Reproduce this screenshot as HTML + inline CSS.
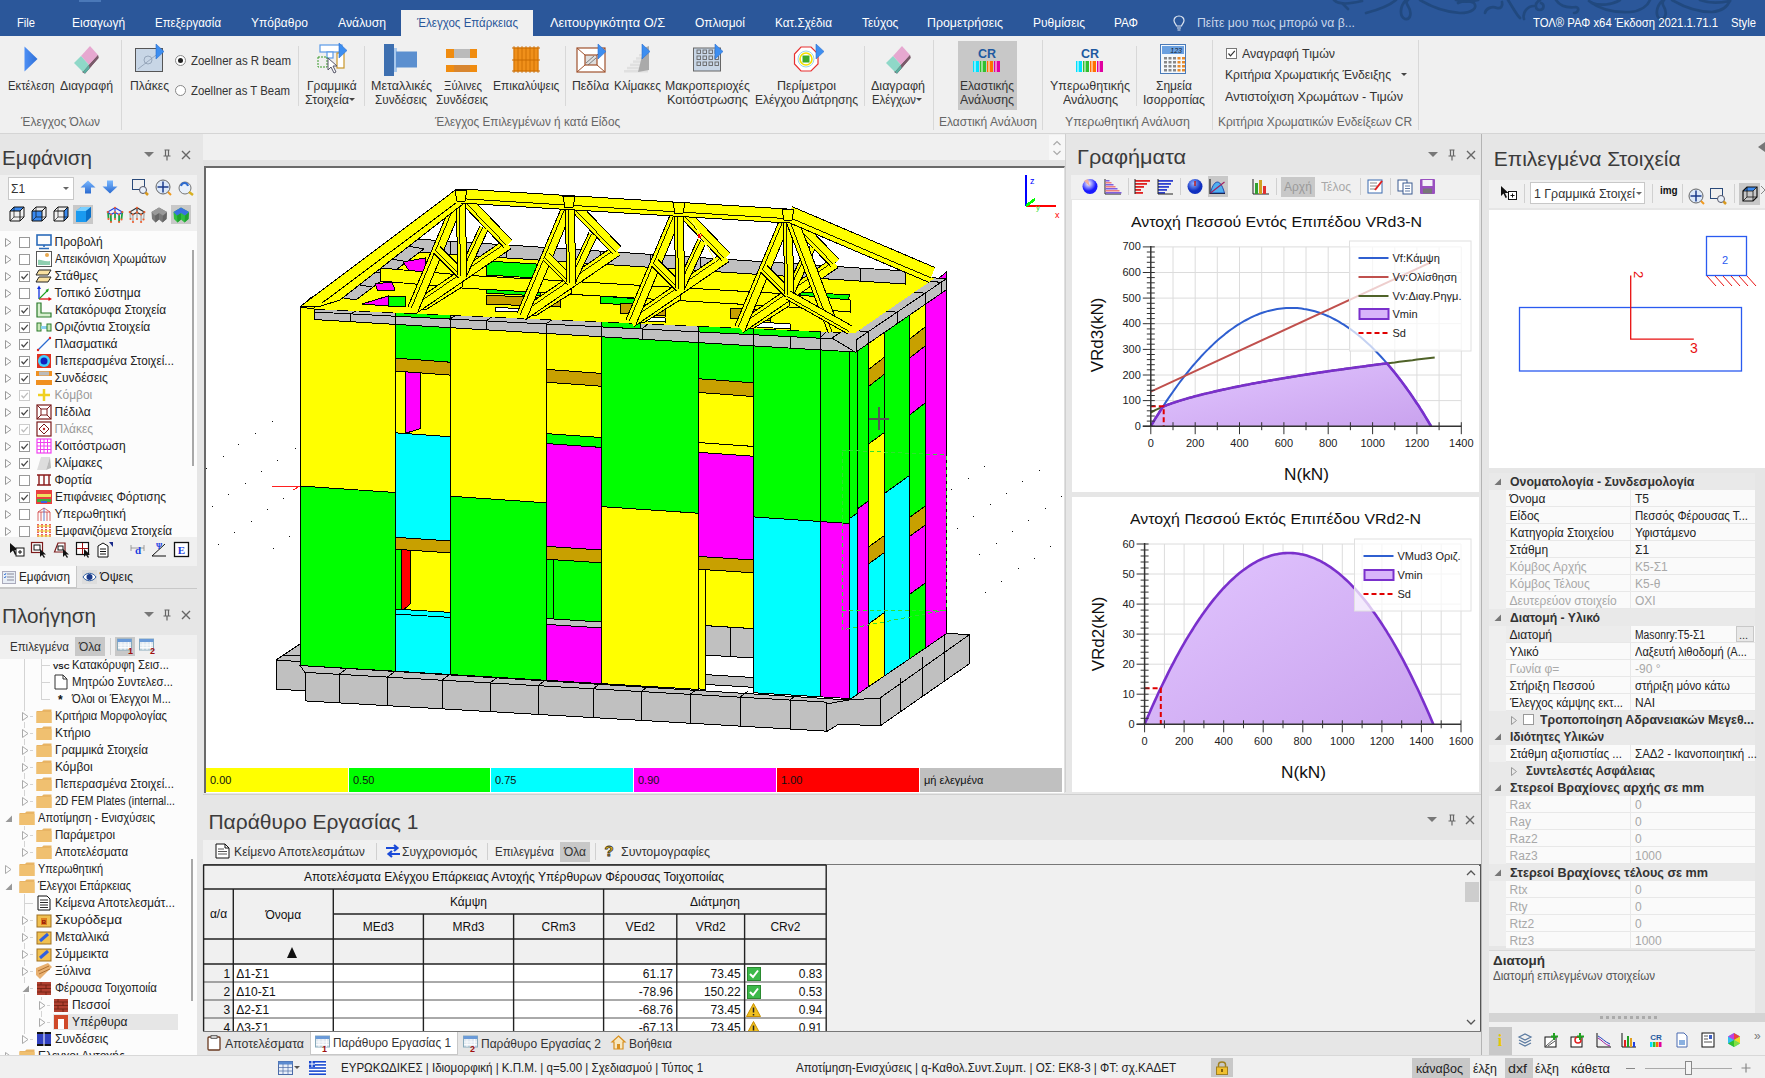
<!DOCTYPE html>
<html><head><meta charset="utf-8"><title>ΤΟΛ ΡΑΦ</title>
<style>
*{margin:0;padding:0;box-sizing:border-box}
html,body{width:1765px;height:1078px;overflow:hidden;background:#f0f0f0;font-family:"Liberation Sans",sans-serif;color:#222;font-size:12px}
.a{position:absolute}
.t{position:absolute;white-space:nowrap;line-height:14px;font-size:12px}
.c{text-align:center}
svg{position:absolute;overflow:visible}

</style></head>
<body>
<div class="a" style="left:0px;top:0px;width:1765px;height:36px;background:#2b579a;"></div>
<div class="a" style="left:79px;top:0px;width:22px;height:2px;background:#4a78b8;"></div>
<svg class="a" style="left:0;top:0" width="1765" height="36" viewBox="0 0 1765 36">
<g fill="none" stroke="#21497f" stroke-width="2.7" stroke-linecap="round">
<path d="M1334 0 C1338 4, 1346 5, 1362 1"/>
<path d="M1343 4 L1348 9"/>
<path d="M1366 13 C1378 10, 1390 5, 1396 0"/>
<path d="M1406 0 C1400 6, 1399 16, 1405 19 C1411 20, 1412 12, 1408 6 C1406 3, 1406 1, 1408 0"/>
<path d="M1420 0 C1430 6, 1445 12, 1460 13 C1472 13, 1478 8, 1474 3 C1470 0, 1462 1, 1458 3"/>
<path d="M1456 0 C1462 2, 1470 2, 1478 0"/>
<path d="M1485 13 C1486 8, 1492 6, 1497 8 C1501 9, 1503 6, 1502 2"/>
<path d="M1508 0 C1512 6, 1516 14, 1520 18"/>
<path d="M1524 19 C1522 12, 1528 6, 1534 6"/>
<path d="M1540 0 C1534 3, 1535 10, 1540 10 C1545 9, 1544 4, 1541 3"/>
<path d="M1556 0 C1560 6, 1568 8, 1576 7 C1580 8, 1578 13, 1574 13"/>
<path d="M1589 1 C1598 8, 1612 13, 1630 12 C1642 11, 1648 5, 1650 0"/>
<path d="M1592 3 C1600 6, 1612 5, 1620 0"/>
<path d="M1663 0 C1656 6, 1655 16, 1660 19 C1666 20, 1667 12, 1664 7 C1662 4, 1662 2, 1664 0"/>
<path d="M1672 0 C1684 7, 1698 12, 1712 12 C1722 11, 1728 6, 1730 0"/>
<path d="M1700 0 C1708 3, 1720 3, 1730 1"/>
</g></svg>
<div class="t" style="left:17.0px;top:16.0px;font-size:12px;line-height:14px;color:#ffffff;transform:scaleX(0.931);transform-origin:0 0;">File</div>
<div class="t" style="left:72.0px;top:16.0px;font-size:12px;line-height:14px;color:#ffffff;">Εισαγωγή</div>
<div class="t" style="left:155.0px;top:16.0px;font-size:12px;line-height:14px;color:#ffffff;transform:scaleX(0.955);transform-origin:0 0;">Επεξεργασία</div>
<div class="t" style="left:251.0px;top:16.0px;font-size:12px;line-height:14px;color:#ffffff;">Υπόβαθρο</div>
<div class="t" style="left:338.0px;top:16.0px;font-size:12px;line-height:14px;color:#ffffff;transform:scaleX(1.020);transform-origin:0 0;">Ανάλυση</div>
<div class="t" style="left:550.0px;top:16.0px;font-size:12px;line-height:14px;color:#ffffff;transform:scaleX(1.065);transform-origin:0 0;">Λειτουργικότητα Ο/Σ</div>
<div class="t" style="left:695.0px;top:16.0px;font-size:12px;line-height:14px;color:#ffffff;">Οπλισμοί</div>
<div class="t" style="left:775.0px;top:16.0px;font-size:12px;line-height:14px;color:#ffffff;transform:scaleX(0.979);transform-origin:0 0;">Κατ.Σχέδια</div>
<div class="t" style="left:862.0px;top:16.0px;font-size:12px;line-height:14px;color:#ffffff;">Τεύχος</div>
<div class="t" style="left:927.0px;top:16.0px;font-size:12px;line-height:14px;color:#ffffff;transform:scaleX(1.029);transform-origin:0 0;">Προμετρήσεις</div>
<div class="t" style="left:1033.0px;top:16.0px;font-size:12px;line-height:14px;color:#ffffff;">Ρυθμίσεις</div>
<div class="t" style="left:1114.0px;top:16.0px;font-size:12px;line-height:14px;color:#ffffff;transform:scaleX(0.986);transform-origin:0 0;">ΡΑΦ</div>
<div class="a" style="left:401px;top:10px;width:132px;height:26px;background:#f0f0f0;"></div>
<div class="t" style="left:417.0px;top:16.0px;font-size:12px;line-height:14px;color:#2b579a;transform:scaleX(0.961);transform-origin:0 0;">Έλεγχος Επάρκειας</div>
<svg style="left:1173px;top:15px" width="12" height="16" viewBox="0 0 12 16"><path d="M6 1 C2.5 1 1 3.5 1 5.5 C1 8 3 9 3.5 11 L8.5 11 C9 9 11 8 11 5.5 C11 3.5 9.5 1 6 1 Z" fill="none" stroke="#dfe6f0" stroke-width="1.2"/><path d="M4 13 H8 M4.5 15 H7.5" stroke="#dfe6f0" stroke-width="1.2"/></svg>
<div class="t" style="left:1197.0px;top:16.0px;font-size:12px;line-height:14px;color:#c9d6ea;transform:scaleX(1.022);transform-origin:0 0;">Πείτε μου πως μπορώ να β...</div>
<div class="t" style="left:1533.0px;top:16.0px;font-size:12px;line-height:14px;color:#ffffff;transform:scaleX(0.943);transform-origin:0 0;">ΤΟΛ® ΡΑΦ x64 Έκδοση 2021.1.71.1</div>
<div class="t" style="left:1731.0px;top:16.0px;font-size:12px;line-height:14px;color:#ffffff;transform:scaleX(0.937);transform-origin:0 0;">Style</div>
<div class="a" style="left:0px;top:36px;width:1765px;height:98px;background:#f0f0f0;"></div>
<div class="a" style="left:0px;top:133px;width:1765px;height:1px;background:#d5d5d5;"></div>
<div class="a" style="left:121px;top:40px;width:1px;height:90px;background:#d8d8d8;"></div>
<div class="a" style="left:298px;top:46px;width:1px;height:60px;background:#d8d8d8;"></div>
<div class="a" style="left:364px;top:46px;width:1px;height:60px;background:#d8d8d8;"></div>
<div class="a" style="left:565px;top:46px;width:1px;height:60px;background:#d8d8d8;"></div>
<div class="a" style="left:864px;top:46px;width:1px;height:60px;background:#d8d8d8;"></div>
<div class="a" style="left:933px;top:40px;width:1px;height:90px;background:#d8d8d8;"></div>
<div class="a" style="left:1042px;top:40px;width:1px;height:90px;background:#d8d8d8;"></div>
<div class="a" style="left:1136px;top:46px;width:1px;height:60px;background:#d8d8d8;"></div>
<div class="a" style="left:1212px;top:40px;width:1px;height:90px;background:#d8d8d8;"></div>
<div class="a" style="left:1418px;top:40px;width:1px;height:90px;background:#d8d8d8;"></div>
<div class="a" style="left:958px;top:41px;width:59px;height:69px;background:#c8c8c8;"></div>
<div class="t" style="left:7.5px;top:79.0px;font-size:12px;line-height:14px;color:#333;transform:scaleX(0.939);transform-origin:0 0;">Εκτέλεση</div>
<div class="t" style="left:60.0px;top:79.0px;font-size:12px;line-height:14px;color:#333;transform:scaleX(1.022);transform-origin:0 0;">Διαγραφή</div>
<div class="t" style="left:130.0px;top:79.0px;font-size:12px;line-height:14px;color:#333;transform:scaleX(1.012);transform-origin:0 0;">Πλάκες</div>
<div class="t" style="left:307.0px;top:79.0px;font-size:12px;line-height:14px;color:#333;">Γραμμικά</div>
<div class="t" style="left:305.0px;top:93.0px;font-size:12px;line-height:14px;color:#333;transform:scaleX(1.047);transform-origin:0 0;">Στοιχεία</div>
<div class="t" style="left:371.0px;top:79.0px;font-size:12px;line-height:14px;color:#333;transform:scaleX(1.040);transform-origin:0 0;">Μεταλλικές</div>
<div class="t" style="left:375.0px;top:93.0px;font-size:12px;line-height:14px;color:#333;transform:scaleX(0.977);transform-origin:0 0;">Συνδέσεις</div>
<div class="t" style="left:444.0px;top:79.0px;font-size:12px;line-height:14px;color:#333;transform:scaleX(0.946);transform-origin:0 0;">Ξύλινες</div>
<div class="t" style="left:436.0px;top:93.0px;font-size:12px;line-height:14px;color:#333;transform:scaleX(0.977);transform-origin:0 0;">Συνδέσεις</div>
<div class="t" style="left:493.0px;top:79.0px;font-size:12px;line-height:14px;color:#333;">Επικαλύψεις</div>
<div class="t" style="left:572.0px;top:79.0px;font-size:12px;line-height:14px;color:#333;transform:scaleX(1.024);transform-origin:0 0;">Πεδίλα</div>
<div class="t" style="left:614.0px;top:79.0px;font-size:12px;line-height:14px;color:#333;transform:scaleX(0.986);transform-origin:0 0;">Κλίμακες</div>
<div class="t" style="left:665.0px;top:79.0px;font-size:12px;line-height:14px;color:#333;transform:scaleX(1.022);transform-origin:0 0;">Μακροπεριοχές</div>
<div class="t" style="left:667.0px;top:93.0px;font-size:12px;line-height:14px;color:#333;transform:scaleX(1.054);transform-origin:0 0;">Κοιτόστρωσης</div>
<div class="t" style="left:777.0px;top:79.0px;font-size:12px;line-height:14px;color:#333;transform:scaleX(1.041);transform-origin:0 0;">Περίμετροι</div>
<div class="t" style="left:755.0px;top:93.0px;font-size:12px;line-height:14px;color:#333;">Ελέγχου Διάτρησης</div>
<div class="t" style="left:871.0px;top:79.0px;font-size:12px;line-height:14px;color:#333;transform:scaleX(1.042);transform-origin:0 0;">Διαγραφή</div>
<div class="t" style="left:872.0px;top:93.0px;font-size:12px;line-height:14px;color:#333;transform:scaleX(0.942);transform-origin:0 0;">Ελέγχων</div>
<div class="t" style="left:960.0px;top:79.0px;font-size:12px;line-height:14px;color:#333;">Ελαστικής</div>
<div class="t" style="left:960.0px;top:93.0px;font-size:12px;line-height:14px;color:#333;transform:scaleX(1.022);transform-origin:0 0;">Ανάλυσης</div>
<div class="t" style="left:1050.0px;top:79.0px;font-size:12px;line-height:14px;color:#333;transform:scaleX(1.038);transform-origin:0 0;">Υπερωθητικής</div>
<div class="t" style="left:1063.0px;top:93.0px;font-size:12px;line-height:14px;color:#333;transform:scaleX(1.040);transform-origin:0 0;">Ανάλυσης</div>
<div class="t" style="left:1156.0px;top:79.0px;font-size:12px;line-height:14px;color:#333;">Σημεία</div>
<div class="t" style="left:1143.0px;top:93.0px;font-size:12px;line-height:14px;color:#333;transform:scaleX(1.012);transform-origin:0 0;">Ισορροπίας</div>
<svg style="left:349px;top:98px" width="6" height="4"><path d="M0 0 H6 L3 3 Z" fill="#444"/></svg>
<svg style="left:916px;top:98px" width="6" height="4"><path d="M0 0 H6 L3 3 Z" fill="#444"/></svg>
<svg style="left:1401px;top:73px" width="6" height="4"><path d="M0 0 H6 L3 3 Z" fill="#444"/></svg>
<div class="t" style="left:21.0px;top:115.0px;font-size:12px;line-height:14px;color:#666;">Έλεγχος Όλων</div>
<div class="t" style="left:435.0px;top:115.0px;font-size:12px;line-height:14px;color:#666;transform:scaleX(0.978);transform-origin:0 0;">Έλεγχος Επιλεγμένων ή κατά Είδος</div>
<div class="t" style="left:939.0px;top:115.0px;font-size:12px;line-height:14px;color:#666;">Ελαστική Ανάλυση</div>
<div class="t" style="left:1065.0px;top:115.0px;font-size:12px;line-height:14px;color:#666;transform:scaleX(1.033);transform-origin:0 0;">Υπερωθητική Ανάλυση</div>
<div class="t" style="left:1218.0px;top:115.0px;font-size:12px;line-height:14px;color:#666;">Κριτήρια Χρωματικών Ενδείξεων CR</div>
<div class="a" style="left:175px;top:55px;width:11px;height:11px;border:1px solid #888;border-radius:50%;background:#fff"></div><div class="a" style="left:178px;top:58px;width:5px;height:5px;border-radius:50%;background:#222"></div>
<div class="a" style="left:175px;top:85px;width:11px;height:11px;border:1px solid #888;border-radius:50%;background:#fff"></div>
<div class="t" style="left:191.0px;top:54.0px;font-size:12px;line-height:14px;color:#333;transform:scaleX(0.955);transform-origin:0 0;">Zoellner as R beam</div>
<div class="t" style="left:191.0px;top:84.0px;font-size:12px;line-height:14px;color:#333;transform:scaleX(0.949);transform-origin:0 0;">Zoellner as T Beam</div>
<div class="a" style="left:1226px;top:48px;width:11px;height:11px;border:1px solid #777;background:#fff"></div><svg style="left:1227px;top:49px" width="9" height="9"><path d="M1.5 4.5 L3.5 6.8 L7.8 1.8" fill="none" stroke="#333" stroke-width="1.2"/></svg>
<div class="t" style="left:1242.0px;top:47.0px;font-size:12px;line-height:14px;color:#333;transform:scaleX(1.035);transform-origin:0 0;">Αναγραφή Τιμών</div>
<div class="t" style="left:1225.0px;top:68.0px;font-size:12px;line-height:14px;color:#333;transform:scaleX(1.013);transform-origin:0 0;">Κριτήρια Χρωματικής Ένδειξης</div>
<div class="t" style="left:1225.0px;top:90.0px;font-size:12px;line-height:14px;color:#333;transform:scaleX(1.052);transform-origin:0 0;">Αντιστοίχιση Χρωμάτων - Τιμών</div>
<svg style="left:24px;top:46px" width="14" height="26" viewBox="0 0 14 26"><defs><linearGradient id="pg" x1="0" x2="1"><stop offset="0" stop-color="#4d8ff5"/><stop offset="1" stop-color="#2f6fd6"/></linearGradient></defs><path d="M0.5 0.5 L13.5 13 L0.5 25.5 Z" fill="url(#pg)"/></svg>
<svg style="left:73px;top:45px" width="26" height="28" viewBox="0 0 26 28"><path d="M25 10 L25.5 13 L12 28.5 L9 27 Z" fill="#6a4a5a"/><path d="M17 1 L25 10 L16 20 L8 11 Z" fill="#e6a8d0"/><path d="M8 11 L16 20 L10 27 L1 18 Z" fill="#8fd8c8"/><path d="M16 20 L25 10 L25.5 13 L12 28.5 L10 27 Z" fill="#7a5a6a"/><path d="M10 27 L12 28.5 L16.5 23.5 L16 20 Z" fill="#5ab0a0"/></svg>
<svg style="left:885px;top:45px" width="26" height="28" viewBox="0 0 26 28"><path d="M25 10 L25.5 13 L12 28.5 L9 27 Z" fill="#6a4a5a"/><path d="M17 1 L25 10 L16 20 L8 11 Z" fill="#e6a8d0"/><path d="M8 11 L16 20 L10 27 L1 18 Z" fill="#8fd8c8"/><path d="M16 20 L25 10 L25.5 13 L12 28.5 L10 27 Z" fill="#7a5a6a"/><path d="M10 27 L12 28.5 L16.5 23.5 L16 20 Z" fill="#5ab0a0"/></svg>
<svg style="left:135px;top:44px" width="30" height="30" viewBox="0 0 30 30"><rect x="0.5" y="4.5" width="27" height="23" fill="#c8d6e6" stroke="#555" stroke-width="1"/><circle cx="13" cy="16" r="4" fill="none" stroke="#8a9ab0" stroke-width="0.8"/><path d="M3 25 L25 8" stroke="#8a9ab0" stroke-width="0.8"/><g transform="translate(21,0)"><path d="M0 0 L8 7.5 L0 15 Z" fill="#3d8ef0" stroke="#2a6fd0" stroke-width="0.6"/></g></svg>
<svg style="left:317px;top:43px" width="31" height="32" viewBox="0 0 31 32"><rect x="3" y="2" width="22" height="7" fill="#fff" stroke="#5a9ae8" stroke-width="1.2"/><rect x="10" y="9" width="6" height="6" fill="#fff" stroke="#5a9ae8" stroke-width="1.2"/><rect x="1" y="14" width="9" height="10" fill="none" stroke="#3a9a2a" stroke-width="1" stroke-dasharray="2 1"/><rect x="20" y="10" width="7" height="15" fill="#fff" stroke="#c8962a" stroke-width="1.2"/><path d="M11 15 L11 27 L14 24 L17 30 L19 29 L16 23 L20 23 Z" fill="#fff" stroke="#556" stroke-width="1"/><g transform="translate(22,0)"><path d="M0 0 L8 7.5 L0 15 Z" fill="#3d8ef0" stroke="#2a6fd0" stroke-width="0.6"/></g></svg>
<svg style="left:384px;top:44px" width="34" height="32" viewBox="0 0 34 32"><rect x="0" y="0" width="10" height="32" fill="#3d6fb0"/><rect x="10" y="4" width="3" height="24" fill="#a8c8ec"/><rect x="12" y="7.5" width="21" height="16" fill="#5b8fcf"/></svg>
<svg style="left:446px;top:48px" width="32" height="24" viewBox="0 0 32 24"><rect x="0" y="1" width="31" height="9" fill="#f08c10"/><rect x="8" y="1" width="16" height="9" fill="#bbb"/><rect x="0" y="17" width="31" height="7" fill="#f08c10"/><rect x="8" y="17" width="16" height="7" fill="#c08050" opacity="0.5"/></svg>
<svg style="left:512px;top:46px" width="28" height="28" viewBox="0 0 28 28"><rect x="1.5" y="1.5" width="25" height="24" fill="#f0901a"/><path d="M2 0 V27" stroke="#c86a00" stroke-width="0.8"/><path d="M6 0 V27" stroke="#c86a00" stroke-width="0.8"/><path d="M10 0 V27" stroke="#c86a00" stroke-width="0.8"/><path d="M14 0 V27" stroke="#c86a00" stroke-width="0.8"/><path d="M18 0 V27" stroke="#c86a00" stroke-width="0.8"/><path d="M22 0 V27" stroke="#c86a00" stroke-width="0.8"/><path d="M26 0 V27" stroke="#c86a00" stroke-width="0.8"/><path d="M0 2 H28 M0 14 H28 M0 25 H28" stroke="#c86a00" stroke-width="1"/></svg>
<svg style="left:576px;top:44px" width="32" height="30" viewBox="0 0 32 30"><rect x="1" y="4" width="28" height="24" fill="#fff" stroke="#a0522d" stroke-width="1.2"/><path d="M1 4 L9 11 M29 4 L21 11 M1 28 L9 21 M29 28 L21 21" stroke="#a0522d" stroke-width="1"/><rect x="9" y="11" width="12" height="10" fill="#ddd" stroke="#a0522d" stroke-width="1.2"/><path d="M10 19 L18 12 M12 21 L20 14" stroke="#666" stroke-width="0.8"/><g transform="translate(22,0)"><path d="M0 0 L8 7.5 L0 15 Z" fill="#3d8ef0" stroke="#2a6fd0" stroke-width="0.6"/></g></svg>
<svg style="left:622px;top:44px" width="30" height="32" viewBox="0 0 30 32"><rect x="2" y="26.0" width="24" height="2.5" fill="#e0e0e0"/><rect x="5" y="22.8" width="21" height="2.5" fill="#e0e0e0"/><rect x="8" y="19.6" width="18" height="2.5" fill="#e0e0e0"/><rect x="11" y="16.4" width="15" height="2.5" fill="#e0e0e0"/><rect x="14" y="13.2" width="12" height="2.5" fill="#e0e0e0"/><rect x="17" y="10.0" width="9" height="2.5" fill="#e0e0e0"/><rect x="20" y="6.8" width="6" height="2.5" fill="#e0e0e0"/><rect x="23" y="3.6" width="3" height="2.5" fill="#e0e0e0"/><path d="M16 28 L27 26 L27 2 L22 4 Z" fill="#aaa"/><g transform="translate(20,0)"><path d="M0 0 L8 7.5 L0 15 Z" fill="#3d8ef0" stroke="#2a6fd0" stroke-width="0.6"/></g></svg>
<svg style="left:693px;top:44px" width="32" height="30" viewBox="0 0 32 30"><rect x="0.5" y="4" width="27" height="23" fill="#c8d6e6" stroke="#666" stroke-width="1"/><rect x="4" y="6" width="3.5" height="3.5" fill="none" stroke="#666" stroke-width="0.9"/><rect x="10" y="6" width="3.5" height="3.5" fill="none" stroke="#666" stroke-width="0.9"/><rect x="16" y="6" width="3.5" height="3.5" fill="none" stroke="#666" stroke-width="0.9"/><rect x="22" y="6" width="3.5" height="3.5" fill="none" stroke="#666" stroke-width="0.9"/><rect x="4" y="12" width="3.5" height="3.5" fill="none" stroke="#666" stroke-width="0.9"/><rect x="10" y="12" width="3.5" height="3.5" fill="none" stroke="#666" stroke-width="0.9"/><rect x="16" y="12" width="3.5" height="3.5" fill="none" stroke="#666" stroke-width="0.9"/><rect x="22" y="12" width="3.5" height="3.5" fill="none" stroke="#666" stroke-width="0.9"/><rect x="4" y="18" width="3.5" height="3.5" fill="none" stroke="#666" stroke-width="0.9"/><rect x="10" y="18" width="3.5" height="3.5" fill="none" stroke="#666" stroke-width="0.9"/><rect x="16" y="18" width="3.5" height="3.5" fill="none" stroke="#666" stroke-width="0.9"/><rect x="22" y="18" width="3.5" height="3.5" fill="none" stroke="#666" stroke-width="0.9"/><g transform="translate(22,0)"><path d="M0 0 L8 7.5 L0 15 Z" fill="#3d8ef0" stroke="#2a6fd0" stroke-width="0.6"/></g></svg>
<svg style="left:794px;top:44px" width="32" height="30" viewBox="0 0 32 30"><path d="M7 3 L17 3 L24 10 L24 20 L17 27 L7 27 L0.5 20 L0.5 10 Z" fill="#fff" stroke="#e83030" stroke-width="1.2"/><circle cx="12" cy="15" r="8" fill="none" stroke="#9ad4ec" stroke-width="1"/><circle cx="12" cy="15" r="6" fill="#fff" stroke="#f4e000" stroke-width="1.6"/><rect x="8.5" y="11.5" width="7" height="7" fill="#3aaa2a"/><g transform="translate(22,0)"><path d="M0 0 L8 7.5 L0 15 Z" fill="#3d8ef0" stroke="#2a6fd0" stroke-width="0.6"/></g></svg>
<svg style="left:973px;top:48px" width="28" height="25" viewBox="0 0 28 25"><text x="14" y="9.5" text-anchor="middle" font-family="Liberation Sans" font-weight="bold" font-size="12.5" fill="#1f5aa0">CR</text><rect x="0" y="13" width="6" height="11" fill="#00e0ff"/><rect x="1" y="13" width="2" height="11" fill="#fff" opacity="0.5"/><rect x="7" y="13" width="6" height="11" fill="#30c030"/><rect x="8" y="13" width="2" height="11" fill="#fff" opacity="0.5"/><rect x="14" y="13" width="6" height="11" fill="#ff7000"/><rect x="15" y="13" width="2" height="11" fill="#fff" opacity="0.5"/><rect x="21" y="13" width="6" height="11" fill="#e000a0"/><rect x="22" y="13" width="2" height="11" fill="#fff" opacity="0.5"/></svg>
<svg style="left:1076px;top:48px" width="28" height="25" viewBox="0 0 28 25"><text x="14" y="9.5" text-anchor="middle" font-family="Liberation Sans" font-weight="bold" font-size="12.5" fill="#1f5aa0">CR</text><rect x="0" y="13" width="6" height="11" fill="#00e0ff"/><rect x="1" y="13" width="2" height="11" fill="#fff" opacity="0.5"/><rect x="7" y="13" width="6" height="11" fill="#30c030"/><rect x="8" y="13" width="2" height="11" fill="#fff" opacity="0.5"/><rect x="14" y="13" width="6" height="11" fill="#ff7000"/><rect x="15" y="13" width="2" height="11" fill="#fff" opacity="0.5"/><rect x="21" y="13" width="6" height="11" fill="#e000a0"/><rect x="22" y="13" width="2" height="11" fill="#fff" opacity="0.5"/></svg>
<svg style="left:1160px;top:44px" width="27" height="31" viewBox="0 0 27 31"><rect x="0.5" y="0.5" width="25" height="29" fill="#f4f8fc" stroke="#4a7ab8" stroke-width="1"/><rect x="2" y="2" width="22" height="8" fill="#6aa0e0"/><text x="22" y="9" text-anchor="end" font-family="Liberation Sans" font-size="7" fill="#123" font-style="italic">123</text><rect x="4.0" y="13" width="3" height="2.5" fill="#888"/><rect x="8.5" y="13" width="3" height="2.5" fill="#888"/><rect x="13.0" y="13" width="3" height="2.5" fill="#888"/><rect x="17.5" y="13" width="3" height="2.5" fill="#e88a2a"/><rect x="22.0" y="13" width="3" height="2.5" fill="#e88a2a"/><rect x="4.0" y="17" width="3" height="2.5" fill="#888"/><rect x="8.5" y="17" width="3" height="2.5" fill="#888"/><rect x="13.0" y="17" width="3" height="2.5" fill="#888"/><rect x="17.5" y="17" width="3" height="2.5" fill="#e88a2a"/><rect x="22.0" y="17" width="3" height="2.5" fill="#e88a2a"/><rect x="4.0" y="21" width="3" height="2.5" fill="#888"/><rect x="8.5" y="21" width="3" height="2.5" fill="#888"/><rect x="13.0" y="21" width="3" height="2.5" fill="#888"/><rect x="17.5" y="21" width="3" height="2.5" fill="#e88a2a"/><rect x="22.0" y="21" width="3" height="2.5" fill="#e88a2a"/><rect x="4.0" y="25" width="3" height="2.5" fill="#888"/><rect x="8.5" y="25" width="3" height="2.5" fill="#888"/><rect x="13.0" y="25" width="3" height="2.5" fill="#888"/><rect x="17.5" y="25" width="3" height="2.5" fill="#e88a2a"/><rect x="22.0" y="25" width="3" height="2.5" fill="#e88a2a"/></svg>
<div class="a" style="left:0px;top:134px;width:203px;height:922px;background:#e6e6e6;"></div>
<div class="t" style="left:2.0px;top:145.0px;font-size:21px;line-height:25px;color:#3b3b3b;transform:scaleX(0.982);transform-origin:0 0;">Εμφάνιση</div>
<svg style="left:144px;top:152px;" width="10" height="6" viewBox="0 0 10 6"><path d="M0 0 H10 L5 5 Z" fill="#777"/></svg>
<svg style="left:163px;top:149px;" width="8" height="12" viewBox="0 0 8 12"><path d="M1.5 1 H6.5 M2.5 1 V7 H5.5 V1 M0.5 7 H7.5 M4 7 V11.5" stroke="#666" stroke-width="1.2" fill="none"/></svg>
<svg style="left:181px;top:150px;" width="10" height="10" viewBox="0 0 10 10"><path d="M1 1 L9 9 M9 1 L1 9" stroke="#666" stroke-width="1.4"/></svg>
<div class="a" style="left:0px;top:175px;width:197px;height:56px;background:#f0f0f0;"></div>
<div class="a" style="left:8px;top:177px;width:66px;height:23px;background:#fff;border:1px solid #c8c8c8"></div>
<div class="t" style="left:11.0px;top:182.0px;font-size:12px;line-height:14px;color:#333;">Σ1</div>
<svg style="left:63px;top:187px;" width="6" height="4" viewBox="0 0 6 4"><path d="M0 0 H6 L3 3 Z" fill="#666"/></svg>
<svg style="left:80px;top:180px;" width="16" height="14" viewBox="0 0 16 14"><defs><linearGradient id="ua" x1="0" y1="0" x2="0" y2="1"><stop offset="0" stop-color="#7ab8ff"/><stop offset="1" stop-color="#2a6ad0"/></linearGradient></defs><path d="M8 0.5 L15.5 7.5 L11 7.5 L11 13.5 L5 13.5 L5 7.5 L0.5 7.5 Z" fill="url(#ua)"/></svg>
<svg style="left:102px;top:180px;" width="16" height="14" viewBox="0 0 16 14"><defs><linearGradient id="da" x1="0" y1="0" x2="0" y2="1"><stop offset="0" stop-color="#7ab8ff"/><stop offset="1" stop-color="#2a6ad0"/></linearGradient></defs><path d="M8 13.5 L15.5 6.5 L11 6.5 L11 0.5 L5 0.5 L5 6.5 L0.5 6.5 Z" fill="url(#da)"/></svg>
<svg style="left:132px;top:179px;" width="17" height="17" viewBox="0 0 17 17"><rect x="0.5" y="0.5" width="12" height="10" fill="none" stroke="#2a4a7a" stroke-width="1"/><circle cx="11" cy="11" r="3.5" fill="#e8f0fa" stroke="#556" stroke-width="1"/><path d="M13.5 13.5 L16 16" stroke="#d89a20" stroke-width="2.5"/></svg>
<svg style="left:155px;top:179px;" width="17" height="17" viewBox="0 0 17 17"><circle cx="8" cy="8" r="7" fill="#dce8f8" stroke="#666" stroke-width="1"/><path d="M8 2.5 V13.5 M2.5 8 H13.5" stroke="#1a3a8a" stroke-width="1.5"/><path d="M16 16 L13 13" stroke="#f09a20" stroke-width="2"/></svg>
<svg style="left:177px;top:179px;" width="17" height="17" viewBox="0 0 17 17"><circle cx="8" cy="9" r="6" fill="#e8f0fa" stroke="#777" stroke-width="1"/><path d="M4 7 C5 3, 10 3, 11 7" stroke="#2a6ad0" stroke-width="2" fill="none"/><path d="M12 13 L16 16" stroke="#d8b020" stroke-width="2.5"/></svg>
<svg style="left:9px;top:206px;" width="16" height="16" viewBox="0 0 16 16"><path d="M1 5 L5 1 L15 1 L11 5 Z" fill="#3a8af0"/><path d="M1 5 L5 1 L15 1 L15 11 L11 15 L1 15 Z" fill="none" stroke="#111" stroke-width="1"/><path d="M1 5 H11 V15 M11 5 L15 1" stroke="#111" stroke-width="1" fill="none"/><path d="M5 1 V11 H15 M5 11 L1 15" stroke="#111" stroke-width="0.7" fill="none"/></svg>
<svg style="left:31px;top:206px;" width="16" height="16" viewBox="0 0 16 16"><rect x="1" y="5" width="10" height="10" fill="#3a8af0"/><path d="M1 5 L5 1 L15 1 L15 11 L11 15 L1 15 Z" fill="none" stroke="#111" stroke-width="1"/><path d="M1 5 H11 V15 M11 5 L15 1" stroke="#111" stroke-width="1" fill="none"/><path d="M5 1 V11 H15 M5 11 L1 15" stroke="#111" stroke-width="0.7" fill="none"/></svg>
<svg style="left:53px;top:206px;" width="16" height="16" viewBox="0 0 16 16"><path d="M11 5 L15 1 L15 11 L11 15 Z" fill="#3a8af0"/><path d="M1 5 L5 1 L15 1 L15 11 L11 15 L1 15 Z" fill="none" stroke="#111" stroke-width="1"/><path d="M1 5 H11 V15 M11 5 L15 1" stroke="#111" stroke-width="1" fill="none"/><path d="M5 1 V11 H15 M5 11 L1 15" stroke="#111" stroke-width="0.7" fill="none"/></svg>
<div class="a" style="left:73px;top:205px;width:20px;height:19px;background:#c8c8c8;"></div>
<svg style="left:75px;top:206px;" width="17" height="17" viewBox="0 0 17 17"><path d="M1 5 L6 1 L16 1 L16 11 L11 16 L1 16 Z" fill="#1a9af0"/><path d="M1 5 L6 1 L16 1 L11 5 Z" fill="#7ad0ff"/><path d="M11 5 L16 1 L16 11 L11 16 Z" fill="#0a70c8"/></svg>
<svg style="left:107px;top:207px;" width="17" height="16" viewBox="0 0 17 16"><path d="M1.5 11.5 L1 5 M4 15 L3.8 7.5 M8 11.5 V5.4 M12.1 15 V7.5 M14.5 12 L15.3 5" stroke="#20a040" stroke-width="1.8"/><path d="M8 0.7 L0.7 5 L3.8 7.5 L8 5.4 L12.1 7.5 L15.3 5 Z M8 0.7 V5.4" stroke="#2040e0" stroke-width="1.2" fill="none"/><circle cx="8" cy="0.8" r="1.1" fill="#f06030"/><circle cx="0.8" cy="5" r="1.1" fill="#f06030"/><circle cx="15.3" cy="5" r="1.1" fill="#f06030"/><circle cx="8" cy="5.4" r="1.1" fill="#f06030"/><circle cx="3.8" cy="7.5" r="1.1" fill="#f06030"/><circle cx="12.1" cy="7.5" r="1.1" fill="#f06030"/><circle cx="1.5" cy="12" r="1.1" fill="#f06030"/><circle cx="4" cy="15" r="1.1" fill="#f06030"/><circle cx="8" cy="12" r="1.1" fill="#f06030"/><circle cx="12.1" cy="15" r="1.1" fill="#f06030"/><circle cx="14.5" cy="12.5" r="1.1" fill="#f06030"/></svg>
<svg style="left:129px;top:207px;" width="17" height="16" viewBox="0 0 17 16"><path d="M1.5 11.5 L1 5 M4 15 L3.8 7.5 M8 11.5 V5.4 M12.1 15 V7.5 M14.5 12 L15.3 5" stroke="#bbb" stroke-width="1.8"/><path d="M8 0.7 L0.7 5 L3.8 7.5 L8 5.4 L12.1 7.5 L15.3 5 Z M8 0.7 V5.4" stroke="#333" stroke-width="1.2" fill="none"/><circle cx="8" cy="0.8" r="1.1" fill="#f06030"/><circle cx="0.8" cy="5" r="1.1" fill="#f06030"/><circle cx="15.3" cy="5" r="1.1" fill="#f06030"/><circle cx="8" cy="5.4" r="1.1" fill="#f06030"/><circle cx="3.8" cy="7.5" r="1.1" fill="#f06030"/><circle cx="12.1" cy="7.5" r="1.1" fill="#f06030"/><circle cx="1.5" cy="12" r="1.1" fill="#f06030"/><circle cx="4" cy="15" r="1.1" fill="#f06030"/><circle cx="8" cy="12" r="1.1" fill="#f06030"/><circle cx="12.1" cy="15" r="1.1" fill="#f06030"/><circle cx="14.5" cy="12.5" r="1.1" fill="#f06030"/></svg>
<svg style="left:151px;top:207px;" width="17" height="16" viewBox="0 0 17 16"><path d="M0.5 5 L8 0.5 L16 5 L15.5 12 L11.5 15.5 L8 12.5 L4.5 15.5 L1 12 Z" fill="#7a7a7a"/><path d="M4 8.5 L8 6 L8 12.5 L4.5 15.5 Z" fill="#666"/><path d="M12 8.5 L15.8 5.5 L15.5 12 L11.5 15.5 Z" fill="#666"/><path d="M0.5 5 L8 0.5 L16 5 L12 8.5 L8 6 L4 8.5 Z" fill="#999"/></svg>
<div class="a" style="left:171px;top:205px;width:20px;height:19px;background:#c8c8c8;"></div>
<svg style="left:173px;top:207px;" width="17" height="16" viewBox="0 0 17 16"><path d="M0.5 5 L8 0.5 L16 5 L15.5 12 L11.5 15.5 L8 12.5 L4.5 15.5 L1 12 Z" fill="#30c040"/><path d="M4 8.5 L8 6 L8 12.5 L4.5 15.5 Z" fill="#20a030"/><path d="M12 8.5 L15.8 5.5 L15.5 12 L11.5 15.5 Z" fill="#20a030"/><path d="M0.5 5 L8 0.5 L16 5 L12 8.5 L8 6 L4 8.5 Z" fill="#3a70e0"/></svg>
<div class="a" style="left:0px;top:231px;width:197px;height:306px;background:#fcfcfc;"></div>
<div class="a" style="left:192px;top:250px;width:2px;height:216px;background:#a8a8a8;"></div>
<svg style="left:5px;top:238px;" width="7" height="9" viewBox="0 0 7 9"><path d="M0.5 0.5 L6 4.5 L0.5 8.5 Z" fill="none" stroke="#999" stroke-width="1"/></svg>
<div class="a" style="left:19px;top:237px;width:11px;height:11px;border:1px solid #999;background:#fff"></div>
<svg style="left:36px;top:234px;" width="16" height="16" viewBox="0 0 16 16"><rect x="1" y="1" width="14" height="10" fill="none" stroke="#2a6ab8" stroke-width="1.6"/><path d="M8 11 V13 M3 14.5 H13" stroke="#2a6ab8" stroke-width="1.6"/></svg>
<div class="t" style="left:54.6px;top:235.0px;font-size:12px;line-height:14px;color:#222;">Προβολή</div>
<svg style="left:5px;top:255px;" width="7" height="9" viewBox="0 0 7 9"><path d="M0.5 0.5 L6 4.5 L0.5 8.5 Z" fill="none" stroke="#999" stroke-width="1"/></svg>
<div class="a" style="left:19px;top:254px;width:11px;height:11px;border:1px solid #999;background:#fff"></div>
<svg style="left:36px;top:251px;" width="16" height="16" viewBox="0 0 16 16"><rect x="0.5" y="0.5" width="15" height="15" fill="#fff" stroke="#555"/><path d="M2 14 V9 C5 8, 8 11, 14 10 V14 Z" fill="#8fcfb0"/><circle cx="11" cy="4" r="2" fill="#e8a850"/></svg>
<div class="t" style="left:54.6px;top:252.0px;font-size:12px;line-height:14px;color:#222;transform:scaleX(0.918);transform-origin:0 0;">Απεικόνιση Χρωμάτων</div>
<svg style="left:5px;top:272px;" width="7" height="9" viewBox="0 0 7 9"><path d="M0.5 0.5 L6 4.5 L0.5 8.5 Z" fill="none" stroke="#999" stroke-width="1"/></svg>
<div class="a" style="left:19px;top:271px;width:11px;height:11px;border:1px solid #999;background:#fff"></div>
<svg style="left:20px;top:272px;" width="9" height="9" viewBox="0 0 9 9"><path d="M1.5 4.5 L3.5 6.8 L7.8 1.8" fill="none" stroke="#444" stroke-width="1.3"/></svg>
<svg style="left:36px;top:268px;" width="16" height="16" viewBox="0 0 16 16"><path d="M3 2 H15 L12 7 H0 Z M3 9 H15 L12 14 H0 Z" fill="#f8e0a0" stroke="#222" stroke-width="1"/></svg>
<div class="t" style="left:54.6px;top:269.0px;font-size:12px;line-height:14px;color:#222;">Στάθμες</div>
<svg style="left:5px;top:289px;" width="7" height="9" viewBox="0 0 7 9"><path d="M0.5 0.5 L6 4.5 L0.5 8.5 Z" fill="none" stroke="#999" stroke-width="1"/></svg>
<div class="a" style="left:19px;top:288px;width:11px;height:11px;border:1px solid #999;background:#fff"></div>
<svg style="left:36px;top:285px;" width="16" height="16" viewBox="0 0 16 16"><path d="M3 14 V2" stroke="#1030e0" stroke-width="1.3"/><path d="M1 4 L3 0.5 L5 4 Z" fill="#1030e0"/><path d="M3 14 H14" stroke="#e01010" stroke-width="1.3"/><path d="M12.5 12 L16 14 L12.5 16 Z" fill="#e01010"/><path d="M3 14 L12 5" stroke="#20a020" stroke-width="1.1"/><path d="M9.5 5 L13 3.5 L11.8 7.2 Z" fill="#20a020"/></svg>
<div class="t" style="left:54.6px;top:286.0px;font-size:12px;line-height:14px;color:#222;">Τοπικό Σύστημα</div>
<svg style="left:5px;top:306px;" width="7" height="9" viewBox="0 0 7 9"><path d="M0.5 0.5 L6 4.5 L0.5 8.5 Z" fill="none" stroke="#999" stroke-width="1"/></svg>
<div class="a" style="left:19px;top:305px;width:11px;height:11px;border:1px solid #999;background:#fff"></div>
<svg style="left:20px;top:306px;" width="9" height="9" viewBox="0 0 9 9"><path d="M1.5 4.5 L3.5 6.8 L7.8 1.8" fill="none" stroke="#444" stroke-width="1.3"/></svg>
<svg style="left:36px;top:302px;" width="16" height="16" viewBox="0 0 16 16"><path d="M1 1 H5 V11 H15 V15 H1 Z" fill="#d8f0d0" stroke="#2a7a2a" stroke-width="1.2"/></svg>
<div class="t" style="left:54.6px;top:303.0px;font-size:12px;line-height:14px;color:#222;transform:scaleX(0.989);transform-origin:0 0;">Κατακόρυφα Στοιχεία</div>
<svg style="left:5px;top:323px;" width="7" height="9" viewBox="0 0 7 9"><path d="M0.5 0.5 L6 4.5 L0.5 8.5 Z" fill="none" stroke="#999" stroke-width="1"/></svg>
<div class="a" style="left:19px;top:322px;width:11px;height:11px;border:1px solid #999;background:#fff"></div>
<svg style="left:20px;top:323px;" width="9" height="9" viewBox="0 0 9 9"><path d="M1.5 4.5 L3.5 6.8 L7.8 1.8" fill="none" stroke="#444" stroke-width="1.3"/></svg>
<svg style="left:36px;top:319px;" width="16" height="16" viewBox="0 0 16 16"><rect x="1" y="4" width="4" height="8" fill="#c8e8b8" stroke="#2a7a2a"/><rect x="5" y="7" width="7" height="3" fill="#8ad0f0"/><rect x="11" y="5" width="4" height="7" fill="#c8e8b8" stroke="#2a7a2a"/></svg>
<div class="t" style="left:54.6px;top:320.0px;font-size:12px;line-height:14px;color:#222;">Οριζόντια Στοιχεία</div>
<svg style="left:5px;top:340px;" width="7" height="9" viewBox="0 0 7 9"><path d="M0.5 0.5 L6 4.5 L0.5 8.5 Z" fill="none" stroke="#999" stroke-width="1"/></svg>
<div class="a" style="left:19px;top:339px;width:11px;height:11px;border:1px solid #999;background:#fff"></div>
<svg style="left:20px;top:340px;" width="9" height="9" viewBox="0 0 9 9"><path d="M1.5 4.5 L3.5 6.8 L7.8 1.8" fill="none" stroke="#444" stroke-width="1.3"/></svg>
<svg style="left:36px;top:336px;" width="16" height="16" viewBox="0 0 16 16"><path d="M2 14 L14 2" stroke="#2a6ad0" stroke-width="1.3"/><circle cx="2" cy="14" r="1.2" fill="#e02020"/><circle cx="14" cy="2" r="1.2" fill="#e02020"/></svg>
<div class="t" style="left:54.6px;top:337.0px;font-size:12px;line-height:14px;color:#222;">Πλασματικά</div>
<svg style="left:5px;top:357px;" width="7" height="9" viewBox="0 0 7 9"><path d="M0.5 0.5 L6 4.5 L0.5 8.5 Z" fill="none" stroke="#999" stroke-width="1"/></svg>
<div class="a" style="left:19px;top:356px;width:11px;height:11px;border:1px solid #999;background:#fff"></div>
<svg style="left:20px;top:357px;" width="9" height="9" viewBox="0 0 9 9"><path d="M1.5 4.5 L3.5 6.8 L7.8 1.8" fill="none" stroke="#444" stroke-width="1.3"/></svg>
<svg style="left:36px;top:353px;" width="16" height="16" viewBox="0 0 16 16"><rect x="1" y="1" width="14" height="14" fill="#e03020"/><circle cx="8" cy="8" r="6" fill="#40d0ff"/><circle cx="8" cy="8" r="3.5" fill="#1020c0"/></svg>
<div class="t" style="left:54.6px;top:354.0px;font-size:12px;line-height:14px;color:#222;transform:scaleX(0.972);transform-origin:0 0;">Πεπερασμένα Στοιχεί...</div>
<svg style="left:5px;top:374px;" width="7" height="9" viewBox="0 0 7 9"><path d="M0.5 0.5 L6 4.5 L0.5 8.5 Z" fill="none" stroke="#999" stroke-width="1"/></svg>
<div class="a" style="left:19px;top:373px;width:11px;height:11px;border:1px solid #999;background:#fff"></div>
<svg style="left:20px;top:374px;" width="9" height="9" viewBox="0 0 9 9"><path d="M1.5 4.5 L3.5 6.8 L7.8 1.8" fill="none" stroke="#444" stroke-width="1.3"/></svg>
<svg style="left:36px;top:370px;" width="16" height="16" viewBox="0 0 16 16"><rect x="0" y="1" width="16" height="5" fill="#f09020"/><rect x="3" y="1.5" width="10" height="4" fill="#bbb"/><rect x="0" y="10" width="16" height="5" fill="#f09020"/></svg>
<div class="t" style="left:54.6px;top:371.0px;font-size:12px;line-height:14px;color:#222;">Συνδέσεις</div>
<svg style="left:5px;top:391px;" width="7" height="9" viewBox="0 0 7 9"><path d="M0.5 0.5 L6 4.5 L0.5 8.5 Z" fill="none" stroke="#999" stroke-width="1"/></svg>
<div class="a" style="left:19px;top:390px;width:11px;height:11px;border:1px solid #ccc;background:#fff"></div>
<svg style="left:20px;top:391px;" width="9" height="9" viewBox="0 0 9 9"><path d="M1.5 4.5 L3.5 6.8 L7.8 1.8" fill="none" stroke="#bbb" stroke-width="1.3"/></svg>
<svg style="left:36px;top:387px;" width="16" height="16" viewBox="0 0 16 16"><path d="M8 2 V14 M2 8 H14" stroke="#f0d020" stroke-width="2.5"/></svg>
<div class="t" style="left:54.6px;top:388.0px;font-size:12px;line-height:14px;color:#999;">Κόμβοι</div>
<svg style="left:5px;top:408px;" width="7" height="9" viewBox="0 0 7 9"><path d="M0.5 0.5 L6 4.5 L0.5 8.5 Z" fill="none" stroke="#999" stroke-width="1"/></svg>
<div class="a" style="left:19px;top:407px;width:11px;height:11px;border:1px solid #999;background:#fff"></div>
<svg style="left:20px;top:408px;" width="9" height="9" viewBox="0 0 9 9"><path d="M1.5 4.5 L3.5 6.8 L7.8 1.8" fill="none" stroke="#444" stroke-width="1.3"/></svg>
<svg style="left:36px;top:404px;" width="16" height="16" viewBox="0 0 16 16"><rect x="1" y="1" width="14" height="14" fill="#fff" stroke="#7a1a1a" stroke-width="1.2"/><rect x="5" y="5" width="6" height="6" fill="none" stroke="#7a1a1a"/><path d="M1 1 L5 5 M15 1 L11 5 M1 15 L5 11 M15 15 L11 11" stroke="#7a1a1a"/></svg>
<div class="t" style="left:54.6px;top:405.0px;font-size:12px;line-height:14px;color:#222;">Πέδιλα</div>
<svg style="left:5px;top:425px;" width="7" height="9" viewBox="0 0 7 9"><path d="M0.5 0.5 L6 4.5 L0.5 8.5 Z" fill="none" stroke="#999" stroke-width="1"/></svg>
<div class="a" style="left:19px;top:424px;width:11px;height:11px;border:1px solid #ccc;background:#fff"></div>
<svg style="left:20px;top:425px;" width="9" height="9" viewBox="0 0 9 9"><path d="M1.5 4.5 L3.5 6.8 L7.8 1.8" fill="none" stroke="#bbb" stroke-width="1.3"/></svg>
<svg style="left:36px;top:421px;" width="16" height="16" viewBox="0 0 16 16"><rect x="1" y="1" width="14" height="14" fill="#fff" stroke="#7a1a1a" stroke-width="1.2"/><path d="M8 3 L13 8 L8 13 L3 8 Z" fill="none" stroke="#7a1a1a"/><circle cx="8" cy="8" r="1.2" fill="#c02020"/></svg>
<div class="t" style="left:54.6px;top:422.0px;font-size:12px;line-height:14px;color:#999;">Πλάκες</div>
<svg style="left:5px;top:442px;" width="7" height="9" viewBox="0 0 7 9"><path d="M0.5 0.5 L6 4.5 L0.5 8.5 Z" fill="none" stroke="#999" stroke-width="1"/></svg>
<div class="a" style="left:19px;top:441px;width:11px;height:11px;border:1px solid #999;background:#fff"></div>
<svg style="left:20px;top:442px;" width="9" height="9" viewBox="0 0 9 9"><path d="M1.5 4.5 L3.5 6.8 L7.8 1.8" fill="none" stroke="#444" stroke-width="1.3"/></svg>
<svg style="left:36px;top:438px;" width="16" height="16" viewBox="0 0 16 16"><rect x="1" y="1" width="14" height="14" fill="#fff" stroke="#f040f0" stroke-width="1.2"/><path d="M4.5 1 V15 M8 1 V15 M11.5 1 V15 M1 4.5 H15 M1 8 H15 M1 11.5 H15" stroke="#f040f0"/></svg>
<div class="t" style="left:54.6px;top:439.0px;font-size:12px;line-height:14px;color:#222;">Κοιτόστρωση</div>
<svg style="left:5px;top:459px;" width="7" height="9" viewBox="0 0 7 9"><path d="M0.5 0.5 L6 4.5 L0.5 8.5 Z" fill="none" stroke="#999" stroke-width="1"/></svg>
<div class="a" style="left:19px;top:458px;width:11px;height:11px;border:1px solid #999;background:#fff"></div>
<svg style="left:20px;top:459px;" width="9" height="9" viewBox="0 0 9 9"><path d="M1.5 4.5 L3.5 6.8 L7.8 1.8" fill="none" stroke="#444" stroke-width="1.3"/></svg>
<svg style="left:36px;top:455px;" width="16" height="16" viewBox="0 0 16 16"><path d="M1 15 L5 2 H14 L10 15 Z" fill="#ddd"/><path d="M10 15 L14 2 L15 13 Z" fill="#bbb"/></svg>
<div class="t" style="left:54.6px;top:456.0px;font-size:12px;line-height:14px;color:#222;">Κλίμακες</div>
<svg style="left:5px;top:476px;" width="7" height="9" viewBox="0 0 7 9"><path d="M0.5 0.5 L6 4.5 L0.5 8.5 Z" fill="none" stroke="#999" stroke-width="1"/></svg>
<div class="a" style="left:19px;top:475px;width:11px;height:11px;border:1px solid #999;background:#fff"></div>
<svg style="left:36px;top:472px;" width="16" height="16" viewBox="0 0 16 16"><path d="M1 3 H15 M3 3 V13 M8 3 V13 M13 3 V13 M1 13 H15" stroke="#8a1a1a" stroke-width="1.4" fill="none"/></svg>
<div class="t" style="left:54.6px;top:473.0px;font-size:12px;line-height:14px;color:#222;">Φορτία</div>
<svg style="left:5px;top:493px;" width="7" height="9" viewBox="0 0 7 9"><path d="M0.5 0.5 L6 4.5 L0.5 8.5 Z" fill="none" stroke="#999" stroke-width="1"/></svg>
<div class="a" style="left:19px;top:492px;width:11px;height:11px;border:1px solid #999;background:#fff"></div>
<svg style="left:20px;top:493px;" width="9" height="9" viewBox="0 0 9 9"><path d="M1.5 4.5 L3.5 6.8 L7.8 1.8" fill="none" stroke="#444" stroke-width="1.3"/></svg>
<svg style="left:36px;top:489px;" width="16" height="16" viewBox="0 0 16 16"><rect x="0" y="1" width="16" height="14" fill="#e84040"/><rect x="1" y="5" width="14" height="3" fill="#f0e060"/><rect x="1" y="10" width="14" height="3" fill="#40b040"/><rect x="5" y="12" width="6" height="2" fill="#4060e0"/></svg>
<div class="t" style="left:54.6px;top:490.0px;font-size:12px;line-height:14px;color:#222;transform:scaleX(0.988);transform-origin:0 0;">Επιφάνειες Φόρτισης</div>
<svg style="left:5px;top:510px;" width="7" height="9" viewBox="0 0 7 9"><path d="M0.5 0.5 L6 4.5 L0.5 8.5 Z" fill="none" stroke="#999" stroke-width="1"/></svg>
<div class="a" style="left:19px;top:509px;width:11px;height:11px;border:1px solid #999;background:#fff"></div>
<svg style="left:36px;top:506px;" width="16" height="16" viewBox="0 0 16 16"><path d="M2 15 V6 L8 2 L14 6 V15 M2 6 H14 M5 6 V15 M11 6 V15" stroke="#d04040" stroke-width="0.8" fill="none"/><path d="M8 2 V15" stroke="#4060c0" stroke-width="0.8"/></svg>
<div class="t" style="left:54.6px;top:507.0px;font-size:12px;line-height:14px;color:#222;">Υπερωθητική</div>
<svg style="left:5px;top:527px;" width="7" height="9" viewBox="0 0 7 9"><path d="M0.5 0.5 L6 4.5 L0.5 8.5 Z" fill="none" stroke="#999" stroke-width="1"/></svg>
<div class="a" style="left:19px;top:526px;width:11px;height:11px;border:1px solid #999;background:#fff"></div>
<svg style="left:36px;top:523px;" width="16" height="16" viewBox="0 0 16 16"><path d="M1 3 H15 M1 8 H15 M1 13 H15" stroke="#f0e000" stroke-width="1.2"/><path d="M2 1 V15 M6 1 V15 M10 1 V15 M14 1 V15" stroke="#e02020" stroke-width="1.4" stroke-dasharray="1.5 1"/></svg>
<div class="t" style="left:54.6px;top:524.0px;font-size:12px;line-height:14px;color:#222;transform:scaleX(0.975);transform-origin:0 0;">Εμφανιζόμενα Στοιχεία</div>
<div class="a" style="left:0px;top:537px;width:197px;height:29px;background:#f0f0f0;"></div>
<svg style="left:9px;top:542px;" width="16" height="16" viewBox="0 0 16 16"><path d="M1 1 L1 11 L4 8.5 L6 13 L7.5 12.3 L5.5 8 L9 8 Z" fill="#111"/><rect x="7" y="6" width="8" height="8" fill="#fff" stroke="#111"/><path d="M9 10 H13 M11 8 V12" stroke="#111"/></svg>
<svg style="left:31px;top:542px;" width="16" height="16" viewBox="0 0 16 16"><rect x="0.5" y="0.5" width="11" height="10" fill="#fff" stroke="#7a1a1a" stroke-width="1.2"/><rect x="3" y="3" width="6" height="5" fill="none" stroke="#111"/><path d="M9 7 L9 15 L11 13 L13 16 L14 15 L12 12.5 L15 12.5 Z" fill="#111"/></svg>
<svg style="left:54px;top:542px;" width="16" height="16" viewBox="0 0 16 16"><path d="M0.5 10 L4 1 H11 V10 Z" fill="#fff" stroke="#7a1a1a" stroke-width="1.2"/><rect x="4" y="4" width="5" height="4" fill="none" stroke="#111"/><path d="M9 7 L9 15 L11 13 L13 16 L14 15 L12 12.5 L15 12.5 Z" fill="#111"/></svg>
<svg style="left:76px;top:542px;" width="16" height="16" viewBox="0 0 16 16"><rect x="0.5" y="0.5" width="12" height="12" fill="#fff" stroke="#111" stroke-width="1.2"/><path d="M6.5 1 V12 M1 6.5 H12" stroke="#a01010"/><path d="M8 7 L8 15 L10 13 L12 16 L13 15 L11 12.5 L14 12.5 Z" fill="#111"/></svg>
<svg style="left:97px;top:542px;" width="16" height="16" viewBox="0 0 16 16"><path d="M1 4 L6 1 L11 4 V15 H1 Z" fill="#fff" stroke="#111"/><path d="M3 7 H9 M3 9.5 H9 M3 12 H9" stroke="#111"/><path d="M12 0 L16 0 L16 5 Z" fill="#1a2a8a"/></svg>
<svg style="left:130px;top:542px;" width="16" height="16" viewBox="0 0 16 16"><path d="M1 6 H14 M1 3 V9 M14 3 V9" stroke="#888" stroke-width="0.8"/><text x="8" y="12" text-anchor="middle" font-family="Liberation Serif" font-weight="bold" font-size="11" fill="#1a40e0">d</text></svg>
<svg style="left:151px;top:542px;" width="16" height="16" viewBox="0 0 16 16"><path d="M1 14 L14 2 M1 14 H15" stroke="#111" stroke-width="1"/><text x="5" y="7" font-family="Liberation Serif" font-weight="bold" font-size="8" fill="#1a40e0">Ψ</text></svg>
<svg style="left:174px;top:542px;" width="16" height="16" viewBox="0 0 16 16"><rect x="0.5" y="0.5" width="14" height="14" fill="#fff" stroke="#111" stroke-width="1.3"/><text x="7.5" y="12" text-anchor="middle" font-family="Liberation Serif" font-weight="bold" font-size="11" fill="#1a40e0">E</text></svg>
<div class="a" style="left:0px;top:566px;width:197px;height:23px;background:#e6e6e6;"></div>
<div class="a" style="left:0px;top:588px;width:197px;height:1px;background:#c8c8c8;"></div>
<div class="a" style="left:0;top:566px;width:77px;height:22px;background:#fafafa;border:1px solid #c8c8c8;border-left:none;border-top:none"></div>
<svg style="left:2px;top:571px;" width="14" height="13" viewBox="0 0 14 13"><rect x="0.5" y="0.5" width="13" height="12" fill="#e8eef6" stroke="#aab"/><path d="M5 3 H12 M5 6 H12 M5 9 H12" stroke="#889"/><path d="M2 3 L3 4 L4 2 M2 6 L3 7 L4 5" stroke="#2a6ad0" stroke-width="0.8" fill="none"/></svg>
<div class="t" style="left:19.3px;top:570.0px;font-size:12px;line-height:14px;color:#222;transform:scaleX(0.974);transform-origin:0 0;">Εμφάνιση</div>
<svg style="left:82px;top:570px;" width="15" height="14" viewBox="0 0 15 14"><rect x="0" y="0" width="15" height="14" fill="#ddd"/><path d="M1 7 C4 2, 11 2, 14 7 C11 12, 4 12, 1 7 Z" fill="#fff" stroke="#2a5aa0" stroke-width="1"/><circle cx="7.5" cy="7" r="3" fill="#1a3a8a"/></svg>
<div class="t" style="left:100.0px;top:570.0px;font-size:12px;line-height:14px;color:#222;transform:scaleX(1.043);transform-origin:0 0;">Όψεις</div>
<div class="t" style="left:2.0px;top:603.0px;font-size:21px;line-height:25px;color:#3b3b3b;transform:scaleX(0.984);transform-origin:0 0;">Πλοήγηση</div>
<svg style="left:144px;top:612px;" width="10" height="6" viewBox="0 0 10 6"><path d="M0 0 H10 L5 5 Z" fill="#777"/></svg>
<svg style="left:163px;top:609px;" width="8" height="12" viewBox="0 0 8 12"><path d="M1.5 1 H6.5 M2.5 1 V7 H5.5 V1 M0.5 7 H7.5 M4 7 V11.5" stroke="#666" stroke-width="1.2" fill="none"/></svg>
<svg style="left:181px;top:610px;" width="10" height="10" viewBox="0 0 10 10"><path d="M1 1 L9 9 M9 1 L1 9" stroke="#666" stroke-width="1.4"/></svg>
<div class="a" style="left:0px;top:635px;width:197px;height:24px;background:#f0f0f0;"></div>
<div class="t" style="left:10.0px;top:639.5px;font-size:12px;line-height:14px;color:#333;transform:scaleX(0.959);transform-origin:0 0;">Επιλεγμένα</div>
<div class="a" style="left:75px;top:637px;width:30px;height:19px;background:#c8c8c8;"></div>
<div class="t" style="left:79.0px;top:639.5px;font-size:12px;line-height:14px;color:#333;">Όλα</div>
<div class="a" style="left:110px;top:638px;width:1px;height:17px;background:#d0d0d0;"></div>
<div class="a" style="left:115px;top:637px;width:20px;height:19px;background:#c8c8c8;"></div>
<svg style="left:117px;top:638px;" width="16" height="16" viewBox="0 0 16 16"><rect x="0.5" y="1" width="14" height="11" fill="#e0e8f0" stroke="#8ab"/><rect x="0.5" y="1" width="14" height="3" fill="#6a9ad8"/><path d="M4 4 V12 M8 4 V12 M11.5 4 V12 M1 7 H14 M1 9.5 H14" stroke="#fff" stroke-width="0.8"/><text x="11" y="16" font-family="Liberation Sans" font-weight="bold" font-size="9" fill="#a01010">1</text></svg>
<svg style="left:139px;top:638px;" width="16" height="16" viewBox="0 0 16 16"><rect x="0.5" y="1" width="14" height="11" fill="#e0e8f0" stroke="#8ab"/><rect x="0.5" y="1" width="14" height="3" fill="#6a9ad8"/><path d="M4 4 V12 M8 4 V12 M11.5 4 V12 M1 7 H14 M1 9.5 H14" stroke="#fff" stroke-width="0.8"/><text x="11" y="16" font-family="Liberation Sans" font-weight="bold" font-size="9" fill="#a01010">2</text></svg>
<div class="a" style="left:0px;top:659px;width:197px;height:396px;background:#fcfcfc;"></div>
<div class="a" style="left:191px;top:859px;width:2px;height:142px;background:#a8a8a8;"></div>
<div class="a" style="left:24px;top:659px;width:1px;height:142px;background:#d4d4d4;"></div>
<div class="a" style="left:24px;top:826px;width:1px;height:26px;background:#d4d4d4;"></div>
<div class="a" style="left:24px;top:894px;width:1px;height:145px;background:#d4d4d4;"></div>
<div class="a" style="left:41px;top:659px;width:1px;height:40px;background:#d4d4d4;"></div>
<div class="a" style="left:41px;top:997px;width:1px;height:25px;background:#d4d4d4;"></div>
<div class="a" style="left:41px;top:665px;width:9px;height:1px;background:#d4d4d4;"></div>
<div class="a" style="left:41px;top:682px;width:9px;height:1px;background:#d4d4d4;"></div>
<div class="a" style="left:41px;top:699px;width:9px;height:1px;background:#d4d4d4;"></div>
<div class="a" style="left:24px;top:716px;width:9px;height:1px;background:#d4d4d4;"></div>
<div class="a" style="left:24px;top:733px;width:9px;height:1px;background:#d4d4d4;"></div>
<div class="a" style="left:24px;top:750px;width:9px;height:1px;background:#d4d4d4;"></div>
<div class="a" style="left:24px;top:767px;width:9px;height:1px;background:#d4d4d4;"></div>
<div class="a" style="left:24px;top:784px;width:9px;height:1px;background:#d4d4d4;"></div>
<div class="a" style="left:24px;top:801px;width:9px;height:1px;background:#d4d4d4;"></div>
<div class="a" style="left:24px;top:835px;width:9px;height:1px;background:#d4d4d4;"></div>
<div class="a" style="left:24px;top:852px;width:9px;height:1px;background:#d4d4d4;"></div>
<div class="a" style="left:24px;top:903px;width:9px;height:1px;background:#d4d4d4;"></div>
<div class="a" style="left:24px;top:920px;width:9px;height:1px;background:#d4d4d4;"></div>
<div class="a" style="left:24px;top:937px;width:9px;height:1px;background:#d4d4d4;"></div>
<div class="a" style="left:24px;top:954px;width:9px;height:1px;background:#d4d4d4;"></div>
<div class="a" style="left:24px;top:971px;width:9px;height:1px;background:#d4d4d4;"></div>
<div class="a" style="left:24px;top:988px;width:9px;height:1px;background:#d4d4d4;"></div>
<div class="a" style="left:41px;top:1005px;width:9px;height:1px;background:#d4d4d4;"></div>
<div class="a" style="left:41px;top:1022px;width:9px;height:1px;background:#d4d4d4;"></div>
<div class="a" style="left:24px;top:1039px;width:9px;height:1px;background:#d4d4d4;"></div>
<svg style="left:53px;top:657px;" width="16" height="16" viewBox="0 0 16 16"><text x="0" y="12" font-family="Liberation Sans" font-weight="bold" font-size="8" fill="#111">VSC</text></svg>
<div class="t" style="left:72.0px;top:658.0px;font-size:12px;line-height:14px;color:#222;transform:scaleX(0.943);transform-origin:0 0;">Κατακόρυφη Σεισ...</div>
<svg style="left:53px;top:674px;" width="16" height="16" viewBox="0 0 16 16"><path d="M2 1 H10 L14 5 V15 H2 Z" fill="#fff" stroke="#333"/><path d="M10 1 V5 H14" fill="none" stroke="#333"/></svg>
<div class="t" style="left:72.0px;top:675.0px;font-size:12px;line-height:14px;color:#222;transform:scaleX(0.949);transform-origin:0 0;">Μητρώο Συντελεσ...</div>
<svg style="left:53px;top:691px;" width="16" height="16" viewBox="0 0 16 16"><text x="5" y="13" font-family="Liberation Sans" font-weight="bold" font-size="12" fill="#111">*</text></svg>
<div class="t" style="left:72.0px;top:692.0px;font-size:12px;line-height:14px;color:#222;transform:scaleX(0.935);transform-origin:0 0;">Όλοι οι Έλεγχοι Μ...</div>
<div class="a" style="left:21px;top:711px;width:9px;height:11px;background:#fcfcfc;"></div>
<svg style="left:22px;top:712px;" width="7" height="9" viewBox="0 0 7 9"><path d="M0.5 0.5 L6 4.5 L0.5 8.5 Z" fill="#fcfcfc" stroke="#aaa" stroke-width="1"/></svg>
<svg style="left:36px;top:708px;" width="16" height="16" viewBox="0 0 16 16"><path d="M0.5 3 H6 L7.5 1.5 H15.5 V15 H0.5 Z" fill="#e8b464"/><rect x="0.5" y="4" width="15" height="11" fill="#f0c070"/></svg>
<div class="t" style="left:55.0px;top:709.0px;font-size:12px;line-height:14px;color:#222;transform:scaleX(0.931);transform-origin:0 0;">Κριτήρια Μορφολογίας</div>
<div class="a" style="left:21px;top:728px;width:9px;height:11px;background:#fcfcfc;"></div>
<svg style="left:22px;top:729px;" width="7" height="9" viewBox="0 0 7 9"><path d="M0.5 0.5 L6 4.5 L0.5 8.5 Z" fill="#fcfcfc" stroke="#aaa" stroke-width="1"/></svg>
<svg style="left:36px;top:725px;" width="16" height="16" viewBox="0 0 16 16"><path d="M0.5 3 H6 L7.5 1.5 H15.5 V15 H0.5 Z" fill="#e8b464"/><rect x="0.5" y="4" width="15" height="11" fill="#f0c070"/></svg>
<div class="t" style="left:55.0px;top:726.0px;font-size:12px;line-height:14px;color:#222;">Κτήριο</div>
<div class="a" style="left:21px;top:745px;width:9px;height:11px;background:#fcfcfc;"></div>
<svg style="left:22px;top:746px;" width="7" height="9" viewBox="0 0 7 9"><path d="M0.5 0.5 L6 4.5 L0.5 8.5 Z" fill="#fcfcfc" stroke="#aaa" stroke-width="1"/></svg>
<svg style="left:36px;top:742px;" width="16" height="16" viewBox="0 0 16 16"><path d="M0.5 3 H6 L7.5 1.5 H15.5 V15 H0.5 Z" fill="#e8b464"/><rect x="0.5" y="4" width="15" height="11" fill="#f0c070"/></svg>
<div class="t" style="left:55.0px;top:743.0px;font-size:12px;line-height:14px;color:#222;transform:scaleX(0.979);transform-origin:0 0;">Γραμμικά Στοιχεία</div>
<div class="a" style="left:21px;top:762px;width:9px;height:11px;background:#fcfcfc;"></div>
<svg style="left:22px;top:763px;" width="7" height="9" viewBox="0 0 7 9"><path d="M0.5 0.5 L6 4.5 L0.5 8.5 Z" fill="#fcfcfc" stroke="#aaa" stroke-width="1"/></svg>
<svg style="left:36px;top:759px;" width="16" height="16" viewBox="0 0 16 16"><path d="M0.5 3 H6 L7.5 1.5 H15.5 V15 H0.5 Z" fill="#e8b464"/><rect x="0.5" y="4" width="15" height="11" fill="#f0c070"/></svg>
<div class="t" style="left:55.0px;top:760.0px;font-size:12px;line-height:14px;color:#222;">Κόμβοι</div>
<div class="a" style="left:21px;top:779px;width:9px;height:11px;background:#fcfcfc;"></div>
<svg style="left:22px;top:780px;" width="7" height="9" viewBox="0 0 7 9"><path d="M0.5 0.5 L6 4.5 L0.5 8.5 Z" fill="#fcfcfc" stroke="#aaa" stroke-width="1"/></svg>
<svg style="left:36px;top:776px;" width="16" height="16" viewBox="0 0 16 16"><path d="M0.5 3 H6 L7.5 1.5 H15.5 V15 H0.5 Z" fill="#e8b464"/><rect x="0.5" y="4" width="15" height="11" fill="#f0c070"/></svg>
<div class="t" style="left:55.0px;top:777.0px;font-size:12px;line-height:14px;color:#222;transform:scaleX(0.972);transform-origin:0 0;">Πεπερασμένα Στοιχεί...</div>
<div class="a" style="left:21px;top:796px;width:9px;height:11px;background:#fcfcfc;"></div>
<svg style="left:22px;top:797px;" width="7" height="9" viewBox="0 0 7 9"><path d="M0.5 0.5 L6 4.5 L0.5 8.5 Z" fill="#fcfcfc" stroke="#aaa" stroke-width="1"/></svg>
<svg style="left:36px;top:793px;" width="16" height="16" viewBox="0 0 16 16"><path d="M0.5 3 H6 L7.5 1.5 H15.5 V15 H0.5 Z" fill="#e8b464"/><rect x="0.5" y="4" width="15" height="11" fill="#f0c070"/></svg>
<div class="t" style="left:55.0px;top:794.0px;font-size:12px;line-height:14px;color:#222;transform:scaleX(0.873);transform-origin:0 0;">2D FEM Plates (internal...</div>
<div class="a" style="left:4px;top:813px;width:9px;height:11px;background:#fcfcfc;"></div>
<svg style="left:5px;top:815px;" width="8" height="8" viewBox="0 0 8 8"><path d="M7 0.5 L7 7 L0.5 7 Z" fill="#999"/></svg>
<svg style="left:19px;top:810px;" width="16" height="16" viewBox="0 0 16 16"><path d="M0.5 3 H6 L7.5 1.5 H15.5 V15 H0.5 Z" fill="#e8b464"/><rect x="0.5" y="4" width="15" height="11" fill="#f0c070"/></svg>
<div class="t" style="left:38.0px;top:811.0px;font-size:12px;line-height:14px;color:#222;transform:scaleX(0.925);transform-origin:0 0;">Αποτίμηση - Ενισχύσεις</div>
<div class="a" style="left:21px;top:830px;width:9px;height:11px;background:#fcfcfc;"></div>
<svg style="left:22px;top:831px;" width="7" height="9" viewBox="0 0 7 9"><path d="M0.5 0.5 L6 4.5 L0.5 8.5 Z" fill="#fcfcfc" stroke="#aaa" stroke-width="1"/></svg>
<svg style="left:36px;top:827px;" width="16" height="16" viewBox="0 0 16 16"><path d="M0.5 3 H6 L7.5 1.5 H15.5 V15 H0.5 Z" fill="#e8b464"/><rect x="0.5" y="4" width="15" height="11" fill="#f0c070"/></svg>
<div class="t" style="left:55.0px;top:828.0px;font-size:12px;line-height:14px;color:#222;transform:scaleX(0.959);transform-origin:0 0;">Παράμετροι</div>
<div class="a" style="left:21px;top:847px;width:9px;height:11px;background:#fcfcfc;"></div>
<svg style="left:22px;top:848px;" width="7" height="9" viewBox="0 0 7 9"><path d="M0.5 0.5 L6 4.5 L0.5 8.5 Z" fill="#fcfcfc" stroke="#aaa" stroke-width="1"/></svg>
<svg style="left:36px;top:844px;" width="16" height="16" viewBox="0 0 16 16"><path d="M0.5 3 H6 L7.5 1.5 H15.5 V15 H0.5 Z" fill="#e8b464"/><rect x="0.5" y="4" width="15" height="11" fill="#f0c070"/></svg>
<div class="t" style="left:55.0px;top:845.0px;font-size:12px;line-height:14px;color:#222;transform:scaleX(0.950);transform-origin:0 0;">Αποτελέσματα</div>
<div class="a" style="left:4px;top:864px;width:9px;height:11px;background:#fcfcfc;"></div>
<svg style="left:5px;top:865px;" width="7" height="9" viewBox="0 0 7 9"><path d="M0.5 0.5 L6 4.5 L0.5 8.5 Z" fill="#fcfcfc" stroke="#aaa" stroke-width="1"/></svg>
<svg style="left:19px;top:861px;" width="16" height="16" viewBox="0 0 16 16"><path d="M0.5 3 H6 L7.5 1.5 H15.5 V15 H0.5 Z" fill="#e8b464"/><rect x="0.5" y="4" width="15" height="11" fill="#f0c070"/></svg>
<div class="t" style="left:38.0px;top:862.0px;font-size:12px;line-height:14px;color:#222;transform:scaleX(0.912);transform-origin:0 0;">Υπερωθητική</div>
<div class="a" style="left:4px;top:881px;width:9px;height:11px;background:#fcfcfc;"></div>
<svg style="left:5px;top:883px;" width="8" height="8" viewBox="0 0 8 8"><path d="M7 0.5 L7 7 L0.5 7 Z" fill="#999"/></svg>
<svg style="left:19px;top:878px;" width="16" height="16" viewBox="0 0 16 16"><path d="M0.5 3 H6 L7.5 1.5 H15.5 V15 H0.5 Z" fill="#e8b464"/><rect x="0.5" y="4" width="15" height="11" fill="#f0c070"/></svg>
<div class="t" style="left:38.0px;top:879.0px;font-size:12px;line-height:14px;color:#222;transform:scaleX(0.912);transform-origin:0 0;">Έλεγχοι Επάρκειας</div>
<svg style="left:36px;top:895px;" width="16" height="16" viewBox="0 0 16 16"><path d="M2 1 H11 L14 4 V15 H2 Z" fill="#fff" stroke="#111"/><path d="M4 5 H12 M4 7.5 H12 M4 10 H12 M4 12.5 H12" stroke="#111" stroke-width="0.9"/></svg>
<div class="t" style="left:55.0px;top:896.0px;font-size:12px;line-height:14px;color:#222;transform:scaleX(0.968);transform-origin:0 0;">Κείμενα Αποτελεσμάτ...</div>
<div class="a" style="left:21px;top:915px;width:9px;height:11px;background:#fcfcfc;"></div>
<svg style="left:22px;top:916px;" width="7" height="9" viewBox="0 0 7 9"><path d="M0.5 0.5 L6 4.5 L0.5 8.5 Z" fill="#fcfcfc" stroke="#aaa" stroke-width="1"/></svg>
<svg style="left:36px;top:912px;" width="16" height="16" viewBox="0 0 16 16"><rect x="1" y="3" width="14" height="12" fill="#f0c050" stroke="#a07020"/><rect x="5" y="6" width="6" height="7" fill="#e08020"/><text x="8" y="12" text-anchor="middle" font-size="6" font-weight="bold" font-family="Liberation Sans" fill="#800">B</text></svg>
<div class="t" style="left:55.0px;top:913.0px;font-size:12px;line-height:14px;color:#222;transform:scaleX(1.129);transform-origin:0 0;">Σκυρόδεμα</div>
<div class="a" style="left:21px;top:932px;width:9px;height:11px;background:#fcfcfc;"></div>
<svg style="left:22px;top:933px;" width="7" height="9" viewBox="0 0 7 9"><path d="M0.5 0.5 L6 4.5 L0.5 8.5 Z" fill="#fcfcfc" stroke="#aaa" stroke-width="1"/></svg>
<svg style="left:36px;top:929px;" width="16" height="16" viewBox="0 0 16 16"><rect x="1" y="3" width="14" height="12" fill="#f0c050" stroke="#a07020"/><path d="M4 12 L12 5" stroke="#3060e0" stroke-width="3"/></svg>
<div class="t" style="left:55.0px;top:930.0px;font-size:12px;line-height:14px;color:#222;">Μεταλλικά</div>
<div class="a" style="left:21px;top:949px;width:9px;height:11px;background:#fcfcfc;"></div>
<svg style="left:22px;top:950px;" width="7" height="9" viewBox="0 0 7 9"><path d="M0.5 0.5 L6 4.5 L0.5 8.5 Z" fill="#fcfcfc" stroke="#aaa" stroke-width="1"/></svg>
<svg style="left:36px;top:946px;" width="16" height="16" viewBox="0 0 16 16"><rect x="1" y="3" width="14" height="12" fill="#f0c050" stroke="#a07020"/><path d="M4 12 L12 5" stroke="#3060e0" stroke-width="3"/></svg>
<div class="t" style="left:55.0px;top:947.0px;font-size:12px;line-height:14px;color:#222;">Σύμμεικτα</div>
<div class="a" style="left:21px;top:966px;width:9px;height:11px;background:#fcfcfc;"></div>
<svg style="left:22px;top:967px;" width="7" height="9" viewBox="0 0 7 9"><path d="M0.5 0.5 L6 4.5 L0.5 8.5 Z" fill="#fcfcfc" stroke="#aaa" stroke-width="1"/></svg>
<svg style="left:36px;top:963px;" width="16" height="16" viewBox="0 0 16 16"><path d="M0 5 L12 0 L16 4 L4 16 L0 12 Z" fill="#e8b070"/><path d="M2 8 L13 3 M3 11 L14 6" stroke="#b07030"/></svg>
<div class="t" style="left:55.0px;top:964.0px;font-size:12px;line-height:14px;color:#222;">Ξύλινα</div>
<div class="a" style="left:21px;top:983px;width:9px;height:11px;background:#fcfcfc;"></div>
<svg style="left:22px;top:985px;" width="8" height="8" viewBox="0 0 8 8"><path d="M7 0.5 L7 7 L0.5 7 Z" fill="#999"/></svg>
<svg style="left:36px;top:980px;" width="16" height="16" viewBox="0 0 16 16"><rect x="1" y="2" width="14" height="13" fill="#b04030"/><path d="M1 5 H15 M1 8.5 H15 M1 12 H15 M5 2 V5 M10 5 V8.5 M5 8.5 V12 M10 12 V15" stroke="#6a2010" stroke-width="0.8"/></svg>
<div class="t" style="left:55.0px;top:981.0px;font-size:12px;line-height:14px;color:#222;transform:scaleX(0.950);transform-origin:0 0;">Φέρουσα Τοιχοποιία</div>
<div class="a" style="left:38px;top:1000px;width:9px;height:11px;background:#fcfcfc;"></div>
<svg style="left:39px;top:1001px;" width="7" height="9" viewBox="0 0 7 9"><path d="M0.5 0.5 L6 4.5 L0.5 8.5 Z" fill="#fcfcfc" stroke="#aaa" stroke-width="1"/></svg>
<svg style="left:53px;top:997px;" width="16" height="16" viewBox="0 0 16 16"><rect x="1" y="2" width="14" height="13" fill="#b04030"/><path d="M1 5 H15 M1 8.5 H15 M1 12 H15 M5 2 V5 M10 5 V8.5 M5 8.5 V12 M10 12 V15" stroke="#6a2010" stroke-width="0.8"/></svg>
<div class="t" style="left:72.0px;top:998.0px;font-size:12px;line-height:14px;color:#222;">Πεσσοί</div>
<div class="a" style="left:38px;top:1017px;width:9px;height:11px;background:#fcfcfc;"></div>
<svg style="left:39px;top:1018px;" width="7" height="9" viewBox="0 0 7 9"><path d="M0.5 0.5 L6 4.5 L0.5 8.5 Z" fill="#fcfcfc" stroke="#aaa" stroke-width="1"/></svg>
<div class="a" style="left:53px;top:1014px;width:125px;height:16px;background:#e6e6e6;"></div>
<svg style="left:53px;top:1014px;" width="16" height="16" viewBox="0 0 16 16"><rect x="1" y="1" width="14" height="14" fill="#d04a2a"/><rect x="5" y="5" width="6" height="10" fill="#fff"/></svg>
<div class="t" style="left:72.0px;top:1015.0px;font-size:12px;line-height:14px;color:#222;">Υπέρθυρα</div>
<div class="a" style="left:21px;top:1034px;width:9px;height:11px;background:#fcfcfc;"></div>
<svg style="left:22px;top:1035px;" width="7" height="9" viewBox="0 0 7 9"><path d="M0.5 0.5 L6 4.5 L0.5 8.5 Z" fill="#fcfcfc" stroke="#aaa" stroke-width="1"/></svg>
<svg style="left:36px;top:1031px;" width="16" height="16" viewBox="0 0 16 16"><rect x="1" y="1" width="14" height="14" fill="#3040c0"/><path d="M1 2 H15 M1 14 H15" stroke="#111" stroke-width="2"/><path d="M8 1 V15" stroke="#fff" stroke-width="1"/></svg>
<div class="t" style="left:55.0px;top:1032.0px;font-size:12px;line-height:14px;color:#222;">Συνδέσεις</div>
<div class="a" style="left:4px;top:1051px;width:9px;height:11px;background:#fcfcfc;"></div>
<svg style="left:5px;top:1052px;" width="7" height="9" viewBox="0 0 7 9"><path d="M0.5 0.5 L6 4.5 L0.5 8.5 Z" fill="#fcfcfc" stroke="#aaa" stroke-width="1"/></svg>
<svg style="left:19px;top:1048px;" width="16" height="16" viewBox="0 0 16 16"><path d="M0.5 3 H6 L7.5 1.5 H15.5 V15 H0.5 Z" fill="#e8b464"/><rect x="0.5" y="4" width="15" height="11" fill="#f0c070"/></svg>
<div class="t" style="left:38.0px;top:1049.0px;font-size:12px;line-height:14px;color:#222;">Ελεγχοι Αντοχής</div>
<div class="a" style="left:197px;top:134px;width:6px;height:922px;background:#e6e6e6;"></div>
<div class="a" style="left:203px;top:134px;width:862px;height:26px;background:#f0f0f0;"></div>
<div class="a" style="left:1049px;top:135px;width:16px;height:25px;background:#f7f7f7;"></div>
<svg style="left:1052px;top:139px" width="10" height="18"><path d="M1.5 6 L5 2.5 L8.5 6 M1.5 12 L5 15.5 L8.5 12" stroke="#aaa" stroke-width="1.2" fill="none"/></svg>
<div class="a" style="left:203px;top:160px;width:862px;height:7px;background:#e3e3e3;"></div>
<div class="a" style="left:203px;top:166px;width:862px;height:629px;background:#e6e6e6;"></div>
<div class="a" style="left:204px;top:166px;width:861px;height:627px;background:#fff;border-left:2px solid #6a6a6a;border-top:2px solid #6a6a6a;border-right:1px solid #e0e0e0"></div>
<svg style="left:0;top:0" width="1765" height="1078" viewBox="0 0 1765 1078" shape-rendering="crispEdges"><rect x="272" y="421" width="1.2" height="1.2" fill="#111"/><rect x="255" y="433" width="1.2" height="1.2" fill="#111"/><rect x="238" y="444" width="1.2" height="1.2" fill="#111"/><rect x="223" y="456" width="1.2" height="1.2" fill="#111"/><rect x="206" y="468" width="1.2" height="1.2" fill="#111"/><rect x="295" y="448" width="1.2" height="1.2" fill="#111"/><rect x="277" y="460" width="1.2" height="1.2" fill="#111"/><rect x="261" y="471" width="1.2" height="1.2" fill="#111"/><rect x="245" y="483" width="1.2" height="1.2" fill="#111"/><rect x="228" y="494" width="1.2" height="1.2" fill="#111"/><rect x="212" y="506" width="1.2" height="1.2" fill="#111"/><rect x="283" y="498" width="1.2" height="1.2" fill="#111"/><rect x="267" y="509" width="1.2" height="1.2" fill="#111"/><rect x="251" y="521" width="1.2" height="1.2" fill="#111"/><rect x="234" y="532" width="1.2" height="1.2" fill="#111"/><rect x="218" y="544" width="1.2" height="1.2" fill="#111"/><rect x="289" y="536" width="1.2" height="1.2" fill="#111"/><rect x="273" y="548" width="1.2" height="1.2" fill="#111"/><rect x="984" y="466" width="1.2" height="1.2" fill="#111"/><rect x="968" y="478" width="1.2" height="1.2" fill="#111"/><rect x="951" y="489" width="1.2" height="1.2" fill="#111"/><rect x="1039" y="470" width="1.2" height="1.2" fill="#111"/><rect x="1022" y="481" width="1.2" height="1.2" fill="#111"/><rect x="1006" y="493" width="1.2" height="1.2" fill="#111"/><rect x="990" y="504" width="1.2" height="1.2" fill="#111"/><rect x="973" y="516" width="1.2" height="1.2" fill="#111"/><rect x="957" y="528" width="1.2" height="1.2" fill="#111"/><rect x="1061" y="496" width="1.2" height="1.2" fill="#111"/><rect x="1045" y="508" width="1.2" height="1.2" fill="#111"/><rect x="1028" y="520" width="1.2" height="1.2" fill="#111"/><rect x="1012" y="531" width="1.2" height="1.2" fill="#111"/><rect x="996" y="543" width="1.2" height="1.2" fill="#111"/><rect x="979" y="554" width="1.2" height="1.2" fill="#111"/><rect x="1050" y="546" width="1.2" height="1.2" fill="#111"/><rect x="1034" y="558" width="1.2" height="1.2" fill="#111"/><rect x="1018" y="568" width="1.2" height="1.2" fill="#111"/><rect x="1001" y="581" width="1.2" height="1.2" fill="#111"/><rect x="985" y="592" width="1.2" height="1.2" fill="#111"/><polygon points="276.0,660.0 300.0,644.0 306.0,645.0 306.0,662.0 276.0,660.0" fill="#c0c0c0" stroke="#000" stroke-width="1" /><polygon points="276.0,660.0 306.0,662.0 306.0,691.0 276.0,689.0" fill="#c0c0c0" stroke="#000" stroke-width="1" /><line x1="284.0" y1="655.0" x2="306.0" y2="656.0" stroke="#000" stroke-width="1" /><polygon points="300.0,665.5 849.0,700.0 826.0,704.0 305.0,672.4" fill="#c0c0c0" stroke="#000" stroke-width="1" /><polygon points="305.0,672.4 826.0,702.1 826.0,731.1 305.0,700.9" fill="#c0c0c0" stroke="#000" stroke-width="1" /><line x1="339.0" y1="674.3" x2="339.0" y2="702.8" stroke="#000" stroke-width="1" /><line x1="339.0" y1="674.3" x2="347.0" y2="668.3" stroke="#000" stroke-width="1" /><line x1="387.5" y1="677.1" x2="387.5" y2="705.6" stroke="#000" stroke-width="1" /><line x1="387.5" y1="677.1" x2="395.5" y2="671.1" stroke="#000" stroke-width="1" /><line x1="442.0" y1="680.2" x2="442.0" y2="708.7" stroke="#000" stroke-width="1" /><line x1="442.0" y1="680.2" x2="450.0" y2="674.2" stroke="#000" stroke-width="1" /><line x1="490.0" y1="682.9" x2="490.0" y2="711.4" stroke="#000" stroke-width="1" /><line x1="490.0" y1="682.9" x2="498.0" y2="676.9" stroke="#000" stroke-width="1" /><line x1="538.0" y1="685.7" x2="538.0" y2="714.2" stroke="#000" stroke-width="1" /><line x1="538.0" y1="685.7" x2="546.0" y2="679.7" stroke="#000" stroke-width="1" /><line x1="593.0" y1="688.8" x2="593.0" y2="717.3" stroke="#000" stroke-width="1" /><line x1="593.0" y1="688.8" x2="601.0" y2="682.8" stroke="#000" stroke-width="1" /><line x1="641.0" y1="691.6" x2="641.0" y2="720.1" stroke="#000" stroke-width="1" /><line x1="641.0" y1="691.6" x2="649.0" y2="685.6" stroke="#000" stroke-width="1" /><line x1="690.0" y1="694.3" x2="690.0" y2="722.8" stroke="#000" stroke-width="1" /><line x1="690.0" y1="694.3" x2="698.0" y2="688.3" stroke="#000" stroke-width="1" /><line x1="740.0" y1="697.2" x2="740.0" y2="725.7" stroke="#000" stroke-width="1" /><line x1="740.0" y1="697.2" x2="748.0" y2="691.2" stroke="#000" stroke-width="1" /><line x1="790.0" y1="700.0" x2="790.0" y2="728.5" stroke="#000" stroke-width="1" /><line x1="790.0" y1="700.0" x2="798.0" y2="694.0" stroke="#000" stroke-width="1" /><polygon points="826.0,704.0 849.0,700.0 969.0,635.0 969.0,664.0 880.0,726.0 839.0,724.0 826.0,732.0" fill="#c0c0c0" stroke="#000" stroke-width="1" /><polygon points="849.0,700.0 946.0,633.0 969.0,635.0 880.0,698.0" fill="#c0c0c0" stroke="#000" stroke-width="1" /><line x1="880.0" y1="698.0" x2="880.0" y2="726.0" stroke="#000" stroke-width="1" /><line x1="900.0" y1="678.4" x2="900.0" y2="712.2" stroke="#000" stroke-width="1" /><line x1="922.0" y1="656.8" x2="922.0" y2="697.0" stroke="#000" stroke-width="1" /><line x1="944.0" y1="635.3" x2="944.0" y2="681.8" stroke="#000" stroke-width="1" /><line x1="880.0" y1="698.0" x2="880.0" y2="726.0" stroke="#000" stroke-width="1" /><line x1="880.0" y1="698.0" x2="969.0" y2="635.0" stroke="#000" stroke-width="1" /><line x1="826.0" y1="704.0" x2="826.0" y2="732.0" stroke="#000" stroke-width="1" /><polygon points="300.0,307.0 395.0,314.3 395.0,492.5 300.0,486.0" fill="#ffff00" stroke="#000" stroke-width="1" /><polygon points="300.0,486.0 395.0,492.5 395.0,671.2 300.0,665.5" fill="#00ff00" stroke="#000" stroke-width="1" /><polygon points="450.0,318.5 546.0,325.8 546.0,502.8 450.0,496.2" fill="#ffff00" stroke="#000" stroke-width="1" /><polygon points="450.0,496.2 546.0,502.8 546.0,680.3 450.0,674.5" fill="#00ff00" stroke="#000" stroke-width="1" /><polygon points="601.0,330.0 698.0,337.4 698.0,513.2 601.0,506.6" fill="#00ff00" stroke="#000" stroke-width="1" /><polygon points="601.0,506.6 698.0,513.2 698.0,689.4 601.0,683.6" fill="#ffff00" stroke="#000" stroke-width="1" /><polygon points="753.0,341.7 820.0,346.8 820.0,521.5 753.0,516.9" fill="#00ff00" stroke="#000" stroke-width="1" /><polygon points="753.0,516.9 820.0,521.5 820.0,696.8 753.0,692.7" fill="#00ffff" stroke="#000" stroke-width="1" /><polygon points="820.0,346.8 849.0,349.0 849.0,523.5 820.0,521.5" fill="#00ff00" stroke="#000" stroke-width="1" /><polygon points="820.0,521.5 849.0,523.5 849.0,698.5 820.0,696.8" fill="#ff00ff" stroke="#000" stroke-width="1" /><polygon points="395.0,314.3 450.0,318.5 450.0,362.2 395.0,358.1" fill="#00ff00" stroke="#000" stroke-width="1" /><polygon points="395.0,358.1 450.0,362.2 450.0,375.1 395.0,371.0" fill="#c8a000" stroke="#000" stroke-width="1" /><polygon points="395.0,371.0 450.0,375.1 450.0,436.7 395.0,432.8" fill="#ffff00" stroke="#000" stroke-width="1" /><polygon points="405.0,371.8 420.0,372.9 420.0,428.6 405.0,433.5" fill="#ff00ff" stroke="#000" stroke-width="1" /><polygon points="395.0,432.8 450.0,436.7 450.0,540.9 395.0,537.3" fill="#00ffff" stroke="#000" stroke-width="1" /><polygon points="395.0,537.3 450.0,540.9 450.0,552.9 395.0,549.2" fill="#c8a000" stroke="#000" stroke-width="1" /><polygon points="395.0,549.2 450.0,552.9 450.0,615.4 395.0,612.0" fill="#ffff00" stroke="#000" stroke-width="1" /><polygon points="401.0,549.6 410.0,550.2 410.0,604.0 401.0,612.3" fill="#ff0000" stroke="#000" stroke-width="1" /><polygon points="395.0,549.2 401.0,549.6 401.0,612.3 395.0,612.0" fill="#00ff00" stroke="#000" stroke-width="1" /><polygon points="395.0,609.0 450.0,612.4 450.0,617.4 395.0,614.0" fill="#00ffff" stroke="#000" stroke-width="1" /><polygon points="395.0,614.0 450.0,617.4 450.0,674.5 395.0,671.2" fill="#00ffff" stroke="#000" stroke-width="1" /><polygon points="546.0,325.8 601.0,330.0 601.0,373.4 546.0,369.3" fill="#ffff00" stroke="#000" stroke-width="1" /><polygon points="546.0,369.3 601.0,373.4 601.0,386.2 546.0,382.2" fill="#c8a000" stroke="#000" stroke-width="1" /><polygon points="546.0,382.2 601.0,386.2 601.0,437.5 546.0,433.6" fill="#ffff00" stroke="#000" stroke-width="1" /><polygon points="546.0,433.6 601.0,437.5 601.0,447.4 546.0,443.5" fill="#00ff00" stroke="#000" stroke-width="1" /><polygon points="546.0,443.5 601.0,447.4 601.0,550.0 546.0,546.3" fill="#ff00ff" stroke="#000" stroke-width="1" /><polygon points="546.0,546.3 601.0,550.0 601.0,562.8 546.0,559.2" fill="#c8a000" stroke="#000" stroke-width="1" /><polygon points="546.0,559.2 601.0,562.8 601.0,622.0 546.0,618.5" fill="#00ff00" stroke="#000" stroke-width="1" /><polygon points="546.0,559.2 553.0,559.6 553.0,618.9 546.0,618.5" fill="#00ff00" stroke="#000" stroke-width="1" /><polygon points="546.0,618.5 601.0,622.0 601.0,627.9 546.0,624.4" fill="#c0c0c0" stroke="#000" stroke-width="1" /><polygon points="546.0,624.4 601.0,627.9 601.0,683.6 546.0,680.3" fill="#ff00ff" stroke="#000" stroke-width="1" /><polygon points="698.0,337.4 753.0,341.7 753.0,382.8 698.0,378.7" fill="#00ff00" stroke="#000" stroke-width="1" /><polygon points="698.0,378.7 753.0,382.8 753.0,396.5 698.0,392.4" fill="#c8a000" stroke="#000" stroke-width="1" /><polygon points="698.0,392.4 753.0,396.5 753.0,446.4 698.0,442.5" fill="#ffff00" stroke="#000" stroke-width="1" /><polygon points="698.0,442.5 753.0,446.4 753.0,456.2 698.0,452.3" fill="#ffff00" stroke="#000" stroke-width="1" /><polygon points="698.0,452.3 753.0,456.2 753.0,560.0 698.0,556.4" fill="#ff00ff" stroke="#000" stroke-width="1" /><polygon points="698.0,556.4 753.0,560.0 753.0,572.8 698.0,569.2" fill="#c8a000" stroke="#000" stroke-width="1" /><polygon points="698.0,569.2 753.0,572.8 753.0,628.6 698.0,625.1" fill="#ffff00" stroke="#000" stroke-width="1" /><polygon points="698.0,569.2 705.0,569.6 705.0,689.3 698.0,688.9" fill="#ffff00" stroke="#000" stroke-width="1" /><polygon points="705.0,625.6 753.0,628.6 753.0,658.0 705.0,655.0" fill="#c0c0c0" stroke="#000" stroke-width="1" /><line x1="730.0" y1="627.1" x2="730.0" y2="656.5" stroke="#000" stroke-width="1" /><polygon points="705.0,655.0 753.0,658.0 753.0,677.5 705.0,674.6" fill="#ffffff" stroke="#000" stroke-width="1" /><polygon points="705.0,674.6 753.0,677.5 753.0,687.3 705.0,684.4" fill="#c0c0c0" stroke="#000" stroke-width="1" /><polygon points="849.0,349.0 857.0,342.7 857.0,513.2 849.0,519.0" fill="#00ff00" stroke="#000" stroke-width="1" /><polygon points="849.0,519.0 857.0,513.2 857.0,694.6 849.0,700.0" fill="#00ffff" stroke="#000" stroke-width="1" /><polygon points="857.0,342.7 868.0,334.0 868.0,501.3 857.0,509.2" fill="#00ff00" stroke="#000" stroke-width="1" /><polygon points="857.0,509.2 868.0,501.3 868.0,687.1 857.0,694.6" fill="#ff00ff" stroke="#000" stroke-width="1" /><polygon points="868.0,334.0 884.0,321.4 884.0,357.4 868.0,370.0" fill="#ffff00" stroke="#000" stroke-width="1" /><polygon points="868.0,370.0 884.0,357.4 884.0,374.4 868.0,387.0" fill="#c8a000" stroke="#000" stroke-width="1" /><polygon points="868.0,387.0 884.0,374.4 884.0,432.8 868.0,444.3" fill="#00ff00" stroke="#000" stroke-width="1" /><polygon points="868.0,444.3 884.0,432.8 884.0,535.8 868.0,547.3" fill="#ffff00" stroke="#000" stroke-width="1" /><polygon points="868.0,547.3 884.0,535.8 884.0,552.8 868.0,564.3" fill="#c8a000" stroke="#000" stroke-width="1" /><polygon points="868.0,564.3 884.0,552.8 884.0,612.8 868.0,624.3" fill="#00ffff" stroke="#000" stroke-width="1" /><polygon points="868.0,624.3 884.0,612.8 884.0,676.2 868.0,687.1" fill="#ffff00" stroke="#000" stroke-width="1" /><polygon points="884.0,321.4 909.0,301.6 909.0,475.8 884.0,493.8" fill="#00ff00" stroke="#000" stroke-width="1" /><polygon points="884.0,493.8 909.0,475.8 909.0,659.2 884.0,676.2" fill="#00ffff" stroke="#000" stroke-width="1" /><polygon points="909.0,301.6 925.0,289.0 925.0,327.0 909.0,339.6" fill="#ffff00" stroke="#000" stroke-width="1" /><polygon points="909.0,339.6 925.0,327.0 925.0,346.0 909.0,358.6" fill="#c8a000" stroke="#000" stroke-width="1" /><polygon points="909.0,358.6 925.0,346.0 925.0,403.0 909.0,415.6" fill="#ff00ff" stroke="#000" stroke-width="1" /><polygon points="909.0,415.6 925.0,403.0 925.0,506.3 909.0,517.8" fill="#00ff00" stroke="#000" stroke-width="1" /><polygon points="909.0,517.8 925.0,506.3 925.0,525.3 909.0,536.8" fill="#c8a000" stroke="#000" stroke-width="1" /><polygon points="909.0,536.8 925.0,525.3 925.0,583.3 909.0,594.8" fill="#ff00ff" stroke="#000" stroke-width="1" /><polygon points="909.0,594.8 925.0,583.3 925.0,648.3 909.0,659.2" fill="#00ff00" stroke="#000" stroke-width="1" /><polygon points="925.0,289.0 946.0,272.4 946.0,634.0 925.0,648.3" fill="#ff00ff" stroke="#000" stroke-width="1" /><path d="M842 450 L946 455 L946 610 L842 630 Z M842 610 L946 610" fill="none" stroke="#30e030" stroke-width="1" stroke-dasharray="4 3"/><path d="M879 407 V430 M869 419 H889" stroke="#555" stroke-width="1.2"/><polygon points="314.0,309.0 855.0,333.0 855.0,352.0 314.0,319.5" fill="#c0c0c0" stroke="#000" stroke-width="1" /><line x1="314.0" y1="312.0" x2="855.0" y2="340.0" stroke="#000" stroke-width="1" /><line x1="350.0" y1="313.9" x2="350.0" y2="321.7" stroke="#000" stroke-width="1" /><line x1="350.0" y1="313.9" x2="356.0" y2="310.9" stroke="#000" stroke-width="1" /><line x1="395.0" y1="316.2" x2="395.0" y2="324.4" stroke="#000" stroke-width="1" /><line x1="395.0" y1="316.2" x2="401.0" y2="312.9" stroke="#000" stroke-width="1" /><line x1="450.0" y1="319.0" x2="450.0" y2="327.7" stroke="#000" stroke-width="1" /><line x1="450.0" y1="319.0" x2="456.0" y2="315.3" stroke="#000" stroke-width="1" /><line x1="486.0" y1="320.9" x2="486.0" y2="329.8" stroke="#000" stroke-width="1" /><line x1="486.0" y1="320.9" x2="492.0" y2="316.9" stroke="#000" stroke-width="1" /><line x1="546.0" y1="324.0" x2="546.0" y2="333.4" stroke="#000" stroke-width="1" /><line x1="546.0" y1="324.0" x2="552.0" y2="319.6" stroke="#000" stroke-width="1" /><line x1="601.0" y1="326.9" x2="601.0" y2="336.7" stroke="#000" stroke-width="1" /><line x1="601.0" y1="326.9" x2="607.0" y2="322.0" stroke="#000" stroke-width="1" /><line x1="642.0" y1="329.0" x2="642.0" y2="339.2" stroke="#000" stroke-width="1" /><line x1="642.0" y1="329.0" x2="648.0" y2="323.8" stroke="#000" stroke-width="1" /><line x1="698.0" y1="331.9" x2="698.0" y2="342.6" stroke="#000" stroke-width="1" /><line x1="698.0" y1="331.9" x2="704.0" y2="326.3" stroke="#000" stroke-width="1" /><line x1="753.0" y1="334.7" x2="753.0" y2="345.9" stroke="#000" stroke-width="1" /><line x1="753.0" y1="334.7" x2="759.0" y2="328.8" stroke="#000" stroke-width="1" /><line x1="790.0" y1="336.7" x2="790.0" y2="348.1" stroke="#000" stroke-width="1" /><line x1="790.0" y1="336.7" x2="796.0" y2="330.4" stroke="#000" stroke-width="1" /><line x1="820.0" y1="338.2" x2="820.0" y2="349.9" stroke="#000" stroke-width="1" /><line x1="820.0" y1="338.2" x2="826.0" y2="331.7" stroke="#000" stroke-width="1" /><polygon points="395.0,312.6 450.0,315.0 450.0,319.0 395.0,316.2" fill="#00ff00" stroke="#000" stroke-width="1" /><polygon points="601.0,321.7 640.0,323.5 640.0,328.9 601.0,326.9" fill="#00ff00" stroke="#000" stroke-width="1" /><polygon points="698.0,326.0 753.0,328.5 753.0,334.7 698.0,331.9" fill="#00ff00" stroke="#000" stroke-width="1" /><polygon points="753.0,328.5 820.0,331.5 820.0,338.2 753.0,334.7" fill="#00ff00" stroke="#000" stroke-width="1" /><polygon points="832.0,338.0 862.0,318.0 900.0,294.0 925.0,277.0 946.0,279.0 946.0,290.0 856.0,352.0 855.0,352.0" fill="#c0c0c0" stroke="#000" stroke-width="1" /><line x1="856.0" y1="340.0" x2="946.0" y2="279.0" stroke="#000" stroke-width="1" /><line x1="856.0" y1="340.0" x2="856.0" y2="352.0" stroke="#000" stroke-width="1" /><line x1="868.0" y1="331.9" x2="868.0" y2="343.9" stroke="#000" stroke-width="1" /><line x1="868.0" y1="331.9" x2="850.0" y2="329.9" stroke="#000" stroke-width="1" /><line x1="897.0" y1="312.2" x2="897.0" y2="324.2" stroke="#000" stroke-width="1" /><line x1="897.0" y1="312.2" x2="879.0" y2="310.2" stroke="#000" stroke-width="1" /><line x1="925.0" y1="293.2" x2="925.0" y2="305.2" stroke="#000" stroke-width="1" /><line x1="925.0" y1="293.2" x2="907.0" y2="291.2" stroke="#000" stroke-width="1" /><line x1="941.0" y1="282.4" x2="941.0" y2="294.4" stroke="#000" stroke-width="1" /><line x1="941.0" y1="282.4" x2="923.0" y2="280.4" stroke="#000" stroke-width="1" /><polygon points="300.0,307.0 313.0,296.0 325.0,298.0 313.0,309.0" fill="#ffff00" stroke="#000" stroke-width="1" /><polygon points="318.0,300.0 405.0,240.0 900.0,272.0 935.0,278.0 855.0,333.0 314.0,309.0" fill="#ffff00" stroke="none" stroke-width="1" /><polygon points="400.0,238.0 905.0,271.0 905.0,284.0 400.0,251.0" fill="#c0c0c0" stroke="#000" stroke-width="1" /><line x1="450.0" y1="241.3" x2="450.0" y2="254.3" stroke="#000" stroke-width="1" /><line x1="506.0" y1="245.1" x2="506.0" y2="258.1" stroke="#000" stroke-width="1" /><line x1="550.0" y1="248.0" x2="550.0" y2="261.0" stroke="#000" stroke-width="1" /><line x1="600.0" y1="251.3" x2="600.0" y2="264.3" stroke="#000" stroke-width="1" /><line x1="650.0" y1="254.7" x2="650.0" y2="267.7" stroke="#000" stroke-width="1" /><line x1="700.0" y1="258.0" x2="700.0" y2="271.0" stroke="#000" stroke-width="1" /><line x1="761.0" y1="262.1" x2="761.0" y2="275.1" stroke="#000" stroke-width="1" /><line x1="810.0" y1="265.3" x2="810.0" y2="278.3" stroke="#000" stroke-width="1" /><line x1="860.0" y1="268.7" x2="860.0" y2="281.7" stroke="#000" stroke-width="1" /><polygon points="338.0,297.0 408.0,246.0 424.0,249.0 356.0,300.0" fill="#c0c0c0" stroke="#000" stroke-width="1" /><line x1="355.5" y1="284.2" x2="373.0" y2="287.2" stroke="#000" stroke-width="1" /><line x1="373.0" y1="271.5" x2="390.0" y2="274.5" stroke="#000" stroke-width="1" /><line x1="390.5" y1="258.8" x2="407.0" y2="261.8" stroke="#000" stroke-width="1" /><polygon points="318.0,296.0 330.0,288.0 350.0,290.0 340.0,299.0" fill="#00ffff" stroke="#000" stroke-width="1" /><polygon points="403.0,262.0 425.0,258.0 425.0,272.0 410.0,272.0" fill="#ff00ff" stroke="#000" stroke-width="1" /><polygon points="375.0,284.0 392.0,282.0 395.0,290.0 378.0,291.0" fill="#ff00ff" stroke="#000" stroke-width="1" /><polygon points="362.0,304.0 388.0,296.0 388.0,306.0" fill="#ff00ff" stroke="#000" stroke-width="1" /><polygon points="388.0,296.0 405.0,296.0 405.0,306.0 388.0,306.0" fill="#00ff00" stroke="#000" stroke-width="1" /><polygon points="486.0,261.0 536.0,264.0 536.0,278.0 486.0,275.0" fill="#00ff00" stroke="#000" stroke-width="1" /><polygon points="486.0,288.0 540.0,291.0 540.0,296.0 486.0,293.0" fill="#00ff00" stroke="#000" stroke-width="1" /><polygon points="486.0,295.0 560.0,299.0 560.0,307.0 486.0,304.0" fill="#c8a000" stroke="#000" stroke-width="1" /><polygon points="495.0,307.0 520.0,309.0 520.0,312.0 495.0,311.0" fill="#fff" stroke="#000" stroke-width="1" /><polygon points="600.0,296.0 640.0,299.0 640.0,306.0 600.0,303.0" fill="#00ff00" stroke="#000" stroke-width="1" /><polygon points="620.0,303.0 665.0,306.0 665.0,316.0 620.0,313.0" fill="#c8a000" stroke="#000" stroke-width="1" /><polygon points="630.0,316.0 665.0,318.0 665.0,322.0 630.0,320.0" fill="#fff" stroke="#000" stroke-width="1" /><polygon points="730.0,308.0 770.0,311.0 770.0,321.0 730.0,318.0" fill="#c8a000" stroke="#000" stroke-width="1" /><polygon points="740.0,321.0 790.0,324.0 790.0,329.0 740.0,326.0" fill="#fff" stroke="#000" stroke-width="1" /><polygon points="800.0,292.0 850.0,295.0 845.0,305.0 800.0,302.0" fill="#00ff00" stroke="#000" stroke-width="1" /><polygon points="380.0,268.0 462.0,275.0 789.0,294.0 850.0,300.0 850.0,312.0 789.0,307.0 462.0,288.0 380.0,281.0" fill="#ffff00" stroke="#000" stroke-width="1" /><polygon points="462.0,275.0 462.0,287.0 427.0,309.0 415.0,309.0" fill="#ffff00" stroke="#000" stroke-width="1" /><line x1="508.0" y1="244.0" x2="413.0" y2="309.0" stroke="#000" stroke-width="12" stroke-linecap="butt"/><line x1="508.0" y1="244.0" x2="413.0" y2="309.0" stroke="#ffff00" stroke-width="10" stroke-linecap="butt"/><line x1="506.9" y1="242.3" x2="411.9" y2="307.3" stroke="#000" stroke-width="0.9"/><line x1="461.0" y1="195.0" x2="508.0" y2="244.0" stroke="#000" stroke-width="12" stroke-linecap="butt"/><line x1="461.0" y1="195.0" x2="508.0" y2="244.0" stroke="#ffff00" stroke-width="10" stroke-linecap="butt"/><line x1="459.6" y1="196.4" x2="506.6" y2="245.4" stroke="#000" stroke-width="0.9"/><line x1="461.0" y1="195.0" x2="413.0" y2="309.0" stroke="#000" stroke-width="12" stroke-linecap="butt"/><line x1="461.0" y1="195.0" x2="413.0" y2="309.0" stroke="#ffff00" stroke-width="10" stroke-linecap="butt"/><line x1="459.2" y1="194.2" x2="411.2" y2="308.2" stroke="#000" stroke-width="0.9"/><line x1="437.0" y1="250.0" x2="462.0" y2="275.0" stroke="#000" stroke-width="10" stroke-linecap="butt"/><line x1="437.0" y1="250.0" x2="462.0" y2="275.0" stroke="#ffff00" stroke-width="8" stroke-linecap="butt"/><line x1="435.9" y1="251.1" x2="460.9" y2="276.1" stroke="#000" stroke-width="0.9"/><line x1="484.0" y1="228.0" x2="462.0" y2="275.0" stroke="#000" stroke-width="10" stroke-linecap="butt"/><line x1="484.0" y1="228.0" x2="462.0" y2="275.0" stroke="#ffff00" stroke-width="8" stroke-linecap="butt"/><line x1="482.6" y1="227.3" x2="460.6" y2="274.3" stroke="#000" stroke-width="0.9"/><line x1="461.0" y1="197.0" x2="462.0" y2="275.0" stroke="#000" stroke-width="10" stroke-linecap="butt"/><line x1="461.0" y1="197.0" x2="462.0" y2="275.0" stroke="#ffff00" stroke-width="8" stroke-linecap="butt"/><line x1="459.4" y1="197.0" x2="460.4" y2="275.0" stroke="#000" stroke-width="0.9"/><polygon points="571.0,281.5 571.0,293.5 536.0,315.5 524.0,315.5" fill="#ffff00" stroke="#000" stroke-width="1" /><line x1="617.0" y1="250.5" x2="522.0" y2="315.5" stroke="#000" stroke-width="12" stroke-linecap="butt"/><line x1="617.0" y1="250.5" x2="522.0" y2="315.5" stroke="#ffff00" stroke-width="10" stroke-linecap="butt"/><line x1="615.9" y1="248.8" x2="520.9" y2="313.8" stroke="#000" stroke-width="0.9"/><line x1="570.0" y1="201.5" x2="617.0" y2="250.5" stroke="#000" stroke-width="12" stroke-linecap="butt"/><line x1="570.0" y1="201.5" x2="617.0" y2="250.5" stroke="#ffff00" stroke-width="10" stroke-linecap="butt"/><line x1="568.6" y1="202.9" x2="615.6" y2="251.9" stroke="#000" stroke-width="0.9"/><line x1="570.0" y1="201.5" x2="522.0" y2="315.5" stroke="#000" stroke-width="12" stroke-linecap="butt"/><line x1="570.0" y1="201.5" x2="522.0" y2="315.5" stroke="#ffff00" stroke-width="10" stroke-linecap="butt"/><line x1="568.2" y1="200.7" x2="520.2" y2="314.7" stroke="#000" stroke-width="0.9"/><line x1="546.0" y1="256.5" x2="571.0" y2="281.5" stroke="#000" stroke-width="10" stroke-linecap="butt"/><line x1="546.0" y1="256.5" x2="571.0" y2="281.5" stroke="#ffff00" stroke-width="8" stroke-linecap="butt"/><line x1="544.9" y1="257.6" x2="569.9" y2="282.6" stroke="#000" stroke-width="0.9"/><line x1="593.0" y1="234.5" x2="571.0" y2="281.5" stroke="#000" stroke-width="10" stroke-linecap="butt"/><line x1="593.0" y1="234.5" x2="571.0" y2="281.5" stroke="#ffff00" stroke-width="8" stroke-linecap="butt"/><line x1="591.6" y1="233.8" x2="569.6" y2="280.8" stroke="#000" stroke-width="0.9"/><line x1="570.0" y1="203.5" x2="571.0" y2="281.5" stroke="#000" stroke-width="10" stroke-linecap="butt"/><line x1="570.0" y1="203.5" x2="571.0" y2="281.5" stroke="#ffff00" stroke-width="8" stroke-linecap="butt"/><line x1="568.4" y1="203.5" x2="569.4" y2="281.5" stroke="#000" stroke-width="0.9"/><polygon points="680.0,288.0 680.0,300.0 645.0,322.0 633.0,322.0" fill="#ffff00" stroke="#000" stroke-width="1" /><line x1="726.0" y1="257.0" x2="631.0" y2="322.0" stroke="#000" stroke-width="12" stroke-linecap="butt"/><line x1="726.0" y1="257.0" x2="631.0" y2="322.0" stroke="#ffff00" stroke-width="10" stroke-linecap="butt"/><line x1="724.9" y1="255.3" x2="629.9" y2="320.3" stroke="#000" stroke-width="0.9"/><line x1="679.0" y1="208.0" x2="726.0" y2="257.0" stroke="#000" stroke-width="12" stroke-linecap="butt"/><line x1="679.0" y1="208.0" x2="726.0" y2="257.0" stroke="#ffff00" stroke-width="10" stroke-linecap="butt"/><line x1="677.6" y1="209.4" x2="724.6" y2="258.4" stroke="#000" stroke-width="0.9"/><line x1="679.0" y1="208.0" x2="631.0" y2="322.0" stroke="#000" stroke-width="12" stroke-linecap="butt"/><line x1="679.0" y1="208.0" x2="631.0" y2="322.0" stroke="#ffff00" stroke-width="10" stroke-linecap="butt"/><line x1="677.2" y1="207.2" x2="629.2" y2="321.2" stroke="#000" stroke-width="0.9"/><line x1="655.0" y1="263.0" x2="680.0" y2="288.0" stroke="#000" stroke-width="10" stroke-linecap="butt"/><line x1="655.0" y1="263.0" x2="680.0" y2="288.0" stroke="#ffff00" stroke-width="8" stroke-linecap="butt"/><line x1="653.9" y1="264.1" x2="678.9" y2="289.1" stroke="#000" stroke-width="0.9"/><line x1="702.0" y1="241.0" x2="680.0" y2="288.0" stroke="#000" stroke-width="10" stroke-linecap="butt"/><line x1="702.0" y1="241.0" x2="680.0" y2="288.0" stroke="#ffff00" stroke-width="8" stroke-linecap="butt"/><line x1="700.6" y1="240.3" x2="678.6" y2="287.3" stroke="#000" stroke-width="0.9"/><line x1="679.0" y1="210.0" x2="680.0" y2="288.0" stroke="#000" stroke-width="10" stroke-linecap="butt"/><line x1="679.0" y1="210.0" x2="680.0" y2="288.0" stroke="#ffff00" stroke-width="8" stroke-linecap="butt"/><line x1="677.4" y1="210.0" x2="678.4" y2="288.0" stroke="#000" stroke-width="0.9"/><polygon points="789.0,294.0 789.0,306.0 754.0,328.0 742.0,328.0" fill="#ffff00" stroke="#000" stroke-width="1" /><line x1="835.0" y1="263.0" x2="740.0" y2="328.0" stroke="#000" stroke-width="12" stroke-linecap="butt"/><line x1="835.0" y1="263.0" x2="740.0" y2="328.0" stroke="#ffff00" stroke-width="10" stroke-linecap="butt"/><line x1="833.9" y1="261.3" x2="738.9" y2="326.3" stroke="#000" stroke-width="0.9"/><line x1="788.0" y1="214.0" x2="835.0" y2="263.0" stroke="#000" stroke-width="12" stroke-linecap="butt"/><line x1="788.0" y1="214.0" x2="835.0" y2="263.0" stroke="#ffff00" stroke-width="10" stroke-linecap="butt"/><line x1="786.6" y1="215.4" x2="833.6" y2="264.4" stroke="#000" stroke-width="0.9"/><line x1="788.0" y1="214.0" x2="740.0" y2="328.0" stroke="#000" stroke-width="12" stroke-linecap="butt"/><line x1="788.0" y1="214.0" x2="740.0" y2="328.0" stroke="#ffff00" stroke-width="10" stroke-linecap="butt"/><line x1="786.2" y1="213.2" x2="738.2" y2="327.2" stroke="#000" stroke-width="0.9"/><line x1="764.0" y1="269.0" x2="789.0" y2="294.0" stroke="#000" stroke-width="10" stroke-linecap="butt"/><line x1="764.0" y1="269.0" x2="789.0" y2="294.0" stroke="#ffff00" stroke-width="8" stroke-linecap="butt"/><line x1="762.9" y1="270.1" x2="787.9" y2="295.1" stroke="#000" stroke-width="0.9"/><line x1="811.0" y1="247.0" x2="789.0" y2="294.0" stroke="#000" stroke-width="10" stroke-linecap="butt"/><line x1="811.0" y1="247.0" x2="789.0" y2="294.0" stroke="#ffff00" stroke-width="8" stroke-linecap="butt"/><line x1="809.6" y1="246.3" x2="787.6" y2="293.3" stroke="#000" stroke-width="0.9"/><line x1="788.0" y1="216.0" x2="789.0" y2="294.0" stroke="#000" stroke-width="10" stroke-linecap="butt"/><line x1="788.0" y1="216.0" x2="789.0" y2="294.0" stroke="#ffff00" stroke-width="8" stroke-linecap="butt"/><line x1="786.4" y1="216.0" x2="787.4" y2="294.0" stroke="#000" stroke-width="0.9"/><line x1="788.0" y1="210.0" x2="834.0" y2="331.0" stroke="#000" stroke-width="13" stroke-linecap="butt"/><line x1="788.0" y1="210.0" x2="834.0" y2="331.0" stroke="#ffff00" stroke-width="11" stroke-linecap="butt"/><line x1="785.9" y1="210.8" x2="831.9" y2="331.8" stroke="#000" stroke-width="0.9"/><line x1="788.0" y1="295.0" x2="850.0" y2="330.0" stroke="#000" stroke-width="10" stroke-linecap="butt"/><line x1="788.0" y1="295.0" x2="850.0" y2="330.0" stroke="#ffff00" stroke-width="8" stroke-linecap="butt"/><line x1="787.2" y1="296.4" x2="849.2" y2="331.4" stroke="#000" stroke-width="0.9"/><polygon points="301.0,306.0 456.0,189.5 466.0,189.5 463.0,204.0 340.0,300.0 318.0,307.0" fill="#ffff00" stroke="#000" stroke-width="1" /><line x1="456.0" y1="203.0" x2="322.0" y2="303.0" stroke="#000" stroke-width="1" /><line x1="789.0" y1="214.0" x2="932.0" y2="275.0" stroke="#000" stroke-width="17" stroke-linecap="butt"/><line x1="789.0" y1="214.0" x2="932.0" y2="275.0" stroke="#ffff00" stroke-width="15" stroke-linecap="butt"/><line x1="787.8" y1="216.8" x2="930.8" y2="277.8" stroke="#000" stroke-width="0.9"/><line x1="461.0" y1="196.0" x2="787.0" y2="216.0" stroke="#000" stroke-width="15" stroke-linecap="butt"/><line x1="461.0" y1="196.0" x2="787.0" y2="216.0" stroke="#ffff00" stroke-width="13" stroke-linecap="butt"/><line x1="460.8" y1="198.6" x2="786.8" y2="218.6" stroke="#000" stroke-width="0.9"/><polygon points="455.0,190.0 467.0,190.0 465.0,201.0 457.0,201.0" fill="#ffff00" stroke="#000" stroke-width="1" /><polygon points="563.0,196.5 575.0,196.5 573.0,207.5 565.0,207.5" fill="#ffff00" stroke="#000" stroke-width="1" /><polygon points="673.0,202.5 685.0,202.5 683.0,213.5 675.0,213.5" fill="#ffff00" stroke="#000" stroke-width="1" /><polygon points="782.0,209.0 794.0,209.0 792.0,220.0 784.0,220.0" fill="#ffff00" stroke="#000" stroke-width="1" /><circle cx="700" cy="236" r="2.5" fill="#ff0000"/><path d="M692 220 L716 262" stroke="#ffff60" stroke-width="1" fill="none"/><path d="M272 486 H300 M293 490 L300 486" stroke="#ff2020" stroke-width="1"/><path d="M1026 175 V206" stroke="#0000ff" stroke-width="2"/><path d="M1026 206 H1056" stroke="#ff0000" stroke-width="2"/><path d="M1026 206 L1035 199" stroke="#00ff00" stroke-width="2.5"/><text x="1030" y="184" font-family="Liberation Sans" font-size="9" fill="#0000ff">z</text><text x="1036" y="210" font-family="Liberation Sans" font-size="8" fill="#30e030">y</text><text x="1055" y="218" font-family="Liberation Sans" font-size="9" fill="#ff0000">x</text></svg>
<div class="a" style="left:206px;top:768px;width:142px;height:24px;background:#ffff00;"></div>
<div class="t" style="left:210.0px;top:774.0px;font-size:11px;line-height:13px;color:#111;">0.00</div>
<div class="a" style="left:349px;top:768px;width:141px;height:24px;background:#00ff00;"></div>
<div class="t" style="left:353.0px;top:774.0px;font-size:11px;line-height:13px;color:#111;">0.50</div>
<div class="a" style="left:491px;top:768px;width:142px;height:24px;background:#00ffff;"></div>
<div class="t" style="left:495.0px;top:774.0px;font-size:11px;line-height:13px;color:#111;">0.75</div>
<div class="a" style="left:634px;top:768px;width:142px;height:24px;background:#ff00ff;"></div>
<div class="t" style="left:638.0px;top:774.0px;font-size:11px;line-height:13px;color:#111;">0.90</div>
<div class="a" style="left:777px;top:768px;width:142px;height:24px;background:#ff0000;"></div>
<div class="t" style="left:781.0px;top:774.0px;font-size:11px;line-height:13px;color:#111;">1.00</div>
<div class="a" style="left:920px;top:768px;width:142px;height:24px;background:#c0c0c0;"></div>
<div class="t" style="left:924.0px;top:774.0px;font-size:11px;line-height:13px;color:#111;">μή ελεγμένα</div>
<div class="a" style="left:203px;top:793px;width:862px;height:2px;background:#e6e6e6;"></div>
<div class="a" style="left:1065px;top:134px;width:416px;height:922px;background:#e6e6e6;"></div>
<div class="a" style="left:1065px;top:134px;width:1px;height:661px;background:#d0d0d0;"></div>
<div class="t" style="left:1076.6px;top:143.5px;font-size:21px;line-height:25px;color:#3b3b3b;transform:scaleX(1.035);transform-origin:0 0;">Γραφήματα</div>
<svg style="left:1427.5px;top:152px;" width="10" height="6" viewBox="0 0 10 6"><path d="M0 0 H10 L5 5 Z" fill="#777"/></svg>
<svg style="left:1447.5px;top:149px;" width="8" height="12" viewBox="0 0 8 12"><path d="M1.5 1 H6.5 M2.5 1 V7 H5.5 V1 M0.5 7 H7.5 M4 7 V11.5" stroke="#666" stroke-width="1.2" fill="none"/></svg>
<svg style="left:1465.5px;top:150px;" width="10" height="10" viewBox="0 0 10 10"><path d="M1 1 L9 9 M9 1 L1 9" stroke="#666" stroke-width="1.4"/></svg>
<div class="a" style="left:1071px;top:175px;width:409px;height:24px;background:#f0f0f0;"></div>
<div class="a" style="left:1208px;top:176px;width:20px;height:21px;background:#c8c8c8;"></div>
<svg style="left:1209px;top:178px;" width="17" height="17" viewBox="0 0 17 17"><path d="M1 1 V15.5 H16" stroke="#222" fill="none" stroke-width="1.2"/><path d="M1.5 15 C4 3, 11 -2, 15.5 15 Z" fill="#50b0f0" stroke="#1030a0" stroke-width="0.8"/><path d="M1.5 15 L15.5 4" stroke="#a02060" stroke-width="1.2"/></svg>
<svg style="left:1082px;top:178px;" width="17" height="17" viewBox="0 0 17 17"><defs><radialGradient id="pie" cx="0.4" cy="0.3"><stop offset="0" stop-color="#fff"/><stop offset="1" stop-color="#1a1aff"/></radialGradient></defs><circle cx="8" cy="8.5" r="7.5" fill="url(#pie)"/><path d="M8 8.5 L2 3 A7.5 7.5 0 0 1 6 1.2 Z" fill="#f0b0a0"/></svg>
<svg style="left:1104px;top:178px;" width="17" height="17" viewBox="0 0 17 17"><path d="M1 1 V16 H17" stroke="#222" fill="none"/><rect x="1.5" y="2" width="4" height="1.5" fill="#8060e0"/><rect x="1.5" y="4" width="6" height="1.5" fill="#f08080"/><rect x="1.5" y="6" width="8" height="1.5" fill="#8060e0"/><rect x="1.5" y="8" width="10" height="1.5" fill="#f08080"/><rect x="1.5" y="10" width="12" height="1.5" fill="#8060e0"/><rect x="1.5" y="12" width="14" height="1.5" fill="#f08080"/><rect x="1.5" y="14" width="16" height="1.5" fill="#8060e0"/></svg>
<svg style="left:1134px;top:178px;" width="17" height="17" viewBox="0 0 17 17"><rect x="1" y="2" width="15" height="1.8" fill="#e02020"/><rect x="1" y="5" width="12" height="1.8" fill="#e02020"/><rect x="1" y="8" width="9" height="1.8" fill="#e02020"/><rect x="1" y="11" width="6" height="1.8" fill="#e02020"/><rect x="1" y="14" width="8" height="1.8" fill="#e02020"/><path d="M1 1 V16" stroke="#222"/></svg>
<svg style="left:1157px;top:178px;" width="17" height="17" viewBox="0 0 17 17"><rect x="1" y="2" width="15" height="1.8" fill="#3040d0"/><rect x="1" y="5" width="13" height="1.8" fill="#3040d0"/><rect x="1" y="8" width="11" height="1.8" fill="#3040d0"/><rect x="1" y="11" width="9" height="1.8" fill="#3040d0"/><rect x="1" y="14" width="7" height="1.8" fill="#3040d0"/><path d="M1 1 V16 H16" stroke="#222" fill="none"/></svg>
<svg style="left:1187px;top:178px;" width="17" height="17" viewBox="0 0 17 17"><defs><radialGradient id="bc" cx="0.4" cy="0.3"><stop offset="0" stop-color="#90b0ff"/><stop offset="1" stop-color="#1030c0"/></radialGradient></defs><circle cx="8" cy="8.5" r="7.5" fill="url(#bc)"/><path d="M8 3 V8" stroke="#c02020" stroke-width="1.5"/></svg>
<svg style="left:1252px;top:178px;" width="17" height="17" viewBox="0 0 17 17"><path d="M1 1 V16 H17" stroke="#222" fill="none"/><rect x="3" y="5" width="3" height="11" fill="#30a030"/><rect x="7" y="2" width="3" height="14" fill="#d0a020"/><rect x="11" y="8" width="3" height="8" fill="#e03030"/></svg>
<svg style="left:1367px;top:178px;" width="17" height="17" viewBox="0 0 17 17"><rect x="1" y="2" width="14" height="13" fill="#fff" stroke="#3a6ab0"/><path d="M3 5 H10 M3 8 H10 M3 11 H8" stroke="#888"/><path d="M8 12 L15 3" stroke="#e02020" stroke-width="2"/></svg>
<svg style="left:1397px;top:178px;" width="17" height="17" viewBox="0 0 17 17"><rect x="1" y="2" width="9" height="11" fill="#fff" stroke="#3a5a90"/><rect x="6" y="5" width="9" height="11" fill="#fff" stroke="#3a5a90"/><path d="M8 8 H13 M8 10.5 H13 M8 13 H13" stroke="#3a5a90" stroke-width="0.8"/></svg>
<svg style="left:1419px;top:178px;" width="17" height="17" viewBox="0 0 17 17"><rect x="1" y="1" width="15" height="15" rx="1" fill="#9a50c0"/><rect x="3.5" y="2" width="10" height="6" fill="#f4f0f8"/><rect x="4" y="10.5" width="9" height="5" fill="#777"/></svg>
<div class="a" style="left:1128px;top:178px;width:1px;height:17px;background:#d0d0d0;"></div>
<div class="a" style="left:1180px;top:178px;width:1px;height:17px;background:#d0d0d0;"></div>
<div class="a" style="left:1276px;top:178px;width:1px;height:17px;background:#d0d0d0;"></div>
<div class="a" style="left:1360px;top:178px;width:1px;height:17px;background:#d0d0d0;"></div>
<div class="a" style="left:1390px;top:178px;width:1px;height:17px;background:#d0d0d0;"></div>
<div class="a" style="left:1281px;top:177px;width:34px;height:20px;background:#c8c8c8;"></div>
<div class="t" style="left:1284.0px;top:180.0px;font-size:12px;line-height:14px;color:#999;">Αρχή</div>
<div class="t" style="left:1321.0px;top:180.0px;font-size:12px;line-height:14px;color:#a8a8a8;transform:scaleX(1.012);transform-origin:0 0;">Τέλος</div>
<div class="a" style="left:1072px;top:200px;width:407px;height:292px;background:#ffffff;"></div>
<div class="a" style="left:1072px;top:497px;width:407px;height:295px;background:#ffffff;"></div>
<svg style="left:0;top:0" width="1765" height="1078" viewBox="0 0 1765 1078"><line x1="1173.0" y1="246.9" x2="1173.0" y2="426.2" stroke="#dcdcdc" stroke-width="1"/><line x1="1195.2" y1="246.9" x2="1195.2" y2="426.2" stroke="#dcdcdc" stroke-width="1"/><line x1="1217.3" y1="246.9" x2="1217.3" y2="426.2" stroke="#dcdcdc" stroke-width="1"/><line x1="1239.5" y1="246.9" x2="1239.5" y2="426.2" stroke="#dcdcdc" stroke-width="1"/><line x1="1261.7" y1="246.9" x2="1261.7" y2="426.2" stroke="#dcdcdc" stroke-width="1"/><line x1="1283.9" y1="246.9" x2="1283.9" y2="426.2" stroke="#dcdcdc" stroke-width="1"/><line x1="1306.0" y1="246.9" x2="1306.0" y2="426.2" stroke="#dcdcdc" stroke-width="1"/><line x1="1328.2" y1="246.9" x2="1328.2" y2="426.2" stroke="#dcdcdc" stroke-width="1"/><line x1="1350.4" y1="246.9" x2="1350.4" y2="426.2" stroke="#dcdcdc" stroke-width="1"/><line x1="1372.6" y1="246.9" x2="1372.6" y2="426.2" stroke="#dcdcdc" stroke-width="1"/><line x1="1394.8" y1="246.9" x2="1394.8" y2="426.2" stroke="#dcdcdc" stroke-width="1"/><line x1="1416.9" y1="246.9" x2="1416.9" y2="426.2" stroke="#dcdcdc" stroke-width="1"/><line x1="1439.1" y1="246.9" x2="1439.1" y2="426.2" stroke="#dcdcdc" stroke-width="1"/><line x1="1461.3" y1="246.9" x2="1461.3" y2="426.2" stroke="#dcdcdc" stroke-width="1"/><line x1="1150.8" y1="400.6" x2="1461.3" y2="400.6" stroke="#dcdcdc" stroke-width="1"/><line x1="1150.8" y1="375.0" x2="1461.3" y2="375.0" stroke="#dcdcdc" stroke-width="1"/><line x1="1150.8" y1="349.4" x2="1461.3" y2="349.4" stroke="#dcdcdc" stroke-width="1"/><line x1="1150.8" y1="323.7" x2="1461.3" y2="323.7" stroke="#dcdcdc" stroke-width="1"/><line x1="1150.8" y1="298.1" x2="1461.3" y2="298.1" stroke="#dcdcdc" stroke-width="1"/><line x1="1150.8" y1="272.5" x2="1461.3" y2="272.5" stroke="#dcdcdc" stroke-width="1"/><line x1="1150.8" y1="246.9" x2="1461.3" y2="246.9" stroke="#dcdcdc" stroke-width="1"/><defs><linearGradient id="pf426.2" x1="0" y1="0" x2="1" y2="1"><stop offset="0" stop-color="#e2c6ff"/><stop offset="1" stop-color="#c9a2ee"/></linearGradient></defs><polygon points="1150.8,426.2 1151.9,424.3 1153.0,422.5 1154.1,420.6 1155.2,418.8 1156.3,417.0 1157.5,415.2 1158.6,413.5 1159.7,411.7 1160.8,409.9 1161.9,408.2 1163.0,406.7 1164.1,406.2 1165.2,405.8 1166.3,405.3 1167.4,404.9 1168.5,404.5 1169.7,404.1 1170.8,403.7 1171.9,403.3 1173.0,402.9 1174.1,402.6 1175.2,402.2 1176.3,401.8 1177.4,401.5 1178.5,401.1 1179.6,400.8 1180.7,400.4 1181.8,400.1 1183.0,399.7 1184.1,399.4 1185.2,399.1 1186.3,398.8 1187.4,398.4 1188.5,398.1 1189.6,397.8 1190.7,397.5 1191.8,397.2 1192.9,396.9 1194.0,396.6 1195.2,396.3 1196.3,396.0 1197.4,395.7 1198.5,395.4 1199.6,395.1 1200.7,394.9 1201.8,394.6 1202.9,394.3 1204.0,394.0 1205.1,393.7 1206.2,393.5 1207.4,393.2 1208.5,392.9 1209.6,392.7 1210.7,392.4 1211.8,392.2 1212.9,391.9 1214.0,391.6 1215.1,391.4 1216.2,391.1 1217.3,390.9 1218.4,390.6 1219.6,390.4 1220.7,390.1 1221.8,389.9 1222.9,389.6 1224.0,389.4 1225.1,389.2 1226.2,388.9 1227.3,388.7 1228.4,388.5 1229.5,388.2 1230.6,388.0 1231.8,387.8 1232.9,387.5 1234.0,387.3 1235.1,387.1 1236.2,386.9 1237.3,386.6 1238.4,386.4 1239.5,386.2 1240.6,386.0 1241.7,385.7 1242.8,385.5 1244.0,385.3 1245.1,385.1 1246.2,384.9 1247.3,384.7 1248.4,384.5 1249.5,384.2 1250.6,384.0 1251.7,383.8 1252.8,383.6 1253.9,383.4 1255.0,383.2 1256.1,383.0 1257.3,382.8 1258.4,382.6 1259.5,382.4 1260.6,382.2 1261.7,382.0 1262.8,381.8 1263.9,381.6 1265.0,381.4 1266.1,381.2 1267.2,381.0 1268.3,380.8 1269.5,380.6 1270.6,380.4 1271.7,380.2 1272.8,380.0 1273.9,379.8 1275.0,379.7 1276.1,379.5 1277.2,379.3 1278.3,379.1 1279.4,378.9 1280.5,378.7 1281.7,378.5 1282.8,378.3 1283.9,378.2 1285.0,378.0 1286.1,377.8 1287.2,377.6 1288.3,377.4 1289.4,377.2 1290.5,377.1 1291.6,376.9 1292.7,376.7 1293.9,376.5 1295.0,376.4 1296.1,376.2 1297.2,376.0 1298.3,375.8 1299.4,375.6 1300.5,375.5 1301.6,375.3 1302.7,375.1 1303.8,375.0 1304.9,374.8 1306.0,374.6 1307.2,374.4 1308.3,374.3 1309.4,374.1 1310.5,373.9 1311.6,373.8 1312.7,373.6 1313.8,373.4 1314.9,373.3 1316.0,373.1 1317.1,372.9 1318.2,372.8 1319.4,372.6 1320.5,372.4 1321.6,372.3 1322.7,372.1 1323.8,371.9 1324.9,371.8 1326.0,371.6 1327.1,371.5 1328.2,371.3 1329.3,371.1 1330.4,371.0 1331.6,370.8 1332.7,370.6 1333.8,370.5 1334.9,370.3 1336.0,370.2 1337.1,370.0 1338.2,369.9 1339.3,369.7 1340.4,369.5 1341.5,369.4 1342.6,369.2 1343.8,369.1 1344.9,368.9 1346.0,368.8 1347.1,368.6 1348.2,368.5 1349.3,368.3 1350.4,368.2 1351.5,368.0 1352.6,367.9 1353.7,367.7 1354.8,367.6 1356.0,367.4 1357.1,367.3 1358.2,367.1 1359.3,367.0 1360.4,366.8 1361.5,366.7 1362.6,366.5 1363.7,366.4 1364.8,366.2 1365.9,366.1 1367.0,365.9 1368.1,365.8 1369.3,365.6 1370.4,365.5 1371.5,365.3 1372.6,365.2 1373.7,365.0 1374.8,364.9 1375.9,364.8 1377.0,364.6 1378.1,364.5 1379.2,364.3 1380.3,364.2 1381.5,364.0 1382.6,363.9 1383.7,363.8 1384.8,363.6 1385.9,363.5 1387.0,363.4 1388.1,364.7 1389.2,366.0 1390.3,367.3 1391.4,368.7 1392.5,370.0 1393.7,371.4 1394.8,372.8 1395.9,374.1 1397.0,375.6 1398.1,377.0 1399.2,378.4 1400.3,379.9 1401.4,381.3 1402.5,382.8 1403.6,384.3 1404.7,385.8 1405.9,387.4 1407.0,388.9 1408.1,390.5 1409.2,392.0 1410.3,393.6 1411.4,395.2 1412.5,396.8 1413.6,398.5 1414.7,400.1 1415.8,401.8 1416.9,403.4 1418.1,405.1 1419.2,406.8 1420.3,408.6 1421.4,410.3 1422.5,412.0 1423.6,413.8 1424.7,415.6 1425.8,417.4 1426.9,419.2 1428.0,421.0 1429.1,422.9 1430.2,424.7 1431.1,426.2 1431.1,426.2 1150.8,426.2" fill="url(#pf426.2)"/><polyline points="1150.8,426.2 1153.0,422.5 1155.2,418.8 1157.5,415.2 1159.7,411.7 1161.9,408.2 1164.1,404.8 1166.3,401.4 1168.5,398.1 1170.8,394.9 1173.0,391.7 1175.2,388.6 1177.4,385.5 1179.6,382.5 1181.8,379.6 1184.1,376.7 1186.3,373.9 1188.5,371.1 1190.7,368.4 1192.9,365.7 1195.2,363.2 1197.4,360.6 1199.6,358.2 1201.8,355.7 1204.0,353.4 1206.2,351.1 1208.5,348.9 1210.7,346.7 1212.9,344.6 1215.1,342.5 1217.3,340.5 1219.6,338.6 1221.8,336.7 1224.0,334.9 1226.2,333.1 1228.4,331.4 1230.6,329.8 1232.9,328.2 1235.1,326.7 1237.3,325.2 1239.5,323.8 1241.7,322.5 1244.0,321.2 1246.2,320.0 1248.4,318.8 1250.6,317.7 1252.8,316.6 1255.0,315.6 1257.3,314.7 1259.5,313.8 1261.7,313.0 1263.9,312.3 1266.1,311.6 1268.3,310.9 1270.6,310.4 1272.8,309.9 1275.0,309.4 1277.2,309.0 1279.4,308.7 1281.7,308.4 1283.9,308.2 1286.1,308.0 1288.3,307.9 1290.5,307.9 1292.7,307.9 1295.0,308.0 1297.2,308.1 1299.4,308.3 1301.6,308.5 1303.8,308.9 1306.0,309.2 1308.3,309.7 1310.5,310.2 1312.7,310.7 1314.9,311.3 1317.1,312.0 1319.4,312.7 1321.6,313.5 1323.8,314.4 1326.0,315.3 1328.2,316.2 1330.4,317.2 1332.7,318.3 1334.9,319.5 1337.1,320.7 1339.3,321.9 1341.5,323.3 1343.8,324.6 1346.0,326.1 1348.2,327.6 1350.4,329.1 1352.6,330.8 1354.8,332.4 1357.1,334.2 1359.3,336.0 1361.5,337.8 1363.7,339.7 1365.9,341.7 1368.1,343.7 1370.4,345.8 1372.6,348.0 1374.8,350.2 1377.0,352.5 1379.2,354.8 1381.5,357.2 1383.7,359.6 1385.9,362.1 1388.1,364.7 1390.3,367.3 1392.5,370.0 1394.8,372.8 1397.0,375.6 1399.2,378.4 1401.4,381.3 1403.6,384.3 1405.9,387.4 1408.1,390.5 1410.3,393.6 1412.5,396.8 1414.7,400.1 1416.9,403.4 1419.2,406.8 1421.4,410.3 1423.6,413.8 1425.8,417.4 1428.0,421.0 1430.2,424.7 1431.1,426.2" fill="none" stroke="#2f5fd0" stroke-width="2" /><polyline points="1150.8,391.6 1430.7,262.3" fill="none" stroke="#c0504d" stroke-width="2" /><polyline points="1150.8,412.5 1155.2,410.1 1159.7,408.1 1164.1,406.2 1168.5,404.5 1173.0,402.9 1177.4,401.5 1181.8,400.1 1186.3,398.8 1190.7,397.5 1195.2,396.3 1199.6,395.1 1204.0,394.0 1208.5,392.9 1212.9,391.9 1217.3,390.9 1221.8,389.9 1226.2,388.9 1230.6,388.0 1235.1,387.1 1239.5,386.2 1244.0,385.3 1248.4,384.5 1252.8,383.6 1257.3,382.8 1261.7,382.0 1266.1,381.2 1270.6,380.4 1275.0,379.7 1279.4,378.9 1283.9,378.2 1288.3,377.4 1292.7,376.7 1297.2,376.0 1301.6,375.3 1306.0,374.6 1310.5,373.9 1314.9,373.3 1319.4,372.6 1323.8,371.9 1328.2,371.3 1332.7,370.6 1337.1,370.0 1341.5,369.4 1346.0,368.8 1350.4,368.2 1354.8,367.6 1359.3,367.0 1363.7,366.4 1368.1,365.8 1372.6,365.2 1377.0,364.6 1381.5,364.0 1385.9,363.5 1390.3,362.9 1394.8,362.4 1399.2,361.8 1403.6,361.3 1408.1,360.7 1412.5,360.2 1416.9,359.6 1421.4,359.1 1425.8,358.6 1430.2,358.1 1434.7,357.6" fill="none" stroke="#4f6228" stroke-width="2" /><polyline points="1150.8,426.2 1151.9,424.3 1153.0,422.5 1154.1,420.6 1155.2,418.8 1156.3,417.0 1157.5,415.2 1158.6,413.5 1159.7,411.7 1160.8,409.9 1161.9,408.2 1163.0,406.7 1164.1,406.2 1165.2,405.8 1166.3,405.3 1167.4,404.9 1168.5,404.5 1169.7,404.1 1170.8,403.7 1171.9,403.3 1173.0,402.9 1174.1,402.6 1175.2,402.2 1176.3,401.8 1177.4,401.5 1178.5,401.1 1179.6,400.8 1180.7,400.4 1181.8,400.1 1183.0,399.7 1184.1,399.4 1185.2,399.1 1186.3,398.8 1187.4,398.4 1188.5,398.1 1189.6,397.8 1190.7,397.5 1191.8,397.2 1192.9,396.9 1194.0,396.6 1195.2,396.3 1196.3,396.0 1197.4,395.7 1198.5,395.4 1199.6,395.1 1200.7,394.9 1201.8,394.6 1202.9,394.3 1204.0,394.0 1205.1,393.7 1206.2,393.5 1207.4,393.2 1208.5,392.9 1209.6,392.7 1210.7,392.4 1211.8,392.2 1212.9,391.9 1214.0,391.6 1215.1,391.4 1216.2,391.1 1217.3,390.9 1218.4,390.6 1219.6,390.4 1220.7,390.1 1221.8,389.9 1222.9,389.6 1224.0,389.4 1225.1,389.2 1226.2,388.9 1227.3,388.7 1228.4,388.5 1229.5,388.2 1230.6,388.0 1231.8,387.8 1232.9,387.5 1234.0,387.3 1235.1,387.1 1236.2,386.9 1237.3,386.6 1238.4,386.4 1239.5,386.2 1240.6,386.0 1241.7,385.7 1242.8,385.5 1244.0,385.3 1245.1,385.1 1246.2,384.9 1247.3,384.7 1248.4,384.5 1249.5,384.2 1250.6,384.0 1251.7,383.8 1252.8,383.6 1253.9,383.4 1255.0,383.2 1256.1,383.0 1257.3,382.8 1258.4,382.6 1259.5,382.4 1260.6,382.2 1261.7,382.0 1262.8,381.8 1263.9,381.6 1265.0,381.4 1266.1,381.2 1267.2,381.0 1268.3,380.8 1269.5,380.6 1270.6,380.4 1271.7,380.2 1272.8,380.0 1273.9,379.8 1275.0,379.7 1276.1,379.5 1277.2,379.3 1278.3,379.1 1279.4,378.9 1280.5,378.7 1281.7,378.5 1282.8,378.3 1283.9,378.2 1285.0,378.0 1286.1,377.8 1287.2,377.6 1288.3,377.4 1289.4,377.2 1290.5,377.1 1291.6,376.9 1292.7,376.7 1293.9,376.5 1295.0,376.4 1296.1,376.2 1297.2,376.0 1298.3,375.8 1299.4,375.6 1300.5,375.5 1301.6,375.3 1302.7,375.1 1303.8,375.0 1304.9,374.8 1306.0,374.6 1307.2,374.4 1308.3,374.3 1309.4,374.1 1310.5,373.9 1311.6,373.8 1312.7,373.6 1313.8,373.4 1314.9,373.3 1316.0,373.1 1317.1,372.9 1318.2,372.8 1319.4,372.6 1320.5,372.4 1321.6,372.3 1322.7,372.1 1323.8,371.9 1324.9,371.8 1326.0,371.6 1327.1,371.5 1328.2,371.3 1329.3,371.1 1330.4,371.0 1331.6,370.8 1332.7,370.6 1333.8,370.5 1334.9,370.3 1336.0,370.2 1337.1,370.0 1338.2,369.9 1339.3,369.7 1340.4,369.5 1341.5,369.4 1342.6,369.2 1343.8,369.1 1344.9,368.9 1346.0,368.8 1347.1,368.6 1348.2,368.5 1349.3,368.3 1350.4,368.2 1351.5,368.0 1352.6,367.9 1353.7,367.7 1354.8,367.6 1356.0,367.4 1357.1,367.3 1358.2,367.1 1359.3,367.0 1360.4,366.8 1361.5,366.7 1362.6,366.5 1363.7,366.4 1364.8,366.2 1365.9,366.1 1367.0,365.9 1368.1,365.8 1369.3,365.6 1370.4,365.5 1371.5,365.3 1372.6,365.2 1373.7,365.0 1374.8,364.9 1375.9,364.8 1377.0,364.6 1378.1,364.5 1379.2,364.3 1380.3,364.2 1381.5,364.0 1382.6,363.9 1383.7,363.8 1384.8,363.6 1385.9,363.5 1387.0,363.4 1388.1,364.7 1389.2,366.0 1390.3,367.3 1391.4,368.7 1392.5,370.0 1393.7,371.4 1394.8,372.8 1395.9,374.1 1397.0,375.6 1398.1,377.0 1399.2,378.4 1400.3,379.9 1401.4,381.3 1402.5,382.8 1403.6,384.3 1404.7,385.8 1405.9,387.4 1407.0,388.9 1408.1,390.5 1409.2,392.0 1410.3,393.6 1411.4,395.2 1412.5,396.8 1413.6,398.5 1414.7,400.1 1415.8,401.8 1416.9,403.4 1418.1,405.1 1419.2,406.8 1420.3,408.6 1421.4,410.3 1422.5,412.0 1423.6,413.8 1424.7,415.6 1425.8,417.4 1426.9,419.2 1428.0,421.0 1429.1,422.9 1430.2,424.7 1431.1,426.2" fill="none" stroke="#7a30cc" stroke-width="2.6"/><path d="M1150.8 406.2 H1163.7 V426.2" fill="none" stroke="#e00000" stroke-width="2" stroke-dasharray="5 3"/><line x1="1150.8" y1="245.9" x2="1150.8" y2="426.2" stroke="#333" stroke-width="1.5"/><line x1="1142.8" y1="426.2" x2="1461.3" y2="426.2" stroke="#333" stroke-width="1.5"/><line x1="1142.8" y1="426.2" x2="1154.8" y2="426.2" stroke="#333" stroke-width="1"/><line x1="1146.8" y1="421.1" x2="1154.8" y2="421.1" stroke="#333" stroke-width="1"/><line x1="1146.8" y1="416.0" x2="1154.8" y2="416.0" stroke="#333" stroke-width="1"/><line x1="1146.8" y1="410.8" x2="1154.8" y2="410.8" stroke="#333" stroke-width="1"/><line x1="1146.8" y1="405.7" x2="1154.8" y2="405.7" stroke="#333" stroke-width="1"/><line x1="1142.8" y1="400.6" x2="1154.8" y2="400.6" stroke="#333" stroke-width="1"/><line x1="1146.8" y1="395.5" x2="1154.8" y2="395.5" stroke="#333" stroke-width="1"/><line x1="1146.8" y1="390.3" x2="1154.8" y2="390.3" stroke="#333" stroke-width="1"/><line x1="1146.8" y1="385.2" x2="1154.8" y2="385.2" stroke="#333" stroke-width="1"/><line x1="1146.8" y1="380.1" x2="1154.8" y2="380.1" stroke="#333" stroke-width="1"/><line x1="1142.8" y1="375.0" x2="1154.8" y2="375.0" stroke="#333" stroke-width="1"/><line x1="1146.8" y1="369.8" x2="1154.8" y2="369.8" stroke="#333" stroke-width="1"/><line x1="1146.8" y1="364.7" x2="1154.8" y2="364.7" stroke="#333" stroke-width="1"/><line x1="1146.8" y1="359.6" x2="1154.8" y2="359.6" stroke="#333" stroke-width="1"/><line x1="1146.8" y1="354.5" x2="1154.8" y2="354.5" stroke="#333" stroke-width="1"/><line x1="1142.8" y1="349.4" x2="1154.8" y2="349.4" stroke="#333" stroke-width="1"/><line x1="1146.8" y1="344.2" x2="1154.8" y2="344.2" stroke="#333" stroke-width="1"/><line x1="1146.8" y1="339.1" x2="1154.8" y2="339.1" stroke="#333" stroke-width="1"/><line x1="1146.8" y1="334.0" x2="1154.8" y2="334.0" stroke="#333" stroke-width="1"/><line x1="1146.8" y1="328.9" x2="1154.8" y2="328.9" stroke="#333" stroke-width="1"/><line x1="1142.8" y1="323.7" x2="1154.8" y2="323.7" stroke="#333" stroke-width="1"/><line x1="1146.8" y1="318.6" x2="1154.8" y2="318.6" stroke="#333" stroke-width="1"/><line x1="1146.8" y1="313.5" x2="1154.8" y2="313.5" stroke="#333" stroke-width="1"/><line x1="1146.8" y1="308.4" x2="1154.8" y2="308.4" stroke="#333" stroke-width="1"/><line x1="1146.8" y1="303.3" x2="1154.8" y2="303.3" stroke="#333" stroke-width="1"/><line x1="1142.8" y1="298.1" x2="1154.8" y2="298.1" stroke="#333" stroke-width="1"/><line x1="1146.8" y1="293.0" x2="1154.8" y2="293.0" stroke="#333" stroke-width="1"/><line x1="1146.8" y1="287.9" x2="1154.8" y2="287.9" stroke="#333" stroke-width="1"/><line x1="1146.8" y1="282.8" x2="1154.8" y2="282.8" stroke="#333" stroke-width="1"/><line x1="1146.8" y1="277.6" x2="1154.8" y2="277.6" stroke="#333" stroke-width="1"/><line x1="1142.8" y1="272.5" x2="1154.8" y2="272.5" stroke="#333" stroke-width="1"/><line x1="1146.8" y1="267.4" x2="1154.8" y2="267.4" stroke="#333" stroke-width="1"/><line x1="1146.8" y1="262.3" x2="1154.8" y2="262.3" stroke="#333" stroke-width="1"/><line x1="1146.8" y1="257.1" x2="1154.8" y2="257.1" stroke="#333" stroke-width="1"/><line x1="1146.8" y1="252.0" x2="1154.8" y2="252.0" stroke="#333" stroke-width="1"/><line x1="1142.8" y1="246.9" x2="1154.8" y2="246.9" stroke="#333" stroke-width="1"/><line x1="1150.8" y1="422.2" x2="1150.8" y2="434.2" stroke="#333" stroke-width="1"/><line x1="1173.0" y1="422.2" x2="1173.0" y2="430.2" stroke="#333" stroke-width="1"/><line x1="1195.2" y1="422.2" x2="1195.2" y2="434.2" stroke="#333" stroke-width="1"/><line x1="1217.3" y1="422.2" x2="1217.3" y2="430.2" stroke="#333" stroke-width="1"/><line x1="1239.5" y1="422.2" x2="1239.5" y2="434.2" stroke="#333" stroke-width="1"/><line x1="1261.7" y1="422.2" x2="1261.7" y2="430.2" stroke="#333" stroke-width="1"/><line x1="1283.9" y1="422.2" x2="1283.9" y2="434.2" stroke="#333" stroke-width="1"/><line x1="1306.0" y1="422.2" x2="1306.0" y2="430.2" stroke="#333" stroke-width="1"/><line x1="1328.2" y1="422.2" x2="1328.2" y2="434.2" stroke="#333" stroke-width="1"/><line x1="1350.4" y1="422.2" x2="1350.4" y2="430.2" stroke="#333" stroke-width="1"/><line x1="1372.6" y1="422.2" x2="1372.6" y2="434.2" stroke="#333" stroke-width="1"/><line x1="1394.8" y1="422.2" x2="1394.8" y2="430.2" stroke="#333" stroke-width="1"/><line x1="1416.9" y1="422.2" x2="1416.9" y2="434.2" stroke="#333" stroke-width="1"/><line x1="1439.1" y1="422.2" x2="1439.1" y2="430.2" stroke="#333" stroke-width="1"/><line x1="1461.3" y1="422.2" x2="1461.3" y2="434.2" stroke="#333" stroke-width="1"/></svg>
<div class="t" style="left:1134.7px;top:419.7px;font-size:11px;line-height:13px;color:#222;">0</div>
<div class="t" style="left:1122.4px;top:394.1px;font-size:11px;line-height:13px;color:#222;">100</div>
<div class="t" style="left:1122.4px;top:368.5px;font-size:11px;line-height:13px;color:#222;">200</div>
<div class="t" style="left:1122.4px;top:342.9px;font-size:11px;line-height:13px;color:#222;">300</div>
<div class="t" style="left:1122.4px;top:317.2px;font-size:11px;line-height:13px;color:#222;">400</div>
<div class="t" style="left:1122.4px;top:291.6px;font-size:11px;line-height:13px;color:#222;">500</div>
<div class="t" style="left:1122.4px;top:266.0px;font-size:11px;line-height:13px;color:#222;">600</div>
<div class="t" style="left:1122.4px;top:240.4px;font-size:11px;line-height:13px;color:#222;">700</div>
<div class="t" style="left:1147.7px;top:437.2px;font-size:11px;line-height:13px;color:#222;">0</div>
<div class="t" style="left:1186.0px;top:437.2px;font-size:11px;line-height:13px;color:#222;">200</div>
<div class="t" style="left:1230.3px;top:437.2px;font-size:11px;line-height:13px;color:#222;">400</div>
<div class="t" style="left:1274.7px;top:437.2px;font-size:11px;line-height:13px;color:#222;">600</div>
<div class="t" style="left:1319.1px;top:437.2px;font-size:11px;line-height:13px;color:#222;">800</div>
<div class="t" style="left:1360.4px;top:437.2px;font-size:11px;line-height:13px;color:#222;">1000</div>
<div class="t" style="left:1404.7px;top:437.2px;font-size:11px;line-height:13px;color:#222;">1200</div>
<div class="t" style="left:1449.1px;top:437.2px;font-size:11px;line-height:13px;color:#222;">1400</div>
<div class="t" style="left:1130.5px;top:213.0px;font-size:15px;line-height:18px;color:#111;transform:scaleX(1.061);transform-origin:0 0;">Αντοχή Πεσσού Εντός Επιπέδου VRd3-N</div>
<div class="t" style="left:1283.5px;top:465.0px;font-size:17px;line-height:20px;color:#111;transform:scaleX(1.014);transform-origin:0 0;">N(kN)</div>
<div class="t" style="left:1061.1px;top:325.3px;font-size:17px;line-height:20px;color:#111;transform:rotate(-90deg);transform-origin:37.3px 10px">VRd3(kN)</div>
<svg style="left:0;top:0" width="1765" height="1078" viewBox="0 0 1765 1078"><rect x="1349.5" y="241" width="121.5" height="110" fill="#ffffff" fill-opacity="0.72" stroke="#e0e0e0" stroke-width="1"/><line x1="1358.5" y1="258" x2="1388.5" y2="258" stroke="#2f5fd0" stroke-width="2"/><line x1="1358.5" y1="277" x2="1388.5" y2="277" stroke="#c0504d" stroke-width="2"/><line x1="1358.5" y1="296" x2="1388.5" y2="296" stroke="#4f6228" stroke-width="2"/><rect x="1359.5" y="309" width="29" height="10" fill="#d8b4fa" stroke="#7a30cc" stroke-width="2"/><line x1="1358.5" y1="333" x2="1388.5" y2="333" stroke="#e00000" stroke-width="2" stroke-dasharray="5 3"/></svg>
<div class="t" style="left:1392.5px;top:251.5px;font-size:11px;line-height:13px;color:#222;">Vf:Κάμψη</div>
<div class="t" style="left:1392.5px;top:270.5px;font-size:11px;line-height:13px;color:#222;">Vv:Ολίσθηση</div>
<div class="t" style="left:1392.5px;top:289.5px;font-size:11px;line-height:13px;color:#222;">Vv:Διαγ.Ρηγμ.</div>
<div class="t" style="left:1392.5px;top:307.5px;font-size:11px;line-height:13px;color:#222;">Vmin</div>
<div class="t" style="left:1392.5px;top:326.5px;font-size:11px;line-height:13px;color:#222;">Sd</div>
<svg style="left:0;top:0" width="1765" height="1078" viewBox="0 0 1765 1078"><line x1="1164.4" y1="544.0" x2="1164.4" y2="724.3" stroke="#dcdcdc" stroke-width="1"/><line x1="1184.1" y1="544.0" x2="1184.1" y2="724.3" stroke="#dcdcdc" stroke-width="1"/><line x1="1203.9" y1="544.0" x2="1203.9" y2="724.3" stroke="#dcdcdc" stroke-width="1"/><line x1="1223.7" y1="544.0" x2="1223.7" y2="724.3" stroke="#dcdcdc" stroke-width="1"/><line x1="1243.5" y1="544.0" x2="1243.5" y2="724.3" stroke="#dcdcdc" stroke-width="1"/><line x1="1263.2" y1="544.0" x2="1263.2" y2="724.3" stroke="#dcdcdc" stroke-width="1"/><line x1="1283.0" y1="544.0" x2="1283.0" y2="724.3" stroke="#dcdcdc" stroke-width="1"/><line x1="1302.8" y1="544.0" x2="1302.8" y2="724.3" stroke="#dcdcdc" stroke-width="1"/><line x1="1322.6" y1="544.0" x2="1322.6" y2="724.3" stroke="#dcdcdc" stroke-width="1"/><line x1="1342.3" y1="544.0" x2="1342.3" y2="724.3" stroke="#dcdcdc" stroke-width="1"/><line x1="1362.1" y1="544.0" x2="1362.1" y2="724.3" stroke="#dcdcdc" stroke-width="1"/><line x1="1381.9" y1="544.0" x2="1381.9" y2="724.3" stroke="#dcdcdc" stroke-width="1"/><line x1="1401.7" y1="544.0" x2="1401.7" y2="724.3" stroke="#dcdcdc" stroke-width="1"/><line x1="1421.4" y1="544.0" x2="1421.4" y2="724.3" stroke="#dcdcdc" stroke-width="1"/><line x1="1441.2" y1="544.0" x2="1441.2" y2="724.3" stroke="#dcdcdc" stroke-width="1"/><line x1="1461.0" y1="544.0" x2="1461.0" y2="724.3" stroke="#dcdcdc" stroke-width="1"/><line x1="1144.6" y1="694.2" x2="1461.0" y2="694.2" stroke="#dcdcdc" stroke-width="1"/><line x1="1144.6" y1="664.2" x2="1461.0" y2="664.2" stroke="#dcdcdc" stroke-width="1"/><line x1="1144.6" y1="634.1" x2="1461.0" y2="634.1" stroke="#dcdcdc" stroke-width="1"/><line x1="1144.6" y1="604.1" x2="1461.0" y2="604.1" stroke="#dcdcdc" stroke-width="1"/><line x1="1144.6" y1="574.0" x2="1461.0" y2="574.0" stroke="#dcdcdc" stroke-width="1"/><line x1="1144.6" y1="544.0" x2="1461.0" y2="544.0" stroke="#dcdcdc" stroke-width="1"/><defs><linearGradient id="pf724.3" x1="0" y1="0" x2="1" y2="1"><stop offset="0" stop-color="#e2c6ff"/><stop offset="1" stop-color="#c9a2ee"/></linearGradient></defs><polygon points="1144.6,724.3 1146.6,719.6 1148.6,715.0 1150.5,710.5 1152.5,706.0 1154.5,701.6 1156.5,697.3 1158.4,693.0 1160.4,688.8 1162.4,684.7 1164.4,680.6 1166.4,676.6 1168.3,672.6 1170.3,668.7 1172.3,664.9 1174.3,661.1 1176.2,657.4 1178.2,653.8 1180.2,650.2 1182.2,646.7 1184.1,643.3 1186.1,639.9 1188.1,636.6 1190.1,633.4 1192.1,630.2 1194.0,627.1 1196.0,624.0 1198.0,621.0 1200.0,618.1 1201.9,615.2 1203.9,612.4 1205.9,609.7 1207.9,607.0 1209.9,604.4 1211.8,601.9 1213.8,599.4 1215.8,597.0 1217.8,594.7 1219.7,592.4 1221.7,590.2 1223.7,588.0 1225.7,585.9 1227.7,583.9 1229.6,581.9 1231.6,580.0 1233.6,578.2 1235.6,576.4 1237.5,574.7 1239.5,573.1 1241.5,571.5 1243.5,570.0 1245.5,568.6 1247.4,567.2 1249.4,565.9 1251.4,564.6 1253.4,563.4 1255.3,562.3 1257.3,561.2 1259.3,560.2 1261.3,559.3 1263.2,558.4 1265.2,557.6 1267.2,556.9 1269.2,556.2 1271.2,555.6 1273.1,555.1 1275.1,554.6 1277.1,554.2 1279.1,553.8 1281.0,553.5 1283.0,553.3 1285.0,553.1 1287.0,553.0 1289.0,553.0 1290.9,553.0 1292.9,553.1 1294.9,553.3 1296.9,553.5 1298.8,553.8 1300.8,554.2 1302.8,554.6 1304.8,555.1 1306.8,555.6 1308.7,556.2 1310.7,556.9 1312.7,557.6 1314.7,558.4 1316.6,559.3 1318.6,560.2 1320.6,561.2 1322.6,562.3 1324.6,563.4 1326.5,564.6 1328.5,565.9 1330.5,567.2 1332.5,568.6 1334.4,570.0 1336.4,571.5 1338.4,573.1 1340.4,574.7 1342.3,576.4 1344.3,578.2 1346.3,580.0 1348.3,581.9 1350.3,583.9 1352.2,585.9 1354.2,588.0 1356.2,590.2 1358.2,592.4 1360.1,594.7 1362.1,597.0 1364.1,599.4 1366.1,601.9 1368.1,604.4 1370.0,607.0 1372.0,609.7 1374.0,612.4 1376.0,615.2 1377.9,618.1 1379.9,621.0 1381.9,624.0 1383.9,627.1 1385.9,630.2 1387.8,633.4 1389.8,636.6 1391.8,639.9 1393.8,643.3 1395.7,646.7 1397.7,650.2 1399.7,653.8 1401.7,657.4 1403.7,661.1 1405.6,664.9 1407.6,668.7 1409.6,672.6 1411.6,676.6 1413.5,680.6 1415.5,684.7 1417.5,688.8 1419.5,693.0 1421.4,697.3 1423.4,701.6 1425.4,706.0 1427.4,710.5 1429.4,715.0 1431.3,719.6 1433.3,724.3 1433.3,724.3 1433.3,724.3 1144.6,724.3" fill="url(#pf724.3)"/><polyline points="1144.6,724.3 1146.6,719.6 1148.6,715.0 1150.5,710.5 1152.5,706.0 1154.5,701.6 1156.5,697.3 1158.4,693.0 1160.4,688.8 1162.4,684.7 1164.4,680.6 1166.4,676.6 1168.3,672.6 1170.3,668.7 1172.3,664.9 1174.3,661.1 1176.2,657.4 1178.2,653.8 1180.2,650.2 1182.2,646.7 1184.1,643.3 1186.1,639.9 1188.1,636.6 1190.1,633.4 1192.1,630.2 1194.0,627.1 1196.0,624.0 1198.0,621.0 1200.0,618.1 1201.9,615.2 1203.9,612.4 1205.9,609.7 1207.9,607.0 1209.9,604.4 1211.8,601.9 1213.8,599.4 1215.8,597.0 1217.8,594.7 1219.7,592.4 1221.7,590.2 1223.7,588.0 1225.7,585.9 1227.7,583.9 1229.6,581.9 1231.6,580.0 1233.6,578.2 1235.6,576.4 1237.5,574.7 1239.5,573.1 1241.5,571.5 1243.5,570.0 1245.5,568.6 1247.4,567.2 1249.4,565.9 1251.4,564.6 1253.4,563.4 1255.3,562.3 1257.3,561.2 1259.3,560.2 1261.3,559.3 1263.2,558.4 1265.2,557.6 1267.2,556.9 1269.2,556.2 1271.2,555.6 1273.1,555.1 1275.1,554.6 1277.1,554.2 1279.1,553.8 1281.0,553.5 1283.0,553.3 1285.0,553.1 1287.0,553.0 1289.0,553.0 1290.9,553.0 1292.9,553.1 1294.9,553.3 1296.9,553.5 1298.8,553.8 1300.8,554.2 1302.8,554.6 1304.8,555.1 1306.8,555.6 1308.7,556.2 1310.7,556.9 1312.7,557.6 1314.7,558.4 1316.6,559.3 1318.6,560.2 1320.6,561.2 1322.6,562.3 1324.6,563.4 1326.5,564.6 1328.5,565.9 1330.5,567.2 1332.5,568.6 1334.4,570.0 1336.4,571.5 1338.4,573.1 1340.4,574.7 1342.3,576.4 1344.3,578.2 1346.3,580.0 1348.3,581.9 1350.3,583.9 1352.2,585.9 1354.2,588.0 1356.2,590.2 1358.2,592.4 1360.1,594.7 1362.1,597.0 1364.1,599.4 1366.1,601.9 1368.1,604.4 1370.0,607.0 1372.0,609.7 1374.0,612.4 1376.0,615.2 1377.9,618.1 1379.9,621.0 1381.9,624.0 1383.9,627.1 1385.9,630.2 1387.8,633.4 1389.8,636.6 1391.8,639.9 1393.8,643.3 1395.7,646.7 1397.7,650.2 1399.7,653.8 1401.7,657.4 1403.7,661.1 1405.6,664.9 1407.6,668.7 1409.6,672.6 1411.6,676.6 1413.5,680.6 1415.5,684.7 1417.5,688.8 1419.5,693.0 1421.4,697.3 1423.4,701.6 1425.4,706.0 1427.4,710.5 1429.4,715.0 1431.3,719.6 1433.3,724.3 1433.3,724.3" fill="none" stroke="#7a30cc" stroke-width="2.6"/><path d="M1144.6 688.2 H1160.8 V724.3" fill="none" stroke="#e00000" stroke-width="2" stroke-dasharray="5 3"/><line x1="1144.6" y1="543.0" x2="1144.6" y2="724.3" stroke="#333" stroke-width="1.5"/><line x1="1136.6" y1="724.3" x2="1461.0" y2="724.3" stroke="#333" stroke-width="1.5"/><line x1="1136.6" y1="724.3" x2="1148.6" y2="724.3" stroke="#333" stroke-width="1"/><line x1="1140.6" y1="718.3" x2="1148.6" y2="718.3" stroke="#333" stroke-width="1"/><line x1="1140.6" y1="712.3" x2="1148.6" y2="712.3" stroke="#333" stroke-width="1"/><line x1="1140.6" y1="706.3" x2="1148.6" y2="706.3" stroke="#333" stroke-width="1"/><line x1="1140.6" y1="700.3" x2="1148.6" y2="700.3" stroke="#333" stroke-width="1"/><line x1="1136.6" y1="694.2" x2="1148.6" y2="694.2" stroke="#333" stroke-width="1"/><line x1="1140.6" y1="688.2" x2="1148.6" y2="688.2" stroke="#333" stroke-width="1"/><line x1="1140.6" y1="682.2" x2="1148.6" y2="682.2" stroke="#333" stroke-width="1"/><line x1="1140.6" y1="676.2" x2="1148.6" y2="676.2" stroke="#333" stroke-width="1"/><line x1="1140.6" y1="670.2" x2="1148.6" y2="670.2" stroke="#333" stroke-width="1"/><line x1="1136.6" y1="664.2" x2="1148.6" y2="664.2" stroke="#333" stroke-width="1"/><line x1="1140.6" y1="658.2" x2="1148.6" y2="658.2" stroke="#333" stroke-width="1"/><line x1="1140.6" y1="652.2" x2="1148.6" y2="652.2" stroke="#333" stroke-width="1"/><line x1="1140.6" y1="646.2" x2="1148.6" y2="646.2" stroke="#333" stroke-width="1"/><line x1="1140.6" y1="640.2" x2="1148.6" y2="640.2" stroke="#333" stroke-width="1"/><line x1="1136.6" y1="634.1" x2="1148.6" y2="634.1" stroke="#333" stroke-width="1"/><line x1="1140.6" y1="628.1" x2="1148.6" y2="628.1" stroke="#333" stroke-width="1"/><line x1="1140.6" y1="622.1" x2="1148.6" y2="622.1" stroke="#333" stroke-width="1"/><line x1="1140.6" y1="616.1" x2="1148.6" y2="616.1" stroke="#333" stroke-width="1"/><line x1="1140.6" y1="610.1" x2="1148.6" y2="610.1" stroke="#333" stroke-width="1"/><line x1="1136.6" y1="604.1" x2="1148.6" y2="604.1" stroke="#333" stroke-width="1"/><line x1="1140.6" y1="598.1" x2="1148.6" y2="598.1" stroke="#333" stroke-width="1"/><line x1="1140.6" y1="592.1" x2="1148.6" y2="592.1" stroke="#333" stroke-width="1"/><line x1="1140.6" y1="586.1" x2="1148.6" y2="586.1" stroke="#333" stroke-width="1"/><line x1="1140.6" y1="580.1" x2="1148.6" y2="580.1" stroke="#333" stroke-width="1"/><line x1="1136.6" y1="574.0" x2="1148.6" y2="574.0" stroke="#333" stroke-width="1"/><line x1="1140.6" y1="568.0" x2="1148.6" y2="568.0" stroke="#333" stroke-width="1"/><line x1="1140.6" y1="562.0" x2="1148.6" y2="562.0" stroke="#333" stroke-width="1"/><line x1="1140.6" y1="556.0" x2="1148.6" y2="556.0" stroke="#333" stroke-width="1"/><line x1="1140.6" y1="550.0" x2="1148.6" y2="550.0" stroke="#333" stroke-width="1"/><line x1="1136.6" y1="544.0" x2="1148.6" y2="544.0" stroke="#333" stroke-width="1"/><line x1="1144.6" y1="720.3" x2="1144.6" y2="732.3" stroke="#333" stroke-width="1"/><line x1="1164.4" y1="720.3" x2="1164.4" y2="728.3" stroke="#333" stroke-width="1"/><line x1="1184.1" y1="720.3" x2="1184.1" y2="732.3" stroke="#333" stroke-width="1"/><line x1="1203.9" y1="720.3" x2="1203.9" y2="728.3" stroke="#333" stroke-width="1"/><line x1="1223.7" y1="720.3" x2="1223.7" y2="732.3" stroke="#333" stroke-width="1"/><line x1="1243.5" y1="720.3" x2="1243.5" y2="728.3" stroke="#333" stroke-width="1"/><line x1="1263.2" y1="720.3" x2="1263.2" y2="732.3" stroke="#333" stroke-width="1"/><line x1="1283.0" y1="720.3" x2="1283.0" y2="728.3" stroke="#333" stroke-width="1"/><line x1="1302.8" y1="720.3" x2="1302.8" y2="732.3" stroke="#333" stroke-width="1"/><line x1="1322.6" y1="720.3" x2="1322.6" y2="728.3" stroke="#333" stroke-width="1"/><line x1="1342.3" y1="720.3" x2="1342.3" y2="732.3" stroke="#333" stroke-width="1"/><line x1="1362.1" y1="720.3" x2="1362.1" y2="728.3" stroke="#333" stroke-width="1"/><line x1="1381.9" y1="720.3" x2="1381.9" y2="732.3" stroke="#333" stroke-width="1"/><line x1="1401.7" y1="720.3" x2="1401.7" y2="728.3" stroke="#333" stroke-width="1"/><line x1="1421.4" y1="720.3" x2="1421.4" y2="732.3" stroke="#333" stroke-width="1"/><line x1="1441.2" y1="720.3" x2="1441.2" y2="728.3" stroke="#333" stroke-width="1"/><line x1="1461.0" y1="720.3" x2="1461.0" y2="732.3" stroke="#333" stroke-width="1"/></svg>
<div class="t" style="left:1128.5px;top:717.8px;font-size:11px;line-height:13px;color:#222;">0</div>
<div class="t" style="left:1122.4px;top:687.8px;font-size:11px;line-height:13px;color:#222;">10</div>
<div class="t" style="left:1122.4px;top:657.7px;font-size:11px;line-height:13px;color:#222;">20</div>
<div class="t" style="left:1122.4px;top:627.6px;font-size:11px;line-height:13px;color:#222;">30</div>
<div class="t" style="left:1122.4px;top:597.6px;font-size:11px;line-height:13px;color:#222;">40</div>
<div class="t" style="left:1122.4px;top:567.5px;font-size:11px;line-height:13px;color:#222;">50</div>
<div class="t" style="left:1122.4px;top:537.5px;font-size:11px;line-height:13px;color:#222;">60</div>
<div class="t" style="left:1141.5px;top:735.3px;font-size:11px;line-height:13px;color:#222;">0</div>
<div class="t" style="left:1175.0px;top:735.3px;font-size:11px;line-height:13px;color:#222;">200</div>
<div class="t" style="left:1214.5px;top:735.3px;font-size:11px;line-height:13px;color:#222;">400</div>
<div class="t" style="left:1254.1px;top:735.3px;font-size:11px;line-height:13px;color:#222;">600</div>
<div class="t" style="left:1293.6px;top:735.3px;font-size:11px;line-height:13px;color:#222;">800</div>
<div class="t" style="left:1330.1px;top:735.3px;font-size:11px;line-height:13px;color:#222;">1000</div>
<div class="t" style="left:1369.7px;top:735.3px;font-size:11px;line-height:13px;color:#222;">1200</div>
<div class="t" style="left:1409.2px;top:735.3px;font-size:11px;line-height:13px;color:#222;">1400</div>
<div class="t" style="left:1448.8px;top:735.3px;font-size:11px;line-height:13px;color:#222;">1600</div>
<div class="t" style="left:1130.0px;top:510.0px;font-size:15px;line-height:18px;color:#111;transform:scaleX(1.061);transform-origin:0 0;">Αντοχή Πεσσού Εκτός Επιπέδου VRd2-N</div>
<div class="t" style="left:1281.1px;top:763.0px;font-size:17px;line-height:20px;color:#111;transform:scaleX(1.014);transform-origin:0 0;">N(kN)</div>
<div class="t" style="left:1062.2px;top:623.7px;font-size:17px;line-height:20px;color:#111;transform:rotate(-90deg);transform-origin:37.3px 10px">VRd2(kN)</div>
<svg style="left:0;top:0" width="1765" height="1078" viewBox="0 0 1765 1078"><rect x="1354.5" y="539" width="116.5" height="72" fill="#ffffff" fill-opacity="0.72" stroke="#e0e0e0" stroke-width="1"/><line x1="1363.5" y1="556" x2="1393.5" y2="556" stroke="#2f5fd0" stroke-width="2"/><rect x="1364.5" y="570" width="29" height="10" fill="#d8b4fa" stroke="#7a30cc" stroke-width="2"/><line x1="1363.5" y1="594" x2="1393.5" y2="594" stroke="#e00000" stroke-width="2" stroke-dasharray="5 3"/></svg>
<div class="t" style="left:1397.5px;top:549.5px;font-size:11px;line-height:13px;color:#222;">VMud3 Οριζ.</div>
<div class="t" style="left:1397.5px;top:568.5px;font-size:11px;line-height:13px;color:#222;">Vmin</div>
<div class="t" style="left:1397.5px;top:587.5px;font-size:11px;line-height:13px;color:#222;">Sd</div>
<div class="a" style="left:1065px;top:792px;width:416px;height:3px;background:#e6e6e6;"></div>
<div class="a" style="left:1481px;top:134px;width:284px;height:922px;background:#e6e6e6;"></div>
<div class="a" style="left:1481px;top:134px;width:1px;height:922px;background:#b4b4b4;"></div>
<div class="t" style="left:1493.7px;top:146.0px;font-size:21px;line-height:25px;color:#3b3b3b;">Επιλεγμένα Στοιχεία</div>
<svg style="left:1757px;top:142px;" width="8" height="10" viewBox="0 0 8 10"><path d="M8 0 L1 5 L8 10 Z" fill="#777"/></svg>
<div class="a" style="left:1489px;top:180px;width:276px;height:28px;background:#f0f0f0;"></div>
<svg style="left:1500px;top:185px;" width="17" height="15" viewBox="0 0 17 15"><path d="M1 1 L1 11 L3.5 8.5 L5.5 13 L7 12.3 L5 8 L8.5 8 Z" fill="#111"/><rect x="8.5" y="6.5" width="8" height="8" fill="#fff" stroke="#111"/><path d="M10.5 10.5 H14.5 M12.5 8.5 V12.5" stroke="#111"/></svg>
<div class="a" style="left:1524px;top:184px;width:1px;height:19px;background:#d0d0d0;"></div>
<div class="a" style="left:1652px;top:184px;width:1px;height:19px;background:#d0d0d0;"></div>
<div class="a" style="left:1682px;top:184px;width:1px;height:19px;background:#d0d0d0;"></div>
<div class="a" style="left:1734px;top:184px;width:1px;height:19px;background:#d0d0d0;"></div>
<div class="a" style="left:1530px;top:182px;width:115px;height:22px;background:#fff;border:1px solid #c8c8c8"></div>
<div class="t" style="left:1534.4px;top:186.5px;font-size:12px;line-height:14px;color:#333;transform:scaleX(1.030);transform-origin:0 0;">1 Γραμμικά Στοιχεί</div>
<svg style="left:1636px;top:192px;" width="6" height="4" viewBox="0 0 6 4"><path d="M0 0 H6 L3 3 Z" fill="#666"/></svg>
<div class="t" style="left:1659.6px;top:183.5px;font-size:11px;line-height:13px;color:#111;transform:scaleX(0.903);transform-origin:0 0;font-weight:bold;">img</div>
<svg style="left:1688px;top:188px;" width="17" height="17" viewBox="0 0 17 17"><circle cx="8" cy="8" r="7" fill="#dce8f8" stroke="#666" stroke-width="1"/><path d="M8 2.5 V13.5 M2.5 8 H13.5" stroke="#1a3a8a" stroke-width="1.5"/><path d="M16 16 L13 13" stroke="#f09a20" stroke-width="2"/></svg>
<svg style="left:1710px;top:188px;" width="17" height="17" viewBox="0 0 17 17"><rect x="0.5" y="0.5" width="12" height="10" fill="none" stroke="#2a4a7a" stroke-width="1"/><circle cx="11" cy="11" r="3.5" fill="#e8f0fa" stroke="#556" stroke-width="1"/><path d="M13.5 13.5 L16 16" stroke="#d89a20" stroke-width="2.5"/></svg>
<div class="a" style="left:1739px;top:183px;width:21px;height:22px;background:#c8c8c8;"></div>
<svg style="left:1742px;top:186px;" width="16" height="16" viewBox="0 0 16 16"><path d="M1 5 L5 1 L15 1 L11 5 Z" fill="#3a8af0"/><path d="M1 5 L5 1 L15 1 L15 11 L11 15 L1 15 Z" fill="none" stroke="#111" stroke-width="1.2"/><path d="M1 5 H11 V15 M11 5 L15 1 M5 1 V11 H15 M5 11 L1 15" stroke="#111" stroke-width="0.8" fill="none"/></svg>
<svg style="left:1761px;top:186px;" width="5" height="8" viewBox="0 0 5 8"><path d="M0 0 L4 4 L0 8" stroke="#888" fill="none"/></svg>
<div class="a" style="left:1489px;top:210px;width:276px;height:258px;background:#ffffff;"></div>
<svg style="left:0;top:0" width="1765" height="1078" viewBox="0 0 1765 1078"><rect x="1519.5" y="307.5" width="222" height="63.5" fill="none" stroke="#2a5af0" stroke-width="1.3"/><path d="M1630.7 275.5 V339.2 H1693.8" fill="none" stroke="#e81010" stroke-width="1.3"/><rect x="1706.5" y="236.5" width="40" height="39" fill="none" stroke="#2a5af0" stroke-width="1.3"/><line x1="1707" y1="276" x2="1716" y2="286" stroke="#e81010" stroke-width="1"/><line x1="1715" y1="276" x2="1724" y2="286" stroke="#e81010" stroke-width="1"/><line x1="1723" y1="276" x2="1732" y2="286" stroke="#e81010" stroke-width="1"/><line x1="1731" y1="276" x2="1740" y2="286" stroke="#e81010" stroke-width="1"/><line x1="1739" y1="276" x2="1748" y2="286" stroke="#e81010" stroke-width="1"/><line x1="1747" y1="276" x2="1756" y2="286" stroke="#e81010" stroke-width="1"/><text x="1725" y="264" text-anchor="middle" font-family="Liberation Sans" font-size="11" fill="#2a5af0">2</text><text x="1694" y="353" text-anchor="middle" font-family="Liberation Sans" font-size="14" fill="#e81010">3</text><text transform="translate(1634,271) rotate(90)" font-family="Liberation Sans" font-size="13" fill="#e81010">2</text></svg>
<div class="a" style="left:1489px;top:473px;width:266px;height:473px;background:#efefef;"></div>
<div class="a" style="left:1489px;top:473px;width:266px;height:17px;background:#e9e9e9;"></div>
<svg style="left:1494px;top:477.5px;" width="8" height="8" viewBox="0 0 8 8"><path d="M7 0.5 L7 7 L0.5 7 Z" fill="#777"/></svg>
<div class="t" style="left:1509.6px;top:474.5px;font-size:12px;line-height:14px;color:#333;font-weight:bold;transform:scaleX(1.023);transform-origin:0 0;">Ονοματολογία - Συνδεσμολογία</div>
<div class="a" style="left:1506px;top:490px;width:249px;height:16px;background:#fafafa;"></div>
<div class="a" style="left:1506px;top:506px;width:249px;height:1px;background:#e8e8e8;"></div>
<div class="a" style="left:1630px;top:490px;width:1px;height:16px;background:#e8e8e8;"></div>
<div class="t" style="left:1509.6px;top:491.5px;font-size:12px;line-height:14px;color:#222;">Όνομα</div>
<div class="t" style="left:1635.0px;top:491.5px;font-size:12px;line-height:14px;color:#222;">T5</div>
<div class="a" style="left:1506px;top:507px;width:249px;height:16px;background:#fafafa;"></div>
<div class="a" style="left:1506px;top:523px;width:249px;height:1px;background:#e8e8e8;"></div>
<div class="a" style="left:1630px;top:507px;width:1px;height:16px;background:#e8e8e8;"></div>
<div class="t" style="left:1509.6px;top:508.5px;font-size:12px;line-height:14px;color:#222;">Είδος</div>
<div class="t" style="left:1635.0px;top:508.5px;font-size:12px;line-height:14px;color:#222;transform:scaleX(0.951);transform-origin:0 0;">Πεσσός Φέρουσας Τ...</div>
<div class="a" style="left:1506px;top:524px;width:249px;height:16px;background:#fafafa;"></div>
<div class="a" style="left:1506px;top:540px;width:249px;height:1px;background:#e8e8e8;"></div>
<div class="a" style="left:1630px;top:524px;width:1px;height:16px;background:#e8e8e8;"></div>
<div class="t" style="left:1509.6px;top:525.5px;font-size:12px;line-height:14px;color:#222;transform:scaleX(0.972);transform-origin:0 0;">Κατηγορία Στοιχείου</div>
<div class="t" style="left:1635.0px;top:525.5px;font-size:12px;line-height:14px;color:#222;">Υφιστάμενο</div>
<div class="a" style="left:1506px;top:541px;width:249px;height:16px;background:#fafafa;"></div>
<div class="a" style="left:1506px;top:557px;width:249px;height:1px;background:#e8e8e8;"></div>
<div class="a" style="left:1630px;top:541px;width:1px;height:16px;background:#e8e8e8;"></div>
<div class="t" style="left:1509.6px;top:542.5px;font-size:12px;line-height:14px;color:#222;">Στάθμη</div>
<div class="t" style="left:1635.0px;top:542.5px;font-size:12px;line-height:14px;color:#222;">Σ1</div>
<div class="a" style="left:1506px;top:558px;width:249px;height:16px;background:#fafafa;"></div>
<div class="a" style="left:1506px;top:574px;width:249px;height:1px;background:#e8e8e8;"></div>
<div class="a" style="left:1630px;top:558px;width:1px;height:16px;background:#e8e8e8;"></div>
<div class="t" style="left:1509.6px;top:559.5px;font-size:12px;line-height:14px;color:#a8a8a8;">Κόμβος Αρχής</div>
<div class="t" style="left:1635.0px;top:559.5px;font-size:12px;line-height:14px;color:#a8a8a8;">K5-Σ1</div>
<div class="a" style="left:1506px;top:575px;width:249px;height:16px;background:#fafafa;"></div>
<div class="a" style="left:1506px;top:591px;width:249px;height:1px;background:#e8e8e8;"></div>
<div class="a" style="left:1630px;top:575px;width:1px;height:16px;background:#e8e8e8;"></div>
<div class="t" style="left:1509.6px;top:576.5px;font-size:12px;line-height:14px;color:#a8a8a8;">Κόμβος Τέλους</div>
<div class="t" style="left:1635.0px;top:576.5px;font-size:12px;line-height:14px;color:#a8a8a8;">K5-θ</div>
<div class="a" style="left:1506px;top:592px;width:249px;height:16px;background:#fafafa;"></div>
<div class="a" style="left:1506px;top:608px;width:249px;height:1px;background:#e8e8e8;"></div>
<div class="a" style="left:1630px;top:592px;width:1px;height:16px;background:#e8e8e8;"></div>
<div class="t" style="left:1509.6px;top:593.5px;font-size:12px;line-height:14px;color:#a8a8a8;">Δευτερεύον στοιχείο</div>
<div class="t" style="left:1635.0px;top:593.5px;font-size:12px;line-height:14px;color:#a8a8a8;">ΟΧΙ</div>
<div class="a" style="left:1489px;top:609px;width:266px;height:17px;background:#e9e9e9;"></div>
<svg style="left:1494px;top:613.5px;" width="8" height="8" viewBox="0 0 8 8"><path d="M7 0.5 L7 7 L0.5 7 Z" fill="#777"/></svg>
<div class="t" style="left:1509.6px;top:610.5px;font-size:12px;line-height:14px;color:#333;font-weight:bold;transform:scaleX(1.018);transform-origin:0 0;">Διατομή - Υλικό</div>
<div class="a" style="left:1506px;top:626px;width:249px;height:16px;background:#fafafa;"></div>
<div class="a" style="left:1506px;top:642px;width:249px;height:1px;background:#e8e8e8;"></div>
<div class="a" style="left:1630px;top:626px;width:1px;height:16px;background:#e8e8e8;"></div>
<div class="a" style="left:1506px;top:626px;width:124px;height:16px;background:#ececec;"></div>
<div class="t" style="left:1509.6px;top:627.5px;font-size:12px;line-height:14px;color:#222;">Διατομή</div>
<div class="t" style="left:1635.0px;top:627.5px;font-size:12px;line-height:14px;color:#222;transform:scaleX(0.860);transform-origin:0 0;">Masonry:T5-Σ1</div>
<div class="a" style="left:1736px;top:626px;width:18px;height:16px;background:#e8e8e8;border:1px solid #c8c8c8"></div>
<div class="t" style="left:1739.0px;top:629.0px;font-size:11px;line-height:13px;color:#333;">...</div>
<div class="a" style="left:1506px;top:643px;width:249px;height:16px;background:#fafafa;"></div>
<div class="a" style="left:1506px;top:659px;width:249px;height:1px;background:#e8e8e8;"></div>
<div class="a" style="left:1630px;top:643px;width:1px;height:16px;background:#e8e8e8;"></div>
<div class="t" style="left:1509.6px;top:644.5px;font-size:12px;line-height:14px;color:#222;">Υλικό</div>
<div class="t" style="left:1635.0px;top:644.5px;font-size:12px;line-height:14px;color:#222;transform:scaleX(0.923);transform-origin:0 0;">Λαξευτή λιθοδομή (Α...</div>
<div class="a" style="left:1506px;top:660px;width:249px;height:16px;background:#fafafa;"></div>
<div class="a" style="left:1506px;top:676px;width:249px;height:1px;background:#e8e8e8;"></div>
<div class="a" style="left:1630px;top:660px;width:1px;height:16px;background:#e8e8e8;"></div>
<div class="t" style="left:1509.6px;top:661.5px;font-size:12px;line-height:14px;color:#a8a8a8;">Γωνία φ=</div>
<div class="t" style="left:1635.0px;top:661.5px;font-size:12px;line-height:14px;color:#a8a8a8;">-90 °</div>
<div class="a" style="left:1506px;top:677px;width:249px;height:16px;background:#fafafa;"></div>
<div class="a" style="left:1506px;top:693px;width:249px;height:1px;background:#e8e8e8;"></div>
<div class="a" style="left:1630px;top:677px;width:1px;height:16px;background:#e8e8e8;"></div>
<div class="t" style="left:1509.6px;top:678.5px;font-size:12px;line-height:14px;color:#222;">Στήριξη Πεσσού</div>
<div class="t" style="left:1635.0px;top:678.5px;font-size:12px;line-height:14px;color:#222;transform:scaleX(0.950);transform-origin:0 0;">στήριξη μόνο κάτω</div>
<div class="a" style="left:1506px;top:694px;width:249px;height:16px;background:#fafafa;"></div>
<div class="a" style="left:1506px;top:710px;width:249px;height:1px;background:#e8e8e8;"></div>
<div class="a" style="left:1630px;top:694px;width:1px;height:16px;background:#e8e8e8;"></div>
<div class="t" style="left:1509.6px;top:695.5px;font-size:12px;line-height:14px;color:#222;transform:scaleX(0.952);transform-origin:0 0;">Έλεγχος κάμψης εκτ...</div>
<div class="t" style="left:1635.0px;top:695.5px;font-size:12px;line-height:14px;color:#222;">ΝΑΙ</div>
<div class="a" style="left:1489px;top:711px;width:266px;height:17px;background:#e9e9e9;"></div>
<svg style="left:1511px;top:715.5px;" width="6" height="9" viewBox="0 0 6 9"><path d="M0.5 0.5 L5.5 4.5 L0.5 8.5 Z" fill="none" stroke="#999"/></svg>
<div class="a" style="left:1523px;top:713.5px;width:11px;height:11px;border:1px solid #999;background:#fff"></div>
<div class="t" style="left:1540.0px;top:712.5px;font-size:12px;line-height:14px;color:#333;font-weight:bold;transform:scaleX(1.030);transform-origin:0 0;">Τροποποίηση Αδρανειακών Μεγεθ...</div>
<div class="a" style="left:1489px;top:728px;width:266px;height:17px;background:#e9e9e9;"></div>
<svg style="left:1494px;top:732.5px;" width="8" height="8" viewBox="0 0 8 8"><path d="M7 0.5 L7 7 L0.5 7 Z" fill="#777"/></svg>
<div class="t" style="left:1509.6px;top:729.5px;font-size:12px;line-height:14px;color:#333;font-weight:bold;transform:scaleX(0.988);transform-origin:0 0;">Ιδιότητες Υλικών</div>
<div class="a" style="left:1506px;top:745px;width:249px;height:16px;background:#fafafa;"></div>
<div class="a" style="left:1506px;top:761px;width:249px;height:1px;background:#e8e8e8;"></div>
<div class="a" style="left:1630px;top:745px;width:1px;height:16px;background:#e8e8e8;"></div>
<div class="t" style="left:1509.6px;top:746.5px;font-size:12px;line-height:14px;color:#222;transform:scaleX(0.972);transform-origin:0 0;">Στάθμη αξιοπιστίας ...</div>
<div class="t" style="left:1635.0px;top:746.5px;font-size:12px;line-height:14px;color:#222;transform:scaleX(0.961);transform-origin:0 0;">ΣΑΔ2 - Ικανοποιητική ...</div>
<div class="a" style="left:1489px;top:762px;width:266px;height:17px;background:#e9e9e9;"></div>
<svg style="left:1511px;top:766.5px;" width="6" height="9" viewBox="0 0 6 9"><path d="M0.5 0.5 L5.5 4.5 L0.5 8.5 Z" fill="none" stroke="#999"/></svg>
<div class="t" style="left:1526.0px;top:763.5px;font-size:12px;line-height:14px;color:#333;font-weight:bold;transform:scaleX(0.959);transform-origin:0 0;">Συντελεστές Ασφάλειας</div>
<div class="a" style="left:1489px;top:779px;width:266px;height:17px;background:#e9e9e9;"></div>
<svg style="left:1494px;top:783.5px;" width="8" height="8" viewBox="0 0 8 8"><path d="M7 0.5 L7 7 L0.5 7 Z" fill="#777"/></svg>
<div class="t" style="left:1509.6px;top:780.5px;font-size:12px;line-height:14px;color:#333;font-weight:bold;transform:scaleX(1.047);transform-origin:0 0;">Στερεοί Βραχίονες αρχής σε mm</div>
<div class="a" style="left:1506px;top:796px;width:249px;height:16px;background:#fafafa;"></div>
<div class="a" style="left:1506px;top:812px;width:249px;height:1px;background:#e8e8e8;"></div>
<div class="a" style="left:1630px;top:796px;width:1px;height:16px;background:#e8e8e8;"></div>
<div class="t" style="left:1509.6px;top:797.5px;font-size:12px;line-height:14px;color:#a8a8a8;">Rax</div>
<div class="t" style="left:1635.0px;top:797.5px;font-size:12px;line-height:14px;color:#a8a8a8;">0</div>
<div class="a" style="left:1506px;top:813px;width:249px;height:16px;background:#fafafa;"></div>
<div class="a" style="left:1506px;top:829px;width:249px;height:1px;background:#e8e8e8;"></div>
<div class="a" style="left:1630px;top:813px;width:1px;height:16px;background:#e8e8e8;"></div>
<div class="t" style="left:1509.6px;top:814.5px;font-size:12px;line-height:14px;color:#a8a8a8;">Ray</div>
<div class="t" style="left:1635.0px;top:814.5px;font-size:12px;line-height:14px;color:#a8a8a8;">0</div>
<div class="a" style="left:1506px;top:830px;width:249px;height:16px;background:#fafafa;"></div>
<div class="a" style="left:1506px;top:846px;width:249px;height:1px;background:#e8e8e8;"></div>
<div class="a" style="left:1630px;top:830px;width:1px;height:16px;background:#e8e8e8;"></div>
<div class="t" style="left:1509.6px;top:831.5px;font-size:12px;line-height:14px;color:#a8a8a8;">Raz2</div>
<div class="t" style="left:1635.0px;top:831.5px;font-size:12px;line-height:14px;color:#a8a8a8;">0</div>
<div class="a" style="left:1506px;top:847px;width:249px;height:16px;background:#fafafa;"></div>
<div class="a" style="left:1506px;top:863px;width:249px;height:1px;background:#e8e8e8;"></div>
<div class="a" style="left:1630px;top:847px;width:1px;height:16px;background:#e8e8e8;"></div>
<div class="t" style="left:1509.6px;top:848.5px;font-size:12px;line-height:14px;color:#a8a8a8;">Raz3</div>
<div class="t" style="left:1635.0px;top:848.5px;font-size:12px;line-height:14px;color:#a8a8a8;">1000</div>
<div class="a" style="left:1489px;top:864px;width:266px;height:17px;background:#e9e9e9;"></div>
<svg style="left:1494px;top:868.5px;" width="8" height="8" viewBox="0 0 8 8"><path d="M7 0.5 L7 7 L0.5 7 Z" fill="#777"/></svg>
<div class="t" style="left:1509.6px;top:865.5px;font-size:12px;line-height:14px;color:#333;font-weight:bold;transform:scaleX(1.054);transform-origin:0 0;">Στερεοί Βραχίονες τέλους σε mm</div>
<div class="a" style="left:1506px;top:881px;width:249px;height:16px;background:#fafafa;"></div>
<div class="a" style="left:1506px;top:897px;width:249px;height:1px;background:#e8e8e8;"></div>
<div class="a" style="left:1630px;top:881px;width:1px;height:16px;background:#e8e8e8;"></div>
<div class="t" style="left:1509.6px;top:882.5px;font-size:12px;line-height:14px;color:#a8a8a8;">Rtx</div>
<div class="t" style="left:1635.0px;top:882.5px;font-size:12px;line-height:14px;color:#a8a8a8;">0</div>
<div class="a" style="left:1506px;top:898px;width:249px;height:16px;background:#fafafa;"></div>
<div class="a" style="left:1506px;top:914px;width:249px;height:1px;background:#e8e8e8;"></div>
<div class="a" style="left:1630px;top:898px;width:1px;height:16px;background:#e8e8e8;"></div>
<div class="t" style="left:1509.6px;top:899.5px;font-size:12px;line-height:14px;color:#a8a8a8;">Rty</div>
<div class="t" style="left:1635.0px;top:899.5px;font-size:12px;line-height:14px;color:#a8a8a8;">0</div>
<div class="a" style="left:1506px;top:915px;width:249px;height:16px;background:#fafafa;"></div>
<div class="a" style="left:1506px;top:931px;width:249px;height:1px;background:#e8e8e8;"></div>
<div class="a" style="left:1630px;top:915px;width:1px;height:16px;background:#e8e8e8;"></div>
<div class="t" style="left:1509.6px;top:916.5px;font-size:12px;line-height:14px;color:#a8a8a8;">Rtz2</div>
<div class="t" style="left:1635.0px;top:916.5px;font-size:12px;line-height:14px;color:#a8a8a8;">0</div>
<div class="a" style="left:1506px;top:932px;width:249px;height:16px;background:#fafafa;"></div>
<div class="a" style="left:1506px;top:948px;width:249px;height:1px;background:#e8e8e8;"></div>
<div class="a" style="left:1630px;top:932px;width:1px;height:16px;background:#e8e8e8;"></div>
<div class="t" style="left:1509.6px;top:933.5px;font-size:12px;line-height:14px;color:#a8a8a8;">Rtz3</div>
<div class="t" style="left:1635.0px;top:933.5px;font-size:12px;line-height:14px;color:#a8a8a8;">1000</div>
<div class="a" style="left:1489px;top:950px;width:266px;height:1px;background:#d8d8d8;"></div>
<div class="a" style="left:1489px;top:951px;width:266px;height:62px;background:#f0f0f0;"></div>
<div class="t" style="left:1493.0px;top:954.0px;font-size:12px;line-height:14px;color:#333;font-weight:bold;transform:scaleX(1.122);transform-origin:0 0;">Διατομή</div>
<div class="t" style="left:1493.0px;top:969.0px;font-size:12px;line-height:14px;color:#555;transform:scaleX(0.968);transform-origin:0 0;">Διατομή επιλεγμένων στοιχείων</div>
<div class="a" style="left:1489px;top:1013px;width:276px;height:9px;background:#d4d4d4;"></div>
<div class="a" style="left:1600px;top:1016px;width:3px;height:3px;background:#aaa;"></div>
<div class="a" style="left:1606px;top:1016px;width:3px;height:3px;background:#aaa;"></div>
<div class="a" style="left:1612px;top:1016px;width:3px;height:3px;background:#aaa;"></div>
<div class="a" style="left:1618px;top:1016px;width:3px;height:3px;background:#aaa;"></div>
<div class="a" style="left:1624px;top:1016px;width:3px;height:3px;background:#aaa;"></div>
<div class="a" style="left:1630px;top:1016px;width:3px;height:3px;background:#aaa;"></div>
<div class="a" style="left:1636px;top:1016px;width:3px;height:3px;background:#aaa;"></div>
<div class="a" style="left:1642px;top:1016px;width:3px;height:3px;background:#aaa;"></div>
<div class="a" style="left:1648px;top:1016px;width:3px;height:3px;background:#aaa;"></div>
<div class="a" style="left:1654px;top:1016px;width:3px;height:3px;background:#aaa;"></div>
<div class="a" style="left:1489px;top:1022px;width:276px;height:34px;background:#f0f0f0;"></div>
<div class="a" style="left:1489px;top:1027px;width:23px;height:28px;background:#c8c8c8;"></div>
<svg style="left:1492px;top:1032px;" width="16" height="16" viewBox="0 0 16 16"><text x="8" y="14" text-anchor="middle" font-family="Liberation Serif" font-weight="bold" font-size="16" fill="#e8c800">i</text></svg>
<svg style="left:1517px;top:1032px;" width="16" height="16" viewBox="0 0 16 16"><path d="M2 5 L8 2 L14 5 L8 8 Z M2 8 L8 11 L14 8 M2 11 L8 14 L14 11" stroke="#5a7aa0" fill="none" stroke-width="1.2"/></svg>
<svg style="left:1544px;top:1032px;" width="16" height="16" viewBox="0 0 16 16"><rect x="1" y="5" width="11" height="10" fill="#fff" stroke="#111"/><path d="M2 14 L11 6 M4 14 L11 9" stroke="#555"/><path d="M10 1 V8 M7 4.5 H14" stroke="#20a020" stroke-width="2"/></svg>
<svg style="left:1570px;top:1032px;" width="16" height="16" viewBox="0 0 16 16"><rect x="1" y="5" width="11" height="10" fill="#fff" stroke="#111"/><circle cx="8" cy="8" r="3" fill="none" stroke="#e02020" stroke-width="1.5"/><path d="M10 1 V8 M7 4.5 H14" stroke="#20a020" stroke-width="2"/></svg>
<svg style="left:1596px;top:1032px;" width="16" height="16" viewBox="0 0 16 16"><path d="M1 1 V15 H15" stroke="#111" fill="none"/><path d="M2 6 C6 8, 9 13, 14 14" stroke="#a020a0" fill="none"/><path d="M2 4 C6 6, 9 10, 14 12" stroke="#2040c0" fill="none"/></svg>
<svg style="left:1621px;top:1032px;" width="16" height="16" viewBox="0 0 16 16"><path d="M1 1 V15 H15" stroke="#111" fill="none"/><rect x="3" y="8" width="2" height="7" fill="#e02020"/><rect x="6" y="4" width="2" height="11" fill="#20a020"/><rect x="9" y="6" width="2" height="9" fill="#e0a020"/><rect x="12" y="10" width="2" height="5" fill="#2040e0"/></svg>
<svg style="left:1648px;top:1032px;" width="16" height="16" viewBox="0 0 16 16"><text x="8" y="8" text-anchor="middle" font-family="Liberation Sans" font-weight="bold" font-size="8" fill="#1f5aa0">CR</text><rect x="2" y="10" width="2.5" height="5" fill="#00e0ff"/><rect x="5" y="10" width="2.5" height="5" fill="#30c030"/><rect x="8" y="10" width="2.5" height="5" fill="#ff7000"/><rect x="11" y="10" width="2.5" height="5" fill="#e000a0"/></svg>
<svg style="left:1674px;top:1032px;" width="16" height="16" viewBox="0 0 16 16"><path d="M3 1 H10 L13 4 V15 H3 Z" fill="#fff" stroke="#4a6ab0"/><rect x="5" y="8" width="6" height="5" fill="#8ab0e0"/></svg>
<svg style="left:1700px;top:1032px;" width="16" height="16" viewBox="0 0 16 16"><rect x="2" y="1" width="12" height="14" fill="#fff" stroke="#111"/><path d="M4 4 H8 M4 7 H8 M4 10 H12" stroke="#555"/><rect x="9" y="3" width="3" height="4" fill="#4060c0"/></svg>
<svg style="left:1726px;top:1032px;" width="16" height="16" viewBox="0 0 16 16"><path d="M8 1 L14 4.5 V11.5 L8 15 L2 11.5 V4.5 Z" fill="#30c0f0"/><path d="M8 1 L14 4.5 L8 8 Z" fill="#f04040"/><path d="M14 4.5 V11.5 L8 8 Z" fill="#f0e020"/><path d="M8 15 L2 11.5 L8 8 Z" fill="#30c030"/><path d="M2 4.5 L8 1 L8 8 Z" fill="#c040e0"/><path d="M14 11.5 L8 15 L8 8Z" fill="#80e040"/></svg>
<div class="t" style="left:1754.0px;top:1029.0px;font-size:12px;line-height:14px;color:#777;">»</div>
<div class="a" style="left:203px;top:795px;width:1278px;height:261px;background:#e6e6e6;"></div>
<div class="t" style="left:208.4px;top:808.5px;font-size:21px;line-height:25px;color:#3b3b3b;">Παράθυρο Εργασίας 1</div>
<svg style="left:1427px;top:816.5px;" width="10" height="6" viewBox="0 0 10 6"><path d="M0 0 H10 L5 5 Z" fill="#777"/></svg>
<svg style="left:1447.5px;top:813.5px;" width="8" height="12" viewBox="0 0 8 12"><path d="M1.5 1 H6.5 M2.5 1 V7 H5.5 V1 M0.5 7 H7.5 M4 7 V11.5" stroke="#666" stroke-width="1.2" fill="none"/></svg>
<svg style="left:1465px;top:814.5px;" width="10" height="10" viewBox="0 0 10 10"><path d="M1 1 L9 9 M9 1 L1 9" stroke="#666" stroke-width="1.4"/></svg>
<div class="a" style="left:203px;top:840px;width:1278px;height:24px;background:#f0f0f0;"></div>
<svg style="left:215px;top:843px;" width="15" height="16" viewBox="0 0 15 16"><path d="M1 1 H10 L14 5 V15 H1 Z" fill="#fff" stroke="#111"/><path d="M10 1 V5 H14" fill="none" stroke="#111"/><path d="M3 6 H9 M3 8.5 H12 M3 11 H12" stroke="#555"/></svg>
<div class="t" style="left:234.4px;top:844.5px;font-size:12px;line-height:14px;color:#333;transform:scaleX(1.016);transform-origin:0 0;">Κείμενο Αποτελεσμάτων</div>
<div class="a" style="left:376px;top:843px;width:1px;height:17px;background:#d0d0d0;"></div>
<svg style="left:385px;top:844px;" width="16" height="14" viewBox="0 0 16 14"><path d="M1 4 H12 M9 1 L12.5 4 L9 7 M15 10 H4 M7 7 L3.5 10 L7 13" stroke="#1a4ad8" stroke-width="2.2" fill="none"/></svg>
<div class="t" style="left:402.0px;top:844.5px;font-size:12px;line-height:14px;color:#333;">Συγχρονισμός</div>
<div class="a" style="left:487px;top:843px;width:1px;height:17px;background:#d0d0d0;"></div>
<div class="t" style="left:494.8px;top:844.5px;font-size:12px;line-height:14px;color:#333;transform:scaleX(0.959);transform-origin:0 0;">Επιλεγμένα</div>
<div class="a" style="left:560px;top:842px;width:30px;height:20px;background:#c8c8c8;"></div>
<div class="t" style="left:564.0px;top:844.5px;font-size:12px;line-height:14px;color:#333;">Όλα</div>
<div class="a" style="left:595px;top:843px;width:1px;height:17px;background:#d0d0d0;"></div>
<svg style="left:603px;top:843px;" width="12" height="16" viewBox="0 0 12 16"><text x="6" y="13" text-anchor="middle" font-family="Liberation Sans" font-weight="bold" font-size="15" fill="#f0c000" stroke="#333" stroke-width="0.8">?</text></svg>
<div class="t" style="left:620.6px;top:844.5px;font-size:12px;line-height:14px;color:#333;transform:scaleX(1.033);transform-origin:0 0;">Συντομογραφίες</div>
<div class="a" style="left:203px;top:864px;width:1278px;height:168px;background:#f0f0f0;border:1px solid #777;border-right:2px solid #555"></div>
<div class="a" style="left:1463px;top:866px;width:17px;height:165px;background:#f0f0f0;"></div>
<svg style="left:1466px;top:869px;" width="10" height="8" viewBox="0 0 10 8"><path d="M1 6 L5 2 L9 6" stroke="#555" stroke-width="1.3" fill="none"/></svg>
<svg style="left:1466px;top:1018px;" width="10" height="8" viewBox="0 0 10 8"><path d="M1 2 L5 6 L9 2" stroke="#555" stroke-width="1.3" fill="none"/></svg>
<div class="a" style="left:1465px;top:882px;width:14px;height:20px;background:#cdcdcd;"></div>
<svg style="left:0;top:0" width="1765" height="1078" viewBox="0 0 1765 1078"><rect x="203.6" y="865" width="622.6" height="99" fill="#f0f0f0"/><rect x="233.3" y="964" width="592.9000000000001" height="72" fill="#ffffff"/><line x1="203.6" y1="865" x2="826.2" y2="865" stroke="#222" stroke-width="1.4"/><line x1="203.6" y1="889" x2="826.2" y2="889" stroke="#222" stroke-width="1.4"/><line x1="333.3" y1="914" x2="826.2" y2="914" stroke="#222" stroke-width="1.4"/><line x1="203.6" y1="939" x2="826.2" y2="939" stroke="#222" stroke-width="1.4"/><line x1="203.6" y1="964" x2="826.2" y2="964" stroke="#222" stroke-width="1.6"/><line x1="203.6" y1="982" x2="826.2" y2="982" stroke="#555" stroke-width="1"/><line x1="203.6" y1="1000" x2="826.2" y2="1000" stroke="#555" stroke-width="1"/><line x1="203.6" y1="1018" x2="826.2" y2="1018" stroke="#555" stroke-width="1"/><line x1="203.6" y1="865" x2="203.6" y2="1031" stroke="#222" stroke-width="1.4"/><line x1="826.2" y1="865" x2="826.2" y2="1031" stroke="#222" stroke-width="1.4"/><line x1="233.3" y1="889" x2="233.3" y2="1031" stroke="#222" stroke-width="1.4"/><line x1="333.3" y1="889" x2="333.3" y2="1031" stroke="#222" stroke-width="1.4"/><line x1="603.6" y1="889" x2="603.6" y2="1031" stroke="#222" stroke-width="1.4"/><line x1="423.4" y1="914" x2="423.4" y2="1031" stroke="#222" stroke-width="1.4"/><line x1="513.6" y1="914" x2="513.6" y2="1031" stroke="#222" stroke-width="1.4"/><line x1="676.8" y1="914" x2="676.8" y2="1031" stroke="#222" stroke-width="1.4"/><line x1="744.6" y1="914" x2="744.6" y2="1031" stroke="#222" stroke-width="1.4"/><path d="M287 958 L292 947 L297 958 Z" fill="#111"/></svg>
<div class="t" style="left:304.0px;top:870.0px;font-size:12px;line-height:14px;color:#111;">Αποτελέσματα Ελέγχου Επάρκειας Αντοχής Υπέρθυρων Φέρουσας Τοιχοποιίας</div>
<div class="t" style="left:209.9px;top:907.0px;font-size:12px;line-height:14px;color:#111;">α/α</div>
<div class="t" style="left:265.4px;top:907.5px;font-size:12px;line-height:14px;color:#111;">Όνομα</div>
<div class="t" style="left:450.0px;top:895.0px;font-size:12px;line-height:14px;color:#111;">Κάμψη</div>
<div class="t" style="left:690.0px;top:895.0px;font-size:12px;line-height:14px;color:#111;">Διάτμηση</div>
<div class="t" style="left:362.7px;top:920.0px;font-size:12px;line-height:14px;color:#111;">MEd3</div>
<div class="t" style="left:452.5px;top:920.0px;font-size:12px;line-height:14px;color:#111;">MRd3</div>
<div class="t" style="left:541.6px;top:920.0px;font-size:12px;line-height:14px;color:#111;">CRm3</div>
<div class="t" style="left:625.5px;top:920.0px;font-size:12px;line-height:14px;color:#111;">VEd2</div>
<div class="t" style="left:695.7px;top:920.0px;font-size:12px;line-height:14px;color:#111;">VRd2</div>
<div class="t" style="left:770.4px;top:920.0px;font-size:12px;line-height:14px;color:#111;">CRv2</div>
<div class="t" style="left:223.6px;top:966.5px;font-size:12px;line-height:14px;color:#111;">1</div>
<div class="t" style="left:236.3px;top:966.5px;font-size:12px;line-height:14px;color:#111;">Δ1-Σ1</div>
<div class="t" style="left:642.8px;top:966.5px;font-size:12px;line-height:14px;color:#111;">61.17</div>
<div class="t" style="left:710.6px;top:966.5px;font-size:12px;line-height:14px;color:#111;">73.45</div>
<div class="t" style="left:798.8px;top:966.5px;font-size:12px;line-height:14px;color:#111;">0.83</div>
<svg style="left:747px;top:966.5px;" width="14" height="14" viewBox="0 0 14 14"><rect x="0.5" y="0.5" width="13" height="13" fill="#3cb84a" stroke="#2a8a30"/><path d="M3 7 L6 10 L11 3.5" stroke="#fff" stroke-width="2" fill="none"/></svg>
<div class="t" style="left:223.6px;top:984.5px;font-size:12px;line-height:14px;color:#111;">2</div>
<div class="t" style="left:236.3px;top:984.5px;font-size:12px;line-height:14px;color:#111;">Δ10-Σ1</div>
<div class="t" style="left:638.8px;top:984.5px;font-size:12px;line-height:14px;color:#111;">-78.96</div>
<div class="t" style="left:703.9px;top:984.5px;font-size:12px;line-height:14px;color:#111;">150.22</div>
<div class="t" style="left:798.8px;top:984.5px;font-size:12px;line-height:14px;color:#111;">0.53</div>
<svg style="left:747px;top:984.5px;" width="14" height="14" viewBox="0 0 14 14"><rect x="0.5" y="0.5" width="13" height="13" fill="#3cb84a" stroke="#2a8a30"/><path d="M3 7 L6 10 L11 3.5" stroke="#fff" stroke-width="2" fill="none"/></svg>
<div class="t" style="left:223.6px;top:1002.5px;font-size:12px;line-height:14px;color:#111;">3</div>
<div class="t" style="left:236.3px;top:1002.5px;font-size:12px;line-height:14px;color:#111;">Δ2-Σ1</div>
<div class="t" style="left:638.8px;top:1002.5px;font-size:12px;line-height:14px;color:#111;">-68.76</div>
<div class="t" style="left:710.6px;top:1002.5px;font-size:12px;line-height:14px;color:#111;">73.45</div>
<div class="t" style="left:798.8px;top:1002.5px;font-size:12px;line-height:14px;color:#111;">0.94</div>
<svg style="left:746px;top:1002.5px;" width="15" height="14" viewBox="0 0 15 14"><path d="M7.5 0.5 L14.5 13.5 H0.5 Z" fill="#f0c020" stroke="#c89000"/><path d="M7.5 4.5 V9.5 M7.5 11 V12.5" stroke="#222" stroke-width="1.5"/></svg>
<div class="t" style="left:223.6px;top:1020.5px;font-size:12px;line-height:14px;color:#111;">4</div>
<div class="t" style="left:236.3px;top:1020.5px;font-size:12px;line-height:14px;color:#111;">Δ3-Σ1</div>
<div class="t" style="left:638.8px;top:1020.5px;font-size:12px;line-height:14px;color:#111;">-67.13</div>
<div class="t" style="left:710.6px;top:1020.5px;font-size:12px;line-height:14px;color:#111;">73.45</div>
<div class="t" style="left:798.8px;top:1020.5px;font-size:12px;line-height:14px;color:#111;">0.91</div>
<svg style="left:746px;top:1020.5px;" width="15" height="14" viewBox="0 0 15 14"><path d="M7.5 0.5 L14.5 13.5 H0.5 Z" fill="#f0c020" stroke="#c89000"/><path d="M7.5 4.5 V9.5 M7.5 11 V12.5" stroke="#222" stroke-width="1.5"/></svg>
<div class="a" style="left:203px;top:1031px;width:1278px;height:1px;background:#777;"></div>
<div class="a" style="left:203px;top:1032px;width:1278px;height:24px;background:#e6e6e6;"></div>
<div class="a" style="left:310px;top:1032px;width:148px;height:23px;background:#fff;border:1px solid #c8c8c8;border-top:none"></div>
<svg style="left:207px;top:1035px;" width="14" height="16" viewBox="0 0 14 16"><rect x="1" y="2" width="12" height="13" rx="1" fill="#fff" stroke="#6a3a20" stroke-width="1.3"/><rect x="4" y="0.5" width="6" height="3" fill="#ccc" stroke="#555" stroke-width="0.8"/></svg>
<div class="t" style="left:224.7px;top:1036.5px;font-size:12px;line-height:14px;color:#333;transform:scaleX(1.028);transform-origin:0 0;">Αποτελέσματα</div>
<svg style="left:315px;top:1035px;" width="16" height="17" viewBox="0 0 16 17"><rect x="0.5" y="1" width="14" height="11" fill="#e0e8f0" stroke="#8ab"/><rect x="0.5" y="1" width="14" height="3" fill="#6a9ad8"/><path d="M4 4 V12 M8 4 V12 M11.5 4 V12 M1 7 H14 M1 9.5 H14" stroke="#fff" stroke-width="0.8"/><text x="7" y="17" font-family="Liberation Sans" font-weight="bold" font-size="9" fill="#a01010">1</text></svg>
<div class="t" style="left:333.0px;top:1036.0px;font-size:12px;line-height:14px;color:#333;transform:scaleX(0.983);transform-origin:0 0;">Παράθυρο Εργασίας 1</div>
<svg style="left:463px;top:1035px;" width="16" height="17" viewBox="0 0 16 17"><rect x="0.5" y="1" width="14" height="11" fill="#e0e8f0" stroke="#8ab"/><rect x="0.5" y="1" width="14" height="3" fill="#6a9ad8"/><path d="M4 4 V12 M8 4 V12 M11.5 4 V12 M1 7 H14 M1 9.5 H14" stroke="#fff" stroke-width="0.8"/><text x="7" y="17" font-family="Liberation Sans" font-weight="bold" font-size="9" fill="#a01010">2</text></svg>
<div class="t" style="left:481.0px;top:1036.5px;font-size:12px;line-height:14px;color:#333;">Παράθυρο Εργασίας 2</div>
<svg style="left:611px;top:1035px;" width="15" height="15" viewBox="0 0 15 15"><path d="M7.5 1 L14 7 H12 V14 H3 V7 H1 Z" fill="#f8e8c0" stroke="#d89020" stroke-width="1.2"/><rect x="6" y="9" width="3" height="5" fill="#d89020"/></svg>
<div class="t" style="left:629.0px;top:1036.5px;font-size:12px;line-height:14px;color:#333;">Βοήθεια</div>
<div class="a" style="left:1481px;top:795px;width:8px;height:261px;background:#e6e6e6;"></div>
<div class="a" style="left:203px;top:794px;width:1279px;height:1px;background:#cfcfcf;"></div>
<div class="a" style="left:1481px;top:134px;width:1px;height:922px;background:#b4b4b4;"></div>
<div class="a" style="left:0px;top:1055px;width:1765px;height:1px;background:#d8d8d8;"></div>
<div class="a" style="left:0px;top:1056px;width:1765px;height:22px;background:#f0f0f0;"></div>
<svg style="left:278px;top:1061px;" width="15" height="14" viewBox="0 0 15 14"><rect x="0.5" y="0.5" width="14" height="13" fill="#e8eef8" stroke="#4a6aa8"/><rect x="0.5" y="0.5" width="14" height="3" fill="#5a8ad0"/><path d="M5 3 V13 M10 3 V13 M1 6.5 H14 M1 10 H14" stroke="#4a6aa8" stroke-width="0.7"/></svg>
<svg style="left:294px;top:1066px;" width="6" height="4" viewBox="0 0 6 4"><path d="M0 0 H6 L3 3 Z" fill="#555"/></svg>
<svg style="left:309px;top:1061px;" width="17" height="14" viewBox="0 0 17 14"><rect x="0" y="0" width="17" height="14" fill="#fff"/><rect x="0" y="0.0" width="17" height="1.6" fill="#1a4ad0"/><rect x="0" y="3.1" width="17" height="1.6" fill="#1a4ad0"/><rect x="0" y="6.2" width="17" height="1.6" fill="#1a4ad0"/><rect x="0" y="9.3" width="17" height="1.6" fill="#1a4ad0"/><rect x="0" y="12.4" width="17" height="1.6" fill="#1a4ad0"/><rect x="0" y="0" width="6" height="6" fill="#1a4ad0"/><path d="M3 0 V6 M0 3 H6" stroke="#fff" stroke-width="1"/></svg>
<div class="t" style="left:340.6px;top:1061.0px;font-size:12px;line-height:14px;color:#222;transform:scaleX(0.962);transform-origin:0 0;">ΕΥΡΩΚΩΔΙΚΕΣ | Ιδιομορφική | Κ.Π.Μ. | q=5.00 | Σχεδιασμού | Τύπος 1</div>
<div class="t" style="left:796.0px;top:1061.0px;font-size:12px;line-height:14px;color:#222;transform:scaleX(0.967);transform-origin:0 0;">Αποτίμηση-Ενισχύσεις | q-Καθολ.Συντ.Συμπ. | ΟΣ: ΕΚ8-3 | ΦΤ: σχ.ΚΑΔΕΤ</div>
<div class="a" style="left:1211px;top:1058px;width:22px;height:19px;background:#c8c8c8;"></div>
<svg style="left:1215px;top:1060px;" width="14" height="15" viewBox="0 0 14 15"><path d="M3.5 7 V4.5 C3.5 1, 10.5 1, 10.5 4.5 V7" stroke="#a08020" stroke-width="1.5" fill="none"/><rect x="1.5" y="7" width="11" height="7.5" fill="#f0c030" stroke="#a08020"/><path d="M7 9 V12" stroke="#604000" stroke-width="1.5"/></svg>
<div class="a" style="left:1412px;top:1058px;width:58px;height:20px;background:#c8c8c8;"></div>
<div class="t" style="left:1416.4px;top:1062.0px;font-size:12px;line-height:14px;color:#222;transform:scaleX(1.042);transform-origin:0 0;">κάναβος</div>
<div class="t" style="left:1473.0px;top:1062.0px;font-size:12px;line-height:14px;color:#222;transform:scaleX(1.034);transform-origin:0 0;">έλξη</div>
<div class="a" style="left:1505px;top:1058px;width:28px;height:20px;background:#c8c8c8;"></div>
<div class="t" style="left:1508.0px;top:1062.0px;font-size:12px;line-height:14px;color:#222;transform:scaleX(1.187);transform-origin:0 0;">dxf</div>
<div class="t" style="left:1535.0px;top:1062.0px;font-size:12px;line-height:14px;color:#222;transform:scaleX(1.034);transform-origin:0 0;">έλξη</div>
<div class="t" style="left:1571.0px;top:1062.0px;font-size:12px;line-height:14px;color:#222;transform:scaleX(1.074);transform-origin:0 0;">κάθετα</div>
<div class="a" style="left:1626px;top:1068px;width:9px;height:1px;background:#888;"></div>
<div class="a" style="left:1645px;top:1068px;width:87px;height:1px;background:#aaa;"></div>
<div class="a" style="left:1685px;top:1061px;width:7px;height:14px;background:#f4f4f4;border:1px solid #888"></div>
<svg style="left:1741px;top:1063px" width="10" height="10"><path d="M5 0.5 V9.5 M0.5 5 H9.5" stroke="#888" stroke-width="1.2"/></svg>
</body></html>
